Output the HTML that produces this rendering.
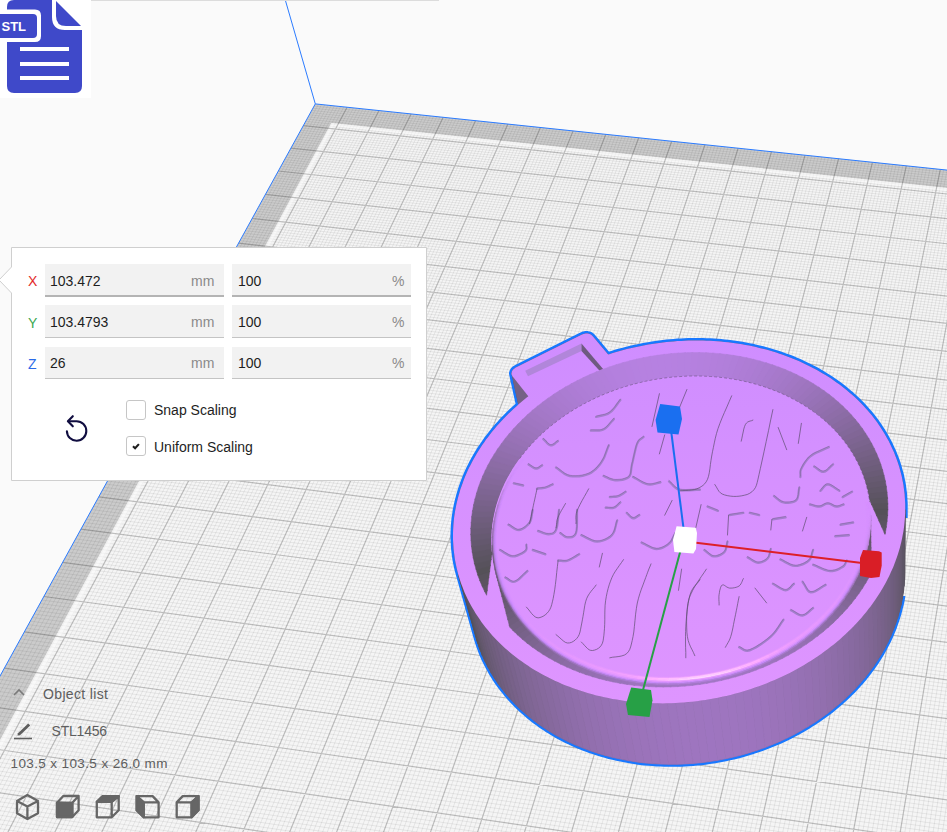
<!DOCTYPE html>
<html><head><meta charset="utf-8">
<style>
html,body{margin:0;padding:0;width:947px;height:832px;overflow:hidden;background:#fafafa;font-family:"Liberation Sans",sans-serif;}
#root{position:relative;width:947px;height:832px;overflow:hidden;}
.abs{position:absolute;}
.t{position:absolute;white-space:nowrap;line-height:1;}
.fld{position:absolute;background:#f2f2f2;border-bottom:1px solid #c4c4c4;box-sizing:border-box;}
.val{position:absolute;font-size:14px;color:#1e1e1e;white-space:nowrap;line-height:1;}
.unit{position:absolute;font-size:14px;color:#8a8a8a;white-space:nowrap;line-height:1;}
.cb{position:absolute;width:20px;height:20px;border:1px solid #c6c6c6;border-radius:3px;background:#fff;box-sizing:border-box;}
</style></head><body><div id="root">
<svg width="947" height="832" viewBox="0 0 947 832" style="position:absolute;left:0;top:0"><defs>
<linearGradient id="topg" gradientUnits="userSpaceOnUse" x1="0" x2="0" y1="335" y2="705"><stop offset="0.000" stop-color="#cf8dff"/><stop offset="0.200" stop-color="#d28fff"/><stop offset="0.400" stop-color="#d691ff"/><stop offset="0.600" stop-color="#d992ff"/><stop offset="0.800" stop-color="#dc94ff"/><stop offset="1.000" stop-color="#de95ff"/></linearGradient>
<linearGradient id="hl" gradientUnits="userSpaceOnUse" x1="495" x2="870" y1="0" y2="0"><stop offset="0" stop-color="#f0a0ff" stop-opacity="0"/><stop offset="0.15" stop-color="#f0a0ff" stop-opacity="0.7"/><stop offset="0.6" stop-color="#f0a4ff" stop-opacity="0.8"/><stop offset="0.9" stop-color="#f0a0ff" stop-opacity="0.4"/><stop offset="1" stop-color="#f0a0ff" stop-opacity="0"/></linearGradient><linearGradient id="hl2" gradientUnits="userSpaceOnUse" x1="495" x2="870" y1="0" y2="0"><stop offset="0" stop-color="#9a70e0" stop-opacity="0"/><stop offset="0.15" stop-color="#9a70e0" stop-opacity="0.7"/><stop offset="0.85" stop-color="#9a70e0" stop-opacity="0.7"/><stop offset="1" stop-color="#9a70e0" stop-opacity="0"/></linearGradient>
<linearGradient id="side" gradientUnits="userSpaceOnUse" x1="452" x2="906" y1="0" y2="0"><stop offset="0" stop-color="#5e5068"/><stop offset="0.12" stop-color="#74608a"/><stop offset="0.5" stop-color="#9a78be"/><stop offset="0.8" stop-color="#8e70b0"/><stop offset="0.93" stop-color="#7a6494"/><stop offset="1" stop-color="#5e5068"/></linearGradient>
<linearGradient id="wall" gradientUnits="userSpaceOnUse" x1="470" x2="888" y1="0" y2="0"><stop offset="0" stop-color="#62567a"/><stop offset="0.07" stop-color="#7a6494"/><stop offset="0.22" stop-color="#a07cca"/><stop offset="0.55" stop-color="#b48ae0"/><stop offset="0.83" stop-color="#9474b8"/><stop offset="0.95" stop-color="#705c88"/><stop offset="1" stop-color="#605470"/></linearGradient>
<linearGradient id="dband" gradientUnits="userSpaceOnUse" x1="490" x2="872" y1="0" y2="0"><stop offset="0" stop-color="#62567a"/><stop offset="0.5" stop-color="#a078c4"/><stop offset="1" stop-color="#62567a"/></linearGradient>
</defs><polygon points="315.3,103.9 1323.1,209.5 1322.8,1365.8 -236.1,1104.5" fill="#f5f5f5"/><polygon points="315.3,103.9 1323.1,209.5 1323.1,227.7 331.3,122.9 -198.9,1110.7 -236.1,1104.5" fill="#cbcbcb"/><path d="M318.5 104.2L-231.3 1105.3M314.1 106.1L1323.1 211.9M321.6 104.6L-226.6 1106.1M312.9 108.2L1323.1 214.3M324.8 104.9L-221.8 1106.9M311.7 110.4L1323.1 216.7M328.0 105.2L-217.0 1107.7M310.5 112.6L1323.1 219.2M331.2 105.6L-212.3 1108.5M309.3 114.8L1323.1 221.6M334.4 105.9L-207.5 1109.3M308.1 116.9L1323.1 224.1M337.6 106.2L-202.7 1110.1M306.9 119.1L1323.1 226.5M340.7 106.6L-197.9 1110.9M305.7 121.3L1323.1 229.0M343.9 106.9L-193.2 1111.7M304.5 123.5L1323.1 231.4M350.3 107.6L-183.6 1113.3M302.1 127.9L1323.1 236.4M353.5 107.9L-178.8 1114.1M300.8 130.2L1323.1 238.9M356.7 108.2L-174.0 1114.9M299.6 132.4L1323.1 241.4M359.9 108.6L-169.2 1115.7M298.4 134.6L1323.1 243.9M363.1 108.9L-164.4 1116.5M297.2 136.8L1323.1 246.4M366.2 109.2L-159.6 1117.3M295.9 139.1L1323.1 248.9M369.4 109.6L-154.8 1118.1M294.7 141.3L1323.1 251.4M372.6 109.9L-150.0 1118.9M293.4 143.6L1323.1 253.9M375.8 110.3L-145.2 1119.7M292.2 145.8L1323.1 256.4M382.2 110.9L-135.6 1121.3M289.7 150.3L1323.1 261.5M385.4 111.3L-130.8 1122.1M288.5 152.6L1323.1 264.1M388.6 111.6L-126.0 1122.9M287.2 154.9L1323.1 266.6M391.8 111.9L-121.2 1123.8M286.0 157.2L1323.1 269.2M395.0 112.3L-116.3 1124.6M284.7 159.5L1323.1 271.7M398.2 112.6L-111.5 1125.4M283.4 161.7L1323.1 274.3M401.5 112.9L-106.7 1126.2M282.2 164.0L1323.1 276.9M404.7 113.3L-101.8 1127.0M280.9 166.3L1323.1 279.5M407.9 113.6L-97.0 1127.8M279.6 168.7L1323.1 282.1M414.3 114.3L-87.3 1129.4M277.1 173.3L1323.1 287.3M417.5 114.6L-82.5 1130.2M275.8 175.6L1323.1 289.9M420.7 115.0L-77.7 1131.0M274.5 177.9L1323.1 292.5M423.9 115.3L-72.8 1131.9M273.2 180.3L1323.1 295.1M427.1 115.6L-68.0 1132.7M271.9 182.6L1323.1 297.8M430.4 116.0L-63.1 1133.5M270.6 185.0L1323.1 300.4M433.6 116.3L-58.2 1134.3M269.3 187.3L1323.1 303.1M436.8 116.6L-53.4 1135.1M268.0 189.7L1323.1 305.7M440.0 117.0L-48.5 1135.9M266.7 192.1L1323.1 308.4M446.5 117.7L-38.8 1137.6M264.1 196.8L1323.1 313.7M449.7 118.0L-33.9 1138.4M262.8 199.2L1323.1 316.4M452.9 118.3L-29.1 1139.2M261.5 201.6L1323.1 319.1M456.1 118.7L-24.2 1140.0M260.2 204.0L1323.1 321.8M459.4 119.0L-19.3 1140.8M258.8 206.4L1323.1 324.5M462.6 119.3L-14.4 1141.6M257.5 208.8L1323.1 327.2M465.8 119.7L-9.5 1142.5M256.2 211.2L1323.1 329.9M469.1 120.0L-4.7 1143.3M254.8 213.6L1323.0 332.7M472.3 120.4L0.2 1144.1M253.5 216.0L1323.0 335.4M478.8 121.0L10.0 1145.7M250.8 220.9L1323.0 340.9M482.0 121.4L14.9 1146.6M249.5 223.3L1323.0 343.6M485.2 121.7L19.8 1147.4M248.1 225.8L1323.0 346.4M488.5 122.1L24.7 1148.2M246.8 228.3L1323.0 349.2M491.7 122.4L29.6 1149.0M245.4 230.7L1323.0 351.9M494.9 122.7L34.5 1149.9M244.1 233.2L1323.0 354.7M498.2 123.1L39.4 1150.7M242.7 235.7L1323.0 357.5M501.4 123.4L44.4 1151.5M241.3 238.1L1323.0 360.3M504.7 123.7L49.3 1152.3M240.0 240.6L1323.0 363.1M511.2 124.4L59.1 1154.0M237.2 245.6L1323.0 368.8M514.4 124.8L64.0 1154.8M235.8 248.1L1323.0 371.6M517.7 125.1L69.0 1155.6M234.4 250.6L1323.0 374.4M520.9 125.4L73.9 1156.5M233.1 253.2L1323.0 377.3M524.2 125.8L78.8 1157.3M231.7 255.7L1323.0 380.1M527.4 126.1L83.8 1158.1M230.3 258.2L1323.0 383.0M530.7 126.5L88.7 1158.9M228.9 260.8L1323.0 385.9M533.9 126.8L93.7 1159.8M227.5 263.3L1323.0 388.7M537.2 127.2L98.6 1160.6M226.1 265.9L1323.0 391.6M543.7 127.8L108.5 1162.3M223.2 271.0L1323.0 397.4M547.0 128.2L113.5 1163.1M221.8 273.5L1323.0 400.3M550.2 128.5L118.4 1163.9M220.4 276.1L1323.0 403.2M553.5 128.9L123.4 1164.7M219.0 278.7L1323.0 406.2M556.7 129.2L128.3 1165.6M217.5 281.3L1323.0 409.1M560.0 129.5L133.3 1166.4M216.1 283.9L1323.0 412.0M563.3 129.9L138.3 1167.2M214.7 286.5L1323.0 415.0M566.5 130.2L143.2 1168.1M213.2 289.1L1323.0 417.9M569.8 130.6L148.2 1168.9M211.8 291.7L1323.0 420.9M576.3 131.3L158.2 1170.6M208.9 297.0L1323.0 426.9M579.6 131.6L163.2 1171.4M207.4 299.6L1323.0 429.8M582.9 131.9L168.1 1172.2M206.0 302.3L1323.0 432.8M586.2 132.3L173.1 1173.1M204.5 304.9L1323.0 435.9M589.4 132.6L178.1 1173.9M203.1 307.6L1323.0 438.9M592.7 133.0L183.1 1174.8M201.6 310.2L1323.0 441.9M596.0 133.3L188.1 1175.6M200.1 312.9L1323.0 444.9M599.3 133.7L193.1 1176.4M198.6 315.6L1323.0 448.0M602.6 134.0L198.1 1177.3M197.2 318.3L1323.0 451.0M609.1 134.7L208.1 1179.0M194.2 323.7L1323.0 457.1M612.4 135.0L213.1 1179.8M192.7 326.4L1323.0 460.2M615.7 135.4L218.2 1180.6M191.2 329.1L1323.0 463.3M619.0 135.7L223.2 1181.5M189.7 331.8L1323.0 466.4M622.3 136.1L228.2 1182.3M188.2 334.6L1323.0 469.5M625.6 136.4L233.2 1183.2M186.7 337.3L1323.0 472.6M628.8 136.8L238.2 1184.0M185.2 340.0L1323.0 475.7M632.1 137.1L243.3 1184.8M183.7 342.8L1323.0 478.8M635.4 137.4L248.3 1185.7M182.1 345.6L1323.0 482.0M642.0 138.1L258.4 1187.4M179.1 351.1L1323.0 488.3M645.3 138.5L263.4 1188.2M177.6 353.9L1323.0 491.4M648.6 138.8L268.5 1189.1M176.0 356.7L1323.0 494.6M651.9 139.2L273.5 1189.9M174.5 359.5L1323.0 497.8M655.2 139.5L278.6 1190.8M172.9 362.3L1323.0 501.0M658.5 139.9L283.6 1191.6M171.4 365.1L1323.0 504.2M661.8 140.2L288.7 1192.5M169.8 367.9L1323.0 507.4M665.1 140.6L293.7 1193.3M168.3 370.7L1323.0 510.6M668.4 140.9L298.8 1194.1M166.7 373.6L1323.0 513.8M675.0 141.6L308.9 1195.8M163.6 379.3L1323.0 520.3M678.3 141.9L314.0 1196.7M162.0 382.1L1323.0 523.6M681.7 142.3L319.1 1197.5M160.4 385.0L1323.0 526.8M685.0 142.6L324.1 1198.4M158.8 387.9L1323.0 530.1M688.3 143.0L329.2 1199.3M157.2 390.7L1323.0 533.4M691.6 143.3L334.3 1200.1M155.7 393.6L1323.0 536.7M694.9 143.7L339.4 1201.0M154.1 396.5L1323.0 540.0M698.2 144.0L344.5 1201.8M152.5 399.4L1323.0 543.3M701.5 144.4L349.6 1202.7M150.8 402.3L1323.0 546.6M708.2 145.1L359.8 1204.4M147.6 408.2L1323.0 553.3M711.5 145.4L364.9 1205.2M146.0 411.1L1323.0 556.6M714.8 145.8L370.0 1206.1M144.4 414.1L1323.0 560.0M718.1 146.1L375.1 1206.9M142.8 417.0L1323.0 563.4M721.5 146.5L380.2 1207.8M141.1 420.0L1323.0 566.7M724.8 146.8L385.3 1208.7M139.5 423.0L1323.0 570.1M728.1 147.2L390.4 1209.5M137.8 425.9L1323.0 573.5M731.4 147.5L395.5 1210.4M136.2 428.9L1323.0 577.0M734.8 147.9L400.6 1211.2M134.6 431.9L1323.0 580.4M741.4 148.5L410.9 1212.9M131.2 437.9L1323.0 587.2M744.8 148.9L416.0 1213.8M129.6 440.9L1323.0 590.7M748.1 149.2L421.1 1214.7M127.9 444.0L1323.0 594.2M751.4 149.6L426.3 1215.5M126.2 447.0L1323.0 597.6M754.8 149.9L431.4 1216.4M124.6 450.1L1323.0 601.1M758.1 150.3L436.6 1217.2M122.9 453.1L1323.0 604.6M761.5 150.6L441.7 1218.1M121.2 456.2L1323.0 608.1M764.8 151.0L446.9 1219.0M119.5 459.2L1323.0 611.6M768.1 151.3L452.0 1219.8M117.8 462.3L1323.0 615.2M774.8 152.0L462.3 1221.6M114.4 468.5L1323.0 622.2M778.2 152.4L467.5 1222.4M112.7 471.6L1323.0 625.8M781.5 152.7L472.6 1223.3M111.0 474.7L1323.0 629.4M784.9 153.1L477.8 1224.2M109.2 477.8L1323.0 632.9M788.2 153.4L483.0 1225.0M107.5 481.0L1323.0 636.5M791.6 153.8L488.2 1225.9M105.8 484.1L1323.0 640.1M794.9 154.2L493.3 1226.8M104.0 487.3L1323.0 643.7M798.3 154.5L498.5 1227.6M102.3 490.4L1323.0 647.4M801.6 154.9L503.7 1228.5M100.6 493.6L1323.0 651.0M808.3 155.6L514.1 1230.2M97.1 500.0L1323.0 658.3M811.7 155.9L519.3 1231.1M95.3 503.2L1323.0 662.0M815.1 156.3L524.4 1232.0M93.5 506.4L1323.0 665.6M818.4 156.6L529.6 1232.9M91.8 509.6L1323.0 669.3M821.8 157.0L534.8 1233.7M90.0 512.8L1323.0 673.0M825.1 157.3L540.0 1234.6M88.2 516.0L1323.0 676.7M828.5 157.7L545.3 1235.5M86.4 519.3L1323.0 680.5M831.9 158.0L550.5 1236.3M84.6 522.5L1323.0 684.2M835.2 158.4L555.7 1237.2M82.8 525.8L1323.0 688.0M842.0 159.1L566.1 1239.0M79.2 532.3L1323.0 695.5M845.4 159.4L571.3 1239.8M77.4 535.6L1323.0 699.3M848.7 159.8L576.6 1240.7M75.6 538.9L1323.0 703.1M852.1 160.1L581.8 1241.6M73.8 542.2L1323.0 706.9M855.5 160.5L587.0 1242.5M71.9 545.5L1323.0 710.7M858.9 160.8L592.2 1243.3M70.1 548.9L1323.0 714.5M862.2 161.2L597.5 1244.2M68.3 552.2L1323.0 718.4M865.6 161.6L602.7 1245.1M66.4 555.6L1323.0 722.2M869.0 161.9L608.0 1246.0M64.6 558.9L1323.0 726.1M875.8 162.6L618.5 1247.7M60.9 565.7L1323.0 733.9M879.1 163.0L623.7 1248.6M59.0 569.0L1323.0 737.8M882.5 163.3L629.0 1249.5M57.1 572.4L1323.0 741.7M885.9 163.7L634.2 1250.4M55.2 575.8L1323.0 745.6M889.3 164.0L639.5 1251.3M53.4 579.3L1323.0 749.5M892.7 164.4L644.8 1252.1M51.5 582.7L1323.0 753.5M896.1 164.7L650.0 1253.0M49.6 586.1L1323.0 757.5M899.5 165.1L655.3 1253.9M47.7 589.6L1323.0 761.4M902.9 165.5L660.6 1254.8M45.8 593.0L1323.0 765.4M909.7 166.2L671.1 1256.6M41.9 600.0L1323.0 773.5M913.0 166.5L676.4 1257.5M40.0 603.5L1323.0 777.5M916.4 166.9L681.7 1258.3M38.1 607.0L1323.0 781.5M919.8 167.2L687.0 1259.2M36.2 610.5L1323.0 785.6M923.2 167.6L692.3 1260.1M34.2 614.0L1323.0 789.7M926.6 167.9L697.6 1261.0M32.3 617.5L1323.0 793.7M930.1 168.3L702.9 1261.9M30.3 621.1L1323.0 797.8M933.5 168.7L708.2 1262.8M28.4 624.6L1323.0 801.9M936.9 169.0L713.5 1263.7M26.4 628.2L1322.9 806.1M943.7 169.7L724.1 1265.5M22.5 635.3L1322.9 814.4M947.1 170.1L729.4 1266.3M20.5 638.9L1322.9 818.5M950.5 170.4L734.7 1267.2M18.5 642.5L1322.9 822.7M953.9 170.8L740.1 1268.1M16.5 646.2L1322.9 826.9M957.3 171.2L745.4 1269.0M14.5 649.8L1322.9 831.1M960.7 171.5L750.7 1269.9M12.5 653.4L1322.9 835.3M964.2 171.9L756.1 1270.8M10.5 657.1L1322.9 839.5M967.6 172.2L761.4 1271.7M8.5 660.8L1322.9 843.8M971.0 172.6L766.7 1272.6M6.4 664.4L1322.9 848.1M977.8 173.3L777.4 1274.4M2.4 671.8L1322.9 856.6M981.3 173.7L782.8 1275.3M0.3 675.5L1322.9 860.9M984.7 174.0L788.1 1276.2M-1.7 679.2L1322.9 865.2M988.1 174.4L793.5 1277.1M-3.8 683.0L1322.9 869.6M991.5 174.7L798.8 1278.0M-5.9 686.7L1322.9 873.9M995.0 175.1L804.2 1278.9M-7.9 690.5L1322.9 878.3M998.4 175.5L809.5 1279.8M-10.0 694.2L1322.9 882.7M1001.8 175.8L814.9 1280.7M-12.1 698.0L1322.9 887.0M1005.2 176.2L820.3 1281.6M-14.2 701.8L1322.9 891.5M1012.1 176.9L831.0 1283.4M-18.4 709.4L1322.9 900.3M1015.5 177.3L836.4 1284.3M-20.5 713.2L1322.9 904.8M1019.0 177.6L841.8 1285.2M-22.6 717.1L1322.9 909.2M1022.4 178.0L847.2 1286.1M-24.7 720.9L1322.9 913.7M1025.9 178.3L852.6 1287.0M-26.8 724.8L1322.9 918.2M1029.3 178.7L858.0 1287.9M-29.0 728.7L1322.9 922.7M1032.7 179.1L863.4 1288.8M-31.1 732.5L1322.9 927.2M1036.2 179.4L868.8 1289.7M-33.3 736.4L1322.9 931.8M1039.6 179.8L874.2 1290.6M-35.4 740.4L1322.9 936.3M1046.5 180.5L885.0 1292.4M-39.7 748.2L1322.9 945.5M1050.0 180.9L890.4 1293.3M-41.9 752.2L1322.9 950.1M1053.4 181.2L895.8 1294.2M-44.1 756.1L1322.9 954.7M1056.9 181.6L901.2 1295.1M-46.3 760.1L1322.9 959.4M1060.3 182.0L906.6 1296.1M-48.5 764.1L1322.9 964.0M1063.8 182.3L912.1 1297.0M-50.7 768.1L1322.9 968.7M1067.2 182.7L917.5 1297.9M-52.9 772.1L1322.9 973.4M1070.7 183.0L922.9 1298.8M-55.1 776.1L1322.9 978.1M1074.2 183.4L928.4 1299.7M-57.3 780.2L1322.9 982.8M1081.1 184.1L939.2 1301.5M-61.8 788.3L1322.9 992.3M1084.5 184.5L944.7 1302.4M-64.1 792.3L1322.9 997.0M1088.0 184.8L950.1 1303.3M-66.3 796.4L1322.9 1001.8M1091.5 185.2L955.6 1304.3M-68.6 800.5L1322.9 1006.6M1094.9 185.6L961.0 1305.2M-70.9 804.7L1322.9 1011.4M1098.4 185.9L966.5 1306.1M-73.1 808.8L1322.9 1016.3M1101.9 186.3L972.0 1307.0M-75.4 812.9L1322.9 1021.1M1105.3 186.7L977.4 1307.9M-77.7 817.1L1322.9 1026.0M1108.8 187.0L982.9 1308.8M-80.0 821.3L1322.9 1030.9M1115.8 187.8L993.8 1310.7M-84.6 829.6L1322.9 1040.7M1119.2 188.1L999.3 1311.6M-86.9 833.9L1322.9 1045.7M1122.7 188.5L1004.8 1312.5M-89.3 838.1L1322.9 1050.6M1126.2 188.8L1010.3 1313.4M-91.6 842.3L1322.9 1055.6M1129.7 189.2L1015.8 1314.3M-94.0 846.6L1322.9 1060.6M1133.1 189.6L1021.3 1315.3M-96.3 850.9L1322.9 1065.6M1136.6 189.9L1026.8 1316.2M-98.7 855.1L1322.9 1070.6M1140.1 190.3L1032.3 1317.1M-101.0 859.4L1322.9 1075.7M1143.6 190.7L1037.8 1318.0M-103.4 863.7L1322.9 1080.7M1150.6 191.4L1048.8 1319.9M-108.2 872.4L1322.9 1090.9M1154.0 191.8L1054.3 1320.8M-110.6 876.8L1322.9 1096.0M1157.5 192.1L1059.8 1321.7M-113.0 881.1L1322.9 1101.2M1161.0 192.5L1065.3 1322.7M-115.4 885.5L1322.9 1106.3M1164.5 192.9L1070.8 1323.6M-117.8 889.9L1322.9 1111.5M1168.0 193.2L1076.4 1324.5M-120.3 894.3L1322.9 1116.7M1171.5 193.6L1081.9 1325.4M-122.7 898.8L1322.9 1121.9M1175.0 194.0L1087.4 1326.4M-125.2 903.2L1322.9 1127.2M1178.5 194.3L1093.0 1327.3M-127.6 907.7L1322.9 1132.4M1185.5 195.1L1104.0 1329.1M-132.6 916.6L1322.9 1143.0M1189.0 195.4L1109.6 1330.1M-135.0 921.1L1322.9 1148.3M1192.5 195.8L1115.1 1331.0M-137.5 925.7L1322.9 1153.6M1196.0 196.2L1120.7 1331.9M-140.0 930.2L1322.9 1159.0M1199.5 196.5L1126.2 1332.9M-142.5 934.7L1322.9 1164.3M1203.0 196.9L1131.8 1333.8M-145.0 939.3L1322.9 1169.7M1206.5 197.3L1137.4 1334.7M-147.6 943.9L1322.9 1175.2M1210.0 197.6L1142.9 1335.7M-150.1 948.5L1322.9 1180.6M1213.6 198.0L1148.5 1336.6M-152.6 953.1L1322.9 1186.0M1220.6 198.7L1159.6 1338.5M-157.8 962.4L1322.9 1197.0M1224.1 199.1L1165.2 1339.4M-160.3 967.0L1322.9 1202.5M1227.6 199.5L1170.8 1340.3M-162.9 971.7L1322.9 1208.0M1231.1 199.8L1176.4 1341.3M-165.5 976.4L1322.9 1213.6M1234.7 200.2L1182.0 1342.2M-168.1 981.1L1322.9 1219.2M1238.2 200.6L1187.6 1343.1M-170.7 985.9L1322.9 1224.8M1241.7 200.9L1193.2 1344.1M-173.3 990.6L1322.9 1230.4M1245.2 201.3L1198.8 1345.0M-175.9 995.4L1322.9 1236.0M1248.7 201.7L1204.4 1346.0M-178.6 1000.1L1322.9 1241.7M1255.8 202.4L1215.6 1347.8M-183.9 1009.7L1322.9 1253.1M1259.3 202.8L1221.2 1348.8M-186.5 1014.6L1322.9 1258.8M1262.9 203.2L1226.8 1349.7M-189.2 1019.4L1322.9 1264.6M1266.4 203.5L1232.4 1350.7M-191.9 1024.3L1322.9 1270.3M1269.9 203.9L1238.1 1351.6M-194.6 1029.2L1322.9 1276.1M1273.5 204.3L1243.7 1352.6M-197.3 1034.1L1322.8 1282.0M1277.0 204.6L1249.3 1353.5M-200.0 1039.0L1322.8 1287.8M1280.5 205.0L1254.9 1354.4M-202.7 1043.9L1322.8 1293.7M1284.1 205.4L1260.6 1355.4M-205.4 1048.8L1322.8 1299.5M1291.1 206.1L1271.9 1357.3M-210.9 1058.8L1322.8 1311.4M1294.7 206.5L1277.5 1358.2M-213.7 1063.8L1322.8 1317.3M1298.2 206.9L1283.2 1359.2M-216.4 1068.8L1322.8 1323.3M1301.8 207.2L1288.8 1360.1M-219.2 1073.9L1322.8 1329.3M1305.3 207.6L1294.5 1361.1M-222.0 1078.9L1322.8 1335.3M1308.9 208.0L1300.1 1362.0M-224.8 1084.0L1322.8 1341.4M1312.4 208.4L1305.8 1363.0M-227.6 1089.1L1322.8 1347.5M1316.0 208.7L1311.5 1363.9M-230.4 1094.2L1322.8 1353.6M1319.5 209.1L1317.2 1364.9M-233.2 1099.3L1322.8 1359.7" stroke="#000" stroke-opacity="0.065" stroke-width="1" fill="none"/><polygon points="1323.1,227.7 331.3,122.9 -198.9,1110.7 -192.2,1111.8 334.2,126.4 1323.1,231.2" fill="#fbfbfb" opacity="0.55"/><path d="M347.1 107.2L-188.4 1112.5M303.3 125.7L1323.1 233.9M379.0 110.6L-140.4 1120.5M291.0 148.1L1323.1 259.0M411.1 113.9L-92.2 1128.6M278.3 171.0L1323.1 284.7M443.2 117.3L-43.7 1136.7M265.4 194.4L1323.1 311.0M475.5 120.7L5.1 1144.9M252.2 218.5L1323.0 338.1M507.9 124.1L54.2 1153.1M238.6 243.1L1323.0 365.9M540.4 127.5L103.6 1161.4M224.7 268.4L1323.0 394.5M573.1 130.9L153.2 1169.7M210.4 294.4L1323.0 423.9M605.8 134.3L203.1 1178.1M195.7 321.0L1323.0 454.1M638.7 137.8L253.3 1186.5M180.6 348.3L1323.0 485.1M671.7 141.2L303.8 1195.0M165.1 376.4L1323.0 517.1M704.9 144.7L354.7 1203.5M149.2 405.3L1323.0 549.9M738.1 148.2L405.8 1212.1M132.9 434.9L1323.0 583.8M771.5 151.7L457.2 1220.7M116.1 465.4L1323.0 618.7M805.0 155.2L508.9 1229.4M98.8 496.8L1323.0 654.6M838.6 158.7L560.9 1238.1M81.0 529.1L1323.0 691.7M872.4 162.3L613.2 1246.9M62.7 562.3L1323.0 730.0M906.3 165.8L665.8 1255.7M43.9 596.5L1323.0 769.4M940.3 169.4L718.8 1264.6M24.4 631.8L1322.9 810.2M974.4 173.0L772.1 1273.5M4.4 668.1L1322.9 852.3M1008.7 176.5L825.7 1282.5M-16.3 705.6L1322.9 895.9M1043.1 180.1L879.6 1291.5M-37.6 744.3L1322.9 940.9M1077.6 183.8L933.8 1300.6M-59.6 784.2L1322.9 987.5M1112.3 187.4L988.4 1309.8M-82.3 825.5L1322.9 1035.8M1147.1 191.0L1043.3 1319.0M-105.8 868.1L1322.9 1085.8M1182.0 194.7L1098.5 1328.2M-130.1 912.1L1322.9 1137.7M1217.1 198.4L1154.1 1337.5M-155.2 957.7L1322.9 1191.5M1252.3 202.1L1210.0 1346.9M-181.2 1004.9L1322.9 1247.4M1287.6 205.8L1266.2 1356.3M-208.1 1053.8L1322.8 1305.4M1323.1 209.5L1322.8 1365.8M-236.1 1104.5L1322.8 1365.8" stroke="#000" stroke-opacity="0.23" stroke-width="1.2" fill="none"/><path d="M1323.1 209.5L315.3 103.9L-236.1 1104.5M315.3 103.9L285 -1" stroke="#2b7bff" stroke-width="1" fill="none"/><clipPath id="bluegap"><path d="M0 0H947V832H0Z M880 518 H947 V596 H880 Z" clip-rule="evenodd"/></clipPath><path d="M592.5 335.9 L591.2 334.8 L589.6 334.0 L587.6 333.6 L585.6 333.5 L583.5 333.9 L581.5 334.7 L515.8 367.6 L514.1 368.7 L512.7 370.0 L511.9 371.6 L511.5 373.2 L511.7 374.7 L518.3 404.7 L516.0 406.7 L513.4 409.0 L510.9 411.4 L508.4 413.8 L506.0 416.2 L503.5 418.7 L501.2 421.2 L498.9 423.8 L496.6 426.3 L494.4 428.9 L492.2 431.6 L490.1 434.2 L488.1 436.9 L486.0 439.6 L484.1 442.4 L482.2 445.1 L480.3 447.9 L478.5 450.7 L476.8 453.6 L475.1 456.4 L473.5 459.3 L471.9 462.2 L470.4 465.2 L468.9 468.1 L467.5 471.1 L466.2 474.1 L464.9 477.1 L463.7 480.1 L462.6 483.2 L461.5 486.2 L460.4 489.3 L459.5 492.4 L458.6 495.5 L457.8 498.6 L457.0 501.7 L456.3 504.8 L455.7 508.0 L455.1 511.1 L454.6 514.3 L454.1 517.5 L453.8 520.6 L453.5 523.8 L453.3 527.0 L453.1 530.2 L453.0 533.4 L453.0 536.5 L453.0 539.7 L453.2 542.9 L453.4 546.1 L453.6 549.3 L454.0 552.5 L454.4 555.6 L454.8 558.8 L455.4 562.0 L456.0 565.1 L456.7 568.2 L457.5 571.4 L458.3 574.5 L476.0 637.6 L476.9 640.6 L477.9 643.7 L478.9 646.7 L480.0 649.7 L481.2 652.7 L482.4 655.7 L483.7 658.7 L485.1 661.6 L486.6 664.5 L488.1 667.4 L489.7 670.3 L491.3 673.2 L493.0 676.0 L494.8 678.8 L496.6 681.5 L498.5 684.3 L500.5 687.0 L502.6 689.7 L504.7 692.3 L506.8 694.9 L509.1 697.5 L511.4 700.1 L513.7 702.6 L516.1 705.0 L518.6 707.5 L521.2 709.9 L523.8 712.2 L526.4 714.5 L529.1 716.8 L531.9 719.0 L534.7 721.2 L537.6 723.3 L540.5 725.4 L543.5 727.5 L546.6 729.5 L549.7 731.4 L552.8 733.3 L556.0 735.2 L559.2 737.0 L562.5 738.7 L565.9 740.4 L569.2 742.1 L572.7 743.7 L576.1 745.2 L579.6 746.7 L583.2 748.1 L586.8 749.5 L590.4 750.8 L594.0 752.0 L597.7 753.2 L601.5 754.4 L605.2 755.4 L609.0 756.5 L612.8 757.4 L616.7 758.3 L620.6 759.1 L624.5 759.9 L628.4 760.6 L632.3 761.3 L636.3 761.9 L640.3 762.4 L644.3 762.9 L648.3 763.3 L652.3 763.6 L656.4 763.9 L660.4 764.1 L664.5 764.2 L668.6 764.3 L672.6 764.3 L676.7 764.3 L680.8 764.2 L684.9 764.0 L689.0 763.7 L693.1 763.4 L697.2 763.1 L701.3 762.7 L705.4 762.2 L709.4 761.6 L713.5 761.0 L717.6 760.3 L721.6 759.6 L725.6 758.8 L729.6 757.9 L733.6 757.0 L737.6 756.0 L741.6 755.0 L745.5 753.9 L749.4 752.7 L753.3 751.5 L757.2 750.2 L761.1 748.9 L764.9 747.5 L768.7 746.0 L772.4 744.5 L776.1 743.0 L779.8 741.4 L783.5 739.7 L787.1 738.0 L790.7 736.2 L794.2 734.4 L797.7 732.5 L801.2 730.6 L804.6 728.6 L808.0 726.6 L811.3 724.5 L814.6 722.4 L817.9 720.2 L821.1 718.0 L824.2 715.8 L827.3 713.5 L830.4 711.2 L833.3 708.8 L836.3 706.4 L839.2 703.9 L842.0 701.5 L844.8 698.9 L847.5 696.4 L850.2 693.8 L852.8 691.2 L855.3 688.5 L857.8 685.8 L860.3 683.1 L862.6 680.3 L865.0 677.5 L867.2 674.7 L869.4 671.9 L871.5 669.0 L873.6 666.2 L875.6 663.3 L877.5 660.3 L879.4 657.4 L881.2 654.4 L882.9 651.4 L884.6 648.4 L886.2 645.4 L887.8 642.3 L889.3 639.3 L890.7 636.2 L892.0 633.1 L893.3 630.1 L894.5 627.0 L895.6 623.8 L896.7 620.7 L897.7 617.6 L898.7 614.5 L899.5 611.3 L900.3 608.2 L901.1 605.1 L901.8 601.9 L902.4 598.8 L902.9 595.6 L903.4 592.5 L903.8 589.3 L904.1 586.2 L904.4 583.1 L904.6 579.9 L904.7 576.8 L904.8 573.7 L905.2 509.7 L905.2 506.6 L905.2 503.4 L905.0 500.3 L904.8 497.2 L904.6 494.1 L904.2 491.0 L903.8 487.9 L903.4 484.8 L902.8 481.8 L902.2 478.8 L901.6 475.7 L900.8 472.7 L900.0 469.8 L899.2 466.8 L898.3 463.9 L897.3 460.9 L896.2 458.0 L895.1 455.2 L894.0 452.3 L892.7 449.5 L891.4 446.7 L890.1 443.9 L888.7 441.1 L887.2 438.4 L885.7 435.7 L884.1 433.0 L882.5 430.4 L880.8 427.8 L879.1 425.2 L877.3 422.6 L875.4 420.1 L873.5 417.6 L871.6 415.1 L869.6 412.7 L867.5 410.3 L865.4 407.9 L863.2 405.6 L861.0 403.3 L858.8 401.1 L856.5 398.8 L854.1 396.6 L851.8 394.5 L849.3 392.4 L846.8 390.3 L844.3 388.3 L841.8 386.3 L839.2 384.3 L836.5 382.4 L833.8 380.5 L831.1 378.6 L828.3 376.8 L825.5 375.1 L822.7 373.4 L819.8 371.7 L816.9 370.0 L814.0 368.4 L811.0 366.9 L808.0 365.4 L804.9 363.9 L801.9 362.5 L798.8 361.1 L795.6 359.7 L792.5 358.4 L789.3 357.2 L786.0 356.0 L782.8 354.8 L779.5 353.7 L776.2 352.6 L772.9 351.6 L769.6 350.6 L766.2 349.6 L762.8 348.7 L759.4 347.9 L756.0 347.1 L752.6 346.3 L749.1 345.6 L745.6 344.9 L742.1 344.3 L738.6 343.7 L735.1 343.2 L731.6 342.7 L728.0 342.3 L724.4 341.9 L720.9 341.6 L717.3 341.3 L713.7 341.0 L710.1 340.8 L706.5 340.7 L702.9 340.6 L699.2 340.5 L695.6 340.5 L692.0 340.5 L688.3 340.6 L684.7 340.7 L681.1 340.9 L677.4 341.1 L673.8 341.4 L670.1 341.7 L666.5 342.1 L662.9 342.5 L659.2 342.9 L655.6 343.4 L652.0 344.0 L648.4 344.6 L644.8 345.2 L641.2 345.9 L637.6 346.7 L634.0 347.4 L630.4 348.3 L626.8 349.1 L623.3 350.1 L619.8 351.0 L616.2 352.0 L612.7 353.1 L609.2 354.2 L608.2 354.5Z" fill="none" stroke="#1878ff" stroke-width="5" stroke-linejoin="round" clip-path="url(#bluegap)"/><path d="M592.5 335.9 L591.2 334.8 L589.6 334.0 L587.6 333.6 L585.6 333.5 L583.5 333.9 L581.5 334.7 L515.8 367.6 L514.1 368.7 L512.7 370.0 L511.9 371.6 L511.5 373.2 L511.7 374.7 L518.3 404.7 L516.0 406.7 L513.4 409.0 L510.9 411.4 L508.4 413.8 L506.0 416.2 L503.5 418.7 L501.2 421.2 L498.9 423.8 L496.6 426.3 L494.4 428.9 L492.2 431.6 L490.1 434.2 L488.1 436.9 L486.0 439.6 L484.1 442.4 L482.2 445.1 L480.3 447.9 L478.5 450.7 L476.8 453.6 L475.1 456.4 L473.5 459.3 L471.9 462.2 L470.4 465.2 L468.9 468.1 L467.5 471.1 L466.2 474.1 L464.9 477.1 L463.7 480.1 L462.6 483.2 L461.5 486.2 L460.4 489.3 L459.5 492.4 L458.6 495.5 L457.8 498.6 L457.0 501.7 L456.3 504.8 L455.7 508.0 L455.1 511.1 L454.6 514.3 L454.1 517.5 L453.8 520.6 L453.5 523.8 L453.3 527.0 L453.1 530.2 L453.0 533.4 L453.0 536.5 L453.0 539.7 L453.2 542.9 L453.4 546.1 L453.6 549.3 L454.0 552.5 L454.4 555.6 L454.8 558.8 L455.4 562.0 L456.0 565.1 L456.7 568.2 L457.5 571.4 L458.3 574.5 L476.0 637.6 L476.9 640.6 L477.9 643.7 L478.9 646.7 L480.0 649.7 L481.2 652.7 L482.4 655.7 L483.7 658.7 L485.1 661.6 L486.6 664.5 L488.1 667.4 L489.7 670.3 L491.3 673.2 L493.0 676.0 L494.8 678.8 L496.6 681.5 L498.5 684.3 L500.5 687.0 L502.6 689.7 L504.7 692.3 L506.8 694.9 L509.1 697.5 L511.4 700.1 L513.7 702.6 L516.1 705.0 L518.6 707.5 L521.2 709.9 L523.8 712.2 L526.4 714.5 L529.1 716.8 L531.9 719.0 L534.7 721.2 L537.6 723.3 L540.5 725.4 L543.5 727.5 L546.6 729.5 L549.7 731.4 L552.8 733.3 L556.0 735.2 L559.2 737.0 L562.5 738.7 L565.9 740.4 L569.2 742.1 L572.7 743.7 L576.1 745.2 L579.6 746.7 L583.2 748.1 L586.8 749.5 L590.4 750.8 L594.0 752.0 L597.7 753.2 L601.5 754.4 L605.2 755.4 L609.0 756.5 L612.8 757.4 L616.7 758.3 L620.6 759.1 L624.5 759.9 L628.4 760.6 L632.3 761.3 L636.3 761.9 L640.3 762.4 L644.3 762.9 L648.3 763.3 L652.3 763.6 L656.4 763.9 L660.4 764.1 L664.5 764.2 L668.6 764.3 L672.6 764.3 L676.7 764.3 L680.8 764.2 L684.9 764.0 L689.0 763.7 L693.1 763.4 L697.2 763.1 L701.3 762.7 L705.4 762.2 L709.4 761.6 L713.5 761.0 L717.6 760.3 L721.6 759.6 L725.6 758.8 L729.6 757.9 L733.6 757.0 L737.6 756.0 L741.6 755.0 L745.5 753.9 L749.4 752.7 L753.3 751.5 L757.2 750.2 L761.1 748.9 L764.9 747.5 L768.7 746.0 L772.4 744.5 L776.1 743.0 L779.8 741.4 L783.5 739.7 L787.1 738.0 L790.7 736.2 L794.2 734.4 L797.7 732.5 L801.2 730.6 L804.6 728.6 L808.0 726.6 L811.3 724.5 L814.6 722.4 L817.9 720.2 L821.1 718.0 L824.2 715.8 L827.3 713.5 L830.4 711.2 L833.3 708.8 L836.3 706.4 L839.2 703.9 L842.0 701.5 L844.8 698.9 L847.5 696.4 L850.2 693.8 L852.8 691.2 L855.3 688.5 L857.8 685.8 L860.3 683.1 L862.6 680.3 L865.0 677.5 L867.2 674.7 L869.4 671.9 L871.5 669.0 L873.6 666.2 L875.6 663.3 L877.5 660.3 L879.4 657.4 L881.2 654.4 L882.9 651.4 L884.6 648.4 L886.2 645.4 L887.8 642.3 L889.3 639.3 L890.7 636.2 L892.0 633.1 L893.3 630.1 L894.5 627.0 L895.6 623.8 L896.7 620.7 L897.7 617.6 L898.7 614.5 L899.5 611.3 L900.3 608.2 L901.1 605.1 L901.8 601.9 L902.4 598.8 L902.9 595.6 L903.4 592.5 L903.8 589.3 L904.1 586.2 L904.4 583.1 L904.6 579.9 L904.7 576.8 L904.8 573.7 L905.2 509.7 L905.2 506.6 L905.2 503.4 L905.0 500.3 L904.8 497.2 L904.6 494.1 L904.2 491.0 L903.8 487.9 L903.4 484.8 L902.8 481.8 L902.2 478.8 L901.6 475.7 L900.8 472.7 L900.0 469.8 L899.2 466.8 L898.3 463.9 L897.3 460.9 L896.2 458.0 L895.1 455.2 L894.0 452.3 L892.7 449.5 L891.4 446.7 L890.1 443.9 L888.7 441.1 L887.2 438.4 L885.7 435.7 L884.1 433.0 L882.5 430.4 L880.8 427.8 L879.1 425.2 L877.3 422.6 L875.4 420.1 L873.5 417.6 L871.6 415.1 L869.6 412.7 L867.5 410.3 L865.4 407.9 L863.2 405.6 L861.0 403.3 L858.8 401.1 L856.5 398.8 L854.1 396.6 L851.8 394.5 L849.3 392.4 L846.8 390.3 L844.3 388.3 L841.8 386.3 L839.2 384.3 L836.5 382.4 L833.8 380.5 L831.1 378.6 L828.3 376.8 L825.5 375.1 L822.7 373.4 L819.8 371.7 L816.9 370.0 L814.0 368.4 L811.0 366.9 L808.0 365.4 L804.9 363.9 L801.9 362.5 L798.8 361.1 L795.6 359.7 L792.5 358.4 L789.3 357.2 L786.0 356.0 L782.8 354.8 L779.5 353.7 L776.2 352.6 L772.9 351.6 L769.6 350.6 L766.2 349.6 L762.8 348.7 L759.4 347.9 L756.0 347.1 L752.6 346.3 L749.1 345.6 L745.6 344.9 L742.1 344.3 L738.6 343.7 L735.1 343.2 L731.6 342.7 L728.0 342.3 L724.4 341.9 L720.9 341.6 L717.3 341.3 L713.7 341.0 L710.1 340.8 L706.5 340.7 L702.9 340.6 L699.2 340.5 L695.6 340.5 L692.0 340.5 L688.3 340.6 L684.7 340.7 L681.1 340.9 L677.4 341.1 L673.8 341.4 L670.1 341.7 L666.5 342.1 L662.9 342.5 L659.2 342.9 L655.6 343.4 L652.0 344.0 L648.4 344.6 L644.8 345.2 L641.2 345.9 L637.6 346.7 L634.0 347.4 L630.4 348.3 L626.8 349.1 L623.3 350.1 L619.8 351.0 L616.2 352.0 L612.7 353.1 L609.2 354.2 L608.2 354.5Z" fill="#5a5460"/><path d="M902.7 535.1 L901.4 541.5 L901.1 605.1 L902.4 598.8Z" fill="#62576b" stroke="#62576b" stroke-width="0.7"/><path d="M901.4 541.5 L899.8 547.9 L899.5 611.3 L901.1 605.1Z" fill="#65596f" stroke="#65596f" stroke-width="0.7"/><path d="M899.8 547.9 L897.9 554.2 L897.7 617.6 L899.5 611.3Z" fill="#685a73" stroke="#685a73" stroke-width="0.7"/><path d="M897.9 554.2 L895.7 560.6 L895.6 623.8 L897.7 617.6Z" fill="#6b5c77" stroke="#6b5c77" stroke-width="0.7"/><path d="M895.7 560.6 L893.3 566.9 L893.3 630.1 L895.6 623.8Z" fill="#6e5d7b" stroke="#6e5d7b" stroke-width="0.7"/><path d="M893.3 566.9 L890.5 573.1 L890.7 636.2 L893.3 630.1Z" fill="#705e7f" stroke="#705e7f" stroke-width="0.7"/><path d="M890.5 573.1 L887.5 579.3 L887.8 642.3 L890.7 636.2Z" fill="#736083" stroke="#736083" stroke-width="0.7"/><path d="M887.5 579.3 L884.2 585.5 L884.6 648.4 L887.8 642.3Z" fill="#766186" stroke="#766186" stroke-width="0.7"/><path d="M884.2 585.5 L880.7 591.6 L881.2 654.4 L884.6 648.4Z" fill="#78628a" stroke="#78628a" stroke-width="0.7"/><path d="M880.7 591.6 L876.8 597.6 L877.5 660.3 L881.2 654.4Z" fill="#7b638d" stroke="#7b638d" stroke-width="0.7"/><path d="M876.8 597.6 L872.7 603.5 L873.6 666.2 L877.5 660.3Z" fill="#7d6591" stroke="#7d6591" stroke-width="0.7"/><path d="M872.7 603.5 L868.3 609.3 L869.4 671.9 L873.6 666.2Z" fill="#806694" stroke="#806694" stroke-width="0.7"/><path d="M868.3 609.3 L863.7 615.1 L865.0 677.5 L869.4 671.9Z" fill="#826798" stroke="#826798" stroke-width="0.7"/><path d="M863.7 615.1 L858.8 620.7 L860.3 683.1 L865.0 677.5Z" fill="#84689b" stroke="#84689b" stroke-width="0.7"/><path d="M858.8 620.7 L853.7 626.2 L855.3 688.5 L860.3 683.1Z" fill="#86699e" stroke="#86699e" stroke-width="0.7"/><path d="M853.7 626.2 L848.3 631.6 L850.2 693.8 L855.3 688.5Z" fill="#886aa1" stroke="#886aa1" stroke-width="0.7"/><path d="M848.3 631.6 L842.7 636.8 L844.8 698.9 L850.2 693.8Z" fill="#8a6ba4" stroke="#8a6ba4" stroke-width="0.7"/><path d="M842.7 636.8 L836.8 641.9 L839.2 703.9 L844.8 698.9Z" fill="#8c6ca6" stroke="#8c6ca6" stroke-width="0.7"/><path d="M836.8 641.9 L830.7 646.8 L833.3 708.8 L839.2 703.9Z" fill="#8e6da9" stroke="#8e6da9" stroke-width="0.7"/><path d="M830.7 646.8 L824.4 651.6 L827.3 713.5 L833.3 708.8Z" fill="#906eab" stroke="#906eab" stroke-width="0.7"/><path d="M824.4 651.6 L817.9 656.2 L821.1 718.0 L827.3 713.5Z" fill="#926fae" stroke="#926fae" stroke-width="0.7"/><path d="M817.9 656.2 L811.1 660.7 L814.6 722.4 L821.1 718.0Z" fill="#9370b0" stroke="#9370b0" stroke-width="0.7"/><path d="M811.1 660.7 L804.2 664.9 L808.0 726.6 L814.6 722.4Z" fill="#9570b2" stroke="#9570b2" stroke-width="0.7"/><path d="M804.2 664.9 L797.1 669.0 L801.2 730.6 L808.0 726.6Z" fill="#9671b4" stroke="#9671b4" stroke-width="0.7"/><path d="M797.1 669.0 L789.8 672.9 L794.2 734.4 L801.2 730.6Z" fill="#9772b6" stroke="#9772b6" stroke-width="0.7"/><path d="M789.8 672.9 L782.4 676.5 L787.1 738.0 L794.2 734.4Z" fill="#9972b8" stroke="#9972b8" stroke-width="0.7"/><path d="M782.4 676.5 L774.8 680.0 L779.8 741.4 L787.1 738.0Z" fill="#9a73b9" stroke="#9a73b9" stroke-width="0.7"/><path d="M774.8 680.0 L767.0 683.2 L772.4 744.5 L779.8 741.4Z" fill="#9b73ba" stroke="#9b73ba" stroke-width="0.7"/><path d="M767.0 683.2 L759.1 686.2 L764.9 747.5 L772.4 744.5Z" fill="#9c74bc" stroke="#9c74bc" stroke-width="0.7"/><path d="M759.1 686.2 L751.1 689.0 L757.2 750.2 L764.9 747.5Z" fill="#9c74bd" stroke="#9c74bd" stroke-width="0.7"/><path d="M751.1 689.0 L743.0 691.5 L749.4 752.7 L757.2 750.2Z" fill="#9d74be" stroke="#9d74be" stroke-width="0.7"/><path d="M743.0 691.5 L734.8 693.8 L741.6 755.0 L749.4 752.7Z" fill="#9d75be" stroke="#9d75be" stroke-width="0.7"/><path d="M734.8 693.8 L726.5 695.9 L733.6 757.0 L741.6 755.0Z" fill="#9e75bf" stroke="#9e75bf" stroke-width="0.7"/><path d="M726.5 695.9 L718.1 697.7 L725.6 758.8 L733.6 757.0Z" fill="#9e75bf" stroke="#9e75bf" stroke-width="0.7"/><path d="M718.1 697.7 L709.7 699.3 L717.6 760.3 L725.6 758.8Z" fill="#9e75bf" stroke="#9e75bf" stroke-width="0.7"/><path d="M709.7 699.3 L701.2 700.6 L709.4 761.6 L717.6 760.3Z" fill="#9e75c0" stroke="#9e75c0" stroke-width="0.7"/><path d="M701.2 700.6 L692.7 701.7 L701.3 762.7 L709.4 761.6Z" fill="#9e75bf" stroke="#9e75bf" stroke-width="0.7"/><path d="M692.7 701.7 L684.1 702.5 L693.1 763.4 L701.3 762.7Z" fill="#9e75bf" stroke="#9e75bf" stroke-width="0.7"/><path d="M684.1 702.5 L675.6 703.0 L684.9 764.0 L693.1 763.4Z" fill="#9e75bf" stroke="#9e75bf" stroke-width="0.7"/><path d="M675.6 703.0 L667.0 703.3 L676.7 764.3 L684.9 764.0Z" fill="#9d75be" stroke="#9d75be" stroke-width="0.7"/><path d="M667.0 703.3 L658.5 703.3 L668.6 764.3 L676.7 764.3Z" fill="#9d74bd" stroke="#9d74bd" stroke-width="0.7"/><path d="M658.5 703.3 L650.0 703.1 L660.4 764.1 L668.6 764.3Z" fill="#9c74bd" stroke="#9c74bd" stroke-width="0.7"/><path d="M650.0 703.1 L641.5 702.6 L652.3 763.6 L660.4 764.1Z" fill="#9b74bb" stroke="#9b74bb" stroke-width="0.7"/><path d="M641.5 702.6 L633.1 701.9 L644.3 762.9 L652.3 763.6Z" fill="#9b73ba" stroke="#9b73ba" stroke-width="0.7"/><path d="M633.1 701.9 L624.8 700.9 L636.3 761.9 L644.3 762.9Z" fill="#9a73b9" stroke="#9a73b9" stroke-width="0.7"/><path d="M624.8 700.9 L616.5 699.6 L628.4 760.6 L636.3 761.9Z" fill="#9972b7" stroke="#9972b7" stroke-width="0.7"/><path d="M616.5 699.6 L608.3 698.1 L620.6 759.1 L628.4 760.6Z" fill="#9772b6" stroke="#9772b6" stroke-width="0.7"/><path d="M608.3 698.1 L600.3 696.3 L612.8 757.4 L620.6 759.1Z" fill="#9671b4" stroke="#9671b4" stroke-width="0.7"/><path d="M600.3 696.3 L592.3 694.3 L605.2 755.4 L612.8 757.4Z" fill="#9570b2" stroke="#9570b2" stroke-width="0.7"/><path d="M592.3 694.3 L584.5 692.1 L597.7 753.2 L605.2 755.4Z" fill="#9370b0" stroke="#9370b0" stroke-width="0.7"/><path d="M584.5 692.1 L576.9 689.6 L590.4 750.8 L597.7 753.2Z" fill="#926fae" stroke="#926fae" stroke-width="0.7"/><path d="M576.9 689.6 L569.4 686.8 L583.2 748.1 L590.4 750.8Z" fill="#906eab" stroke="#906eab" stroke-width="0.7"/><path d="M569.4 686.8 L562.0 683.9 L576.1 745.2 L583.2 748.1Z" fill="#8e6da9" stroke="#8e6da9" stroke-width="0.7"/><path d="M562.0 683.9 L554.8 680.7 L569.2 742.1 L576.1 745.2Z" fill="#8c6ca6" stroke="#8c6ca6" stroke-width="0.7"/><path d="M554.8 680.7 L547.9 677.3 L562.5 738.7 L569.2 742.1Z" fill="#8a6ba3" stroke="#8a6ba3" stroke-width="0.7"/><path d="M547.9 677.3 L541.1 673.7 L556.0 735.2 L562.5 738.7Z" fill="#886aa0" stroke="#886aa0" stroke-width="0.7"/><path d="M541.1 673.7 L534.5 669.9 L549.7 731.4 L556.0 735.2Z" fill="#86699d" stroke="#86699d" stroke-width="0.7"/><path d="M534.5 669.9 L528.1 665.8 L543.5 727.5 L549.7 731.4Z" fill="#84689a" stroke="#84689a" stroke-width="0.7"/><path d="M528.1 665.8 L521.9 661.6 L537.6 723.3 L543.5 727.5Z" fill="#826797" stroke="#826797" stroke-width="0.7"/><path d="M521.9 661.6 L516.0 657.2 L531.9 719.0 L537.6 723.3Z" fill="#7f6694" stroke="#7f6694" stroke-width="0.7"/><path d="M516.0 657.2 L510.3 652.7 L526.4 714.5 L531.9 719.0Z" fill="#7d6591" stroke="#7d6591" stroke-width="0.7"/><path d="M510.3 652.7 L504.8 647.9 L521.2 709.9 L526.4 714.5Z" fill="#7a638d" stroke="#7a638d" stroke-width="0.7"/><path d="M504.8 647.9 L499.6 643.0 L516.1 705.0 L521.2 709.9Z" fill="#786289" stroke="#786289" stroke-width="0.7"/><path d="M499.6 643.0 L494.7 637.9 L511.4 700.1 L516.1 705.0Z" fill="#756186" stroke="#756186" stroke-width="0.7"/><path d="M494.7 637.9 L490.0 632.7 L506.8 694.9 L511.4 700.1Z" fill="#735f82" stroke="#735f82" stroke-width="0.7"/><path d="M490.0 632.7 L485.6 627.4 L502.6 689.7 L506.8 694.9Z" fill="#705e7e" stroke="#705e7e" stroke-width="0.7"/><path d="M485.6 627.4 L481.4 621.9 L498.5 684.3 L502.6 689.7Z" fill="#6d5d7a" stroke="#6d5d7a" stroke-width="0.7"/><path d="M481.4 621.9 L477.6 616.3 L494.8 678.8 L498.5 684.3Z" fill="#6a5b77" stroke="#6a5b77" stroke-width="0.7"/><path d="M477.6 616.3 L474.0 610.6 L491.3 673.2 L494.8 678.8Z" fill="#685a73" stroke="#685a73" stroke-width="0.7"/><path d="M474.0 610.6 L470.6 604.8 L488.1 667.4 L491.3 673.2Z" fill="#65596f" stroke="#65596f" stroke-width="0.7"/><path d="M470.6 604.8 L467.6 598.9 L485.1 661.6 L488.1 667.4Z" fill="#62576b" stroke="#62576b" stroke-width="0.7"/><path d="M467.6 598.9 L464.8 592.9 L482.4 655.7 L485.1 661.6Z" fill="#5f5667" stroke="#5f5667" stroke-width="0.7"/><path d="M464.8 592.9 L462.4 586.8 L480.0 649.7 L482.4 655.7Z" fill="#5c5462" stroke="#5c5462" stroke-width="0.7"/><path d="M462.4 586.8 L460.2 580.7 L477.9 643.7 L480.0 649.7Z" fill="#59535e" stroke="#59535e" stroke-width="0.7"/><path d="M460.2 580.7 L458.3 574.5 L476.0 637.6 L477.9 643.7Z" fill="#56515a" stroke="#56515a" stroke-width="0.7"/><path d="M905.2 509.7 L905.0 516.0 L904.6 579.9 L904.8 573.7Z" fill="#57515b" stroke="#57515b" stroke-width="0.7"/><path d="M905.0 516.0 L904.5 522.4 L904.1 586.2 L904.6 579.9Z" fill="#59535f" stroke="#59535f" stroke-width="0.7"/><path d="M904.5 522.4 L903.8 528.8 L903.4 592.5 L904.1 586.2Z" fill="#5c5463" stroke="#5c5463" stroke-width="0.7"/><path d="M903.8 528.8 L902.7 535.1 L902.4 598.8 L903.4 592.5Z" fill="#5f5667" stroke="#5f5667" stroke-width="0.7"/><path d="M634.2 438.7 L556.6 480.1 L526.7 441.4 L526.0 440.0 L511.7 374.7 L511.5 373.2 L511.9 371.6 L512.7 370.0 L514.1 368.7 L515.8 367.6 L581.5 334.7 L583.5 333.9 L585.6 333.5 L587.6 333.6 L589.6 334.0 L591.2 334.8 L592.5 335.9 L624.2 373.5Z" fill="#756185"/><path d="M543.3 415.2 L512.5 376.2 L511.7 374.7 L511.5 373.2 L511.9 371.6 L512.7 370.0 L514.1 368.7 L515.8 367.6 L581.5 334.7 L583.5 333.9 L585.6 333.5 L587.6 333.6 L589.6 334.0 L591.2 334.8 L592.5 335.9 L624.2 373.5Z" fill="url(#topg)"/><path d="M902.7 535.1 L902.1 538.3 L901.4 541.5 L900.6 544.7 L899.8 547.9 L898.9 551.1 L897.9 554.2 L896.8 557.4 L895.7 560.6 L894.5 563.7 L893.3 566.9 L891.9 570.0 L890.5 573.1 L889.1 576.2 L887.5 579.3 L885.9 582.4 L884.2 585.5 L882.5 588.5 L880.7 591.6 L878.8 594.6 L876.8 597.6 L874.8 600.5 L872.7 603.5 L870.6 606.4 L868.3 609.3 L866.1 612.2 L863.7 615.1 L861.3 617.9 L858.8 620.7 L856.3 623.5 L853.7 626.2 L851.0 628.9 L848.3 631.6 L845.5 634.2 L842.7 636.8 L839.8 639.4 L836.8 641.9 L833.8 644.4 L830.7 646.8 L827.6 649.3 L824.4 651.6 L821.2 654.0 L817.9 656.2 L814.5 658.5 L811.1 660.7 L807.7 662.8 L804.2 664.9 L800.7 667.0 L797.1 669.0 L793.5 671.0 L789.8 672.9 L786.1 674.7 L782.4 676.5 L778.6 678.3 L774.8 680.0 L770.9 681.6 L767.0 683.2 L763.1 684.7 L759.1 686.2 L755.1 687.6 L751.1 689.0 L747.1 690.3 L743.0 691.5 L738.9 692.7 L734.8 693.8 L730.6 694.9 L726.5 695.9 L722.3 696.8 L718.1 697.7 L713.9 698.5 L709.7 699.3 L705.4 700.0 L701.2 700.6 L696.9 701.2 L692.7 701.7 L688.4 702.1 L684.1 702.5 L679.8 702.8 L675.6 703.0 L671.3 703.2 L667.0 703.3 L662.7 703.4 L658.5 703.3 L654.2 703.3 L650.0 703.1 L645.7 702.9 L641.5 702.6 L637.3 702.3 L633.1 701.9 L628.9 701.4 L624.8 700.9 L620.6 700.3 L616.5 699.6 L612.4 698.9 L608.3 698.1 L604.3 697.2 L600.3 696.3 L596.3 695.4 L592.3 694.3 L588.4 693.2 L584.5 692.1 L580.7 690.8 L576.9 689.6 L573.1 688.2 L569.4 686.8 L565.7 685.4 L562.0 683.9 L558.4 682.3 L554.8 680.7 L551.3 679.0 L547.9 677.3 L544.4 675.5 L541.1 673.7 L537.7 671.8 L534.5 669.9 L531.2 667.9 L528.1 665.8 L525.0 663.8 L521.9 661.6 L518.9 659.5 L516.0 657.2 L513.1 655.0 L510.3 652.7 L507.5 650.3 L504.8 647.9 L502.2 645.5 L499.6 643.0 L497.1 640.5 L494.7 637.9 L492.3 635.4 L490.0 632.7 L487.8 630.1 L485.6 627.4 L483.5 624.7 L481.4 621.9 L479.5 619.1 L477.6 616.3 L475.7 613.5 L474.0 610.6 L472.3 607.7 L470.6 604.8 L469.1 601.9 L467.6 598.9 L466.2 595.9 L464.8 592.9 L463.6 589.9 L462.4 586.8 L461.2 583.8 L460.2 580.7 L459.2 577.6 L458.3 574.5 L457.5 571.4 L456.7 568.2 L456.0 565.1 L455.4 562.0 L454.8 558.8 L454.4 555.6 L454.0 552.5 L453.6 549.3 L453.4 546.1 L453.2 542.9 L453.0 539.7 L453.0 536.5 L453.0 533.4 L453.1 530.2 L453.3 527.0 L453.5 523.8 L453.8 520.6 L454.1 517.5 L454.6 514.3 L455.1 511.1 L455.7 508.0 L456.3 504.8 L457.0 501.7 L457.8 498.6 L458.6 495.5 L459.5 492.4 L460.4 489.3 L461.5 486.2 L462.6 483.2 L463.7 480.1 L464.9 477.1 L466.2 474.1 L467.5 471.1 L468.9 468.1 L470.4 465.2 L471.9 462.2 L473.5 459.3 L475.1 456.4 L476.8 453.6 L478.5 450.7 L480.3 447.9 L482.2 445.1 L484.1 442.4 L486.0 439.6 L488.1 436.9 L490.1 434.2 L492.2 431.6 L494.4 428.9 L496.6 426.3 L498.9 423.8 L501.2 421.2 L503.5 418.7 L506.0 416.2 L508.4 413.8 L510.9 411.4 L513.4 409.0 L516.0 406.7 L518.6 404.3 L521.3 402.1 L524.0 399.8 L526.7 397.6 L529.5 395.5 L532.4 393.3 L535.2 391.2 L538.1 389.2 L541.0 387.2 L544.0 385.2 L547.0 383.2 L550.0 381.3 L553.1 379.5 L556.2 377.6 L559.3 375.9 L562.5 374.1 L565.6 372.4 L568.9 370.8 L572.1 369.1 L575.4 367.6 L578.7 366.0 L582.0 364.5 L585.3 363.1 L588.7 361.7 L592.0 360.3 L595.4 359.0 L598.9 357.7 L602.3 356.5 L605.8 355.3 L609.2 354.2 L612.7 353.1 L616.2 352.0 L619.8 351.0 L623.3 350.1 L626.8 349.1 L630.4 348.3 L634.0 347.4 L637.6 346.7 L641.2 345.9 L644.8 345.2 L648.4 344.6 L652.0 344.0 L655.6 343.4 L659.2 342.9 L662.9 342.5 L666.5 342.1 L670.1 341.7 L673.8 341.4 L677.4 341.1 L681.1 340.9 L684.7 340.7 L688.3 340.6 L692.0 340.5 L695.6 340.5 L699.2 340.5 L702.9 340.6 L706.5 340.7 L710.1 340.8 L713.7 341.0 L717.3 341.3 L720.9 341.6 L724.4 341.9 L728.0 342.3 L731.6 342.7 L735.1 343.2 L738.6 343.7 L742.1 344.3 L745.6 344.9 L749.1 345.6 L752.6 346.3 L756.0 347.1 L759.4 347.9 L762.8 348.7 L766.2 349.6 L769.6 350.6 L772.9 351.6 L776.2 352.6 L779.5 353.7 L782.8 354.8 L786.0 356.0 L789.3 357.2 L792.5 358.4 L795.6 359.7 L798.8 361.1 L801.9 362.5 L804.9 363.9 L808.0 365.4 L811.0 366.9 L814.0 368.4 L816.9 370.0 L819.8 371.7 L822.7 373.4 L825.5 375.1 L828.3 376.8 L831.1 378.6 L833.8 380.5 L836.5 382.4 L839.2 384.3 L841.8 386.3 L844.3 388.3 L846.8 390.3 L849.3 392.4 L851.8 394.5 L854.1 396.6 L856.5 398.8 L858.8 401.1 L861.0 403.3 L863.2 405.6 L865.4 407.9 L867.5 410.3 L869.6 412.7 L871.6 415.1 L873.5 417.6 L875.4 420.1 L877.3 422.6 L879.1 425.2 L880.8 427.8 L882.5 430.4 L884.1 433.0 L885.7 435.7 L887.2 438.4 L888.7 441.1 L890.1 443.9 L891.4 446.7 L892.7 449.5 L894.0 452.3 L895.1 455.2 L896.2 458.0 L897.3 460.9 L898.3 463.9 L899.2 466.8 L900.0 469.8 L900.8 472.7 L901.6 475.7 L902.2 478.8 L902.8 481.8 L903.4 484.8 L903.8 487.9 L904.2 491.0 L904.6 494.1 L904.8 497.2 L905.0 500.3 L905.2 503.4 L905.2 506.6 L905.2 509.7 L905.2 512.9 L905.0 516.0 L904.8 519.2 L904.5 522.4 L904.2 525.6 L903.8 528.8 L903.3 531.9Z" fill="url(#topg)"/><polygon points="525.2,370.8 581.5,343.4 581.5,350.9 528,376.3" fill="#b186da"/><polygon points="581.5,343.4 603.5,369.4 603.5,375 581.5,350.9" fill="#6e5a80"/><path d="M885.3 533.0 L885.0 534.4 L884.7 535.9 L884.4 537.4 L884.1 538.8 L883.7 540.3 L883.3 541.8 L882.9 543.2 L882.5 544.7 L882.1 546.1 L881.7 547.6 L881.2 549.1 L880.8 550.5 L880.3 552.0 L879.8 553.4 L879.2 554.9 L878.7 556.3 L878.2 557.8 L877.6 559.2 L877.0 560.7 L876.4 562.1 L875.8 563.6 L875.2 565.0 L874.5 566.5 L873.9 567.9 L873.2 569.3 L872.5 570.7 L871.8 572.2 L871.0 573.6 L870.3 575.0 L869.5 576.4 L868.8 577.8 L868.0 579.2 L867.2 580.6 L866.3 582.0 L865.5 583.4 L864.6 584.8 L863.8 586.2 L862.9 587.6 L862.0 589.0 L861.1 590.3 L860.2 591.7 L859.2 593.1 L858.2 594.4 L857.3 595.8 L856.3 597.1 L855.3 598.4 L854.2 599.8 L853.2 601.1 L852.2 602.4 L851.1 603.7 L850.0 605.1 L848.9 606.4 L847.8 607.7 L846.7 608.9 L845.5 610.2 L844.4 611.5 L843.2 612.8 L842.0 614.0 L840.8 615.3 L839.6 616.5 L838.4 617.8 L837.2 619.0 L835.9 620.2 L834.7 621.5 L833.4 622.7 L832.1 623.9 L830.8 625.1 L829.5 626.3 L828.1 627.4 L826.8 628.6 L825.4 629.8 L824.0 630.9 L822.7 632.1 L821.3 633.2 L819.8 634.3 L818.4 635.4 L817.0 636.5 L815.5 637.6 L814.1 638.7 L812.6 639.8 L811.1 640.9 L809.6 641.9 L808.1 643.0 L806.6 644.0 L805.1 645.1 L803.5 646.1 L802.0 647.1 L800.4 648.1 L798.8 649.1 L797.2 650.0 L795.6 651.0 L794.0 652.0 L792.4 652.9 L790.8 653.8 L789.1 654.8 L787.5 655.7 L785.8 656.6 L784.2 657.5 L782.5 658.3 L780.8 659.2 L779.1 660.0 L777.4 660.9 L775.7 661.7 L773.9 662.5 L772.2 663.3 L770.5 664.1 L768.7 664.9 L767.0 665.7 L765.2 666.4 L763.4 667.2 L761.6 667.9 L759.8 668.6 L758.0 669.3 L756.2 670.0 L754.4 670.7 L752.6 671.4 L750.8 672.0 L748.9 672.7 L747.1 673.3 L745.3 673.9 L743.4 674.5 L741.5 675.1 L739.7 675.7 L737.8 676.2 L735.9 676.8 L734.0 677.3 L732.2 677.8 L730.3 678.3 L728.4 678.8 L726.5 679.3 L724.6 679.7 L722.7 680.2 L720.7 680.6 L718.8 681.1 L716.9 681.5 L715.0 681.9 L713.0 682.2 L711.1 682.6 L709.2 682.9 L707.2 683.3 L705.3 683.6 L703.3 683.9 L701.4 684.2 L699.5 684.5 L697.5 684.7 L695.6 685.0 L693.6 685.2 L691.6 685.4 L689.7 685.7 L687.7 685.8 L685.8 686.0 L683.8 686.2 L681.8 686.3 L679.9 686.5 L677.9 686.6 L676.0 686.7 L674.0 686.8 L672.0 686.8 L670.1 686.9 L668.1 686.9 L666.2 687.0 L664.2 687.0 L662.3 687.0 L660.3 687.0 L658.4 686.9 L656.4 686.9 L654.5 686.8 L652.5 686.8 L650.6 686.7 L648.6 686.6 L646.7 686.4 L644.8 686.3 L642.8 686.2 L640.9 686.0 L639.0 685.8 L637.0 685.6 L635.1 685.4 L633.2 685.2 L631.3 685.0 L629.4 684.7 L627.5 684.4 L625.6 684.2 L623.7 683.9 L621.8 683.6 L620.0 683.2 L618.1 682.9 L616.2 682.6 L614.4 682.2 L612.5 681.8 L610.6 681.4 L608.8 681.0 L607.0 680.6 L605.1 680.1 L603.3 679.7 L601.5 679.2 L599.7 678.7 L597.9 678.3 L596.1 677.7 L594.3 677.2 L592.5 676.7 L590.7 676.1 L589.0 675.6 L587.2 675.0 L585.5 674.4 L583.7 673.8 L582.0 673.2 L580.3 672.6 L578.6 671.9 L576.9 671.3 L575.2 670.6 L573.5 669.9 L571.8 669.2 L570.2 668.5 L568.5 667.8 L566.9 667.1 L565.2 666.3 L563.6 665.6 L562.0 664.8 L560.4 664.0 L558.8 663.2 L557.2 662.4 L555.7 661.6 L554.1 660.8 L552.6 659.9 L551.0 659.1 L549.5 658.2 L548.0 657.3 L546.5 656.5 L545.0 655.6 L543.5 654.6 L542.1 653.7 L540.6 652.8 L539.2 651.8 L537.8 650.9 L536.4 649.9 L535.0 648.9 L533.6 648.0 L532.2 647.0 L530.8 646.0 L529.5 644.9 L528.2 643.9 L526.8 642.9 L525.5 641.8 L524.2 640.8 L523.0 639.7 L521.7 638.6 L520.4 637.5 L519.2 636.4 L518.0 635.3 L516.8 634.2 L515.6 633.1 L514.4 631.9 L513.2 630.8 L512.1 629.6 L511.0 628.5 L509.8 627.3 L508.7 626.1 L507.6 624.9 L506.6 623.7 L505.5 622.5 L504.4 621.3 L503.4 620.1 L502.4 618.9 L501.4 617.6 L500.4 616.4 L499.4 615.2 L498.5 613.9 L497.5 612.6 L496.6 611.4 L495.7 610.1 L494.8 608.8 L493.9 607.5 L493.1 606.2 L492.2 604.9 L491.4 603.6 L490.6 602.3 L489.8 601.0 L489.0 599.6 L488.3 598.3 L487.5 597.0 L486.8 595.6 L486.1 594.3 L485.4 592.9 L484.7 591.5 L484.0 590.2 L483.4 588.8 L482.7 587.4 L482.1 586.0 L481.5 584.7 L480.9 583.3 L480.3 581.9 L479.8 580.5 L479.3 579.1 L478.7 577.7 L478.2 576.3 L477.7 574.8 L477.3 573.4 L476.8 572.0 L476.4 570.6 L476.0 569.2 L475.6 567.7 L475.2 566.3 L474.8 564.9 L474.4 563.4 L474.1 562.0 L473.8 560.5 L473.5 559.1 L473.2 557.6 L472.9 556.2 L472.7 554.7 L472.4 553.3 L472.2 551.8 L472.0 550.4 L471.8 548.9 L471.6 547.4 L471.5 546.0 L471.3 544.5 L471.2 543.1 L471.1 541.6 L471.0 540.1 L470.9 538.7 L470.9 537.2 L470.8 535.7 L470.8 534.3 L470.8 532.8 L470.8 531.3 L470.8 529.9 L470.8 528.4 L470.9 526.9 L471.0 525.5 L471.1 524.0 L471.2 522.5 L471.3 521.1 L471.4 519.6 L471.6 518.1 L471.7 516.7 L471.9 515.2 L472.1 513.8 L472.3 512.3 L472.5 510.8 L472.8 509.4 L473.0 507.9 L473.3 506.5 L473.6 505.0 L473.9 503.6 L474.2 502.1 L474.6 500.7 L474.9 499.3 L475.3 497.8 L475.7 496.4 L476.1 494.9 L476.5 493.5 L476.9 492.1 L477.3 490.7 L477.8 489.2 L478.3 487.8 L478.7 486.4 L479.2 485.0 L479.8 483.6 L480.3 482.2 L480.8 480.8 L481.4 479.4 L482.0 478.0 L482.5 476.6 L483.1 475.2 L483.8 473.8 L484.4 472.5 L485.0 471.1 L485.7 469.7 L486.3 468.4 L487.0 467.0 L487.7 465.7 L488.4 464.3 L489.2 463.0 L489.9 461.6 L490.6 460.3 L491.4 459.0 L492.2 457.6 L493.0 456.3 L493.8 455.0 L494.6 453.7 L495.4 452.4 L496.3 451.1 L497.1 449.8 L498.0 448.5 L498.9 447.2 L499.8 446.0 L500.7 444.7 L501.6 443.4 L502.5 442.2 L503.4 440.9 L504.4 439.7 L505.4 438.5 L506.3 437.2 L507.3 436.0 L508.3 434.8 L509.3 433.6 L510.4 432.4 L511.4 431.2 L512.4 430.0 L513.5 428.8 L514.6 427.6 L515.6 426.5 L516.7 425.3 L517.8 424.2 L518.9 423.0 L520.1 421.9 L521.2 420.7 L522.3 419.6 L523.5 418.5 L524.6 417.4 L525.8 416.3 L527.0 415.2 L528.2 414.1 L529.4 413.0 L530.6 412.0 L531.8 410.9 L533.1 409.8 L534.3 408.8 L535.6 407.8 L536.8 406.7 L538.1 405.7 L539.4 404.7 L540.7 403.7 L542.0 402.7 L543.3 401.7 L544.6 400.7 L545.9 399.8 L547.2 398.8 L548.6 397.9 L549.9 396.9 L551.3 396.0 L552.6 395.1 L554.0 394.1 L555.4 393.2 L556.8 392.3 L558.2 391.4 L559.6 390.6 L561.0 389.7 L562.4 388.8 L563.8 388.0 L565.3 387.1 L566.7 386.3 L568.2 385.5 L569.6 384.7 L571.1 383.8 L572.6 383.1 L574.0 382.3 L575.5 381.5 L577.0 380.7 L578.5 380.0 L580.0 379.2 L581.5 378.5 L583.0 377.7 L584.5 377.0 L586.1 376.3 L587.6 375.6 L589.1 374.9 L590.7 374.2 L592.2 373.6 L593.8 372.9 L595.3 372.3 L596.9 371.6 L598.5 371.0 L600.0 370.4 L601.6 369.8 L603.2 369.2 L604.8 368.6 L606.4 368.0 L608.0 367.4 L609.6 366.9 L611.2 366.3 L612.8 365.8 L614.4 365.3 L616.0 364.7 L617.6 364.2 L619.3 363.7 L620.9 363.3 L622.5 362.8 L624.2 362.3 L625.8 361.9 L627.4 361.4 L629.1 361.0 L630.7 360.6 L632.4 360.1 L634.0 359.7 L635.7 359.4 L637.3 359.0 L639.0 358.6 L640.7 358.2 L642.3 357.9 L644.0 357.6 L645.7 357.2 L647.3 356.9 L649.0 356.6 L650.7 356.3 L652.4 356.0 L654.0 355.8 L655.7 355.5 L657.4 355.3 L659.1 355.0 L660.8 354.8 L662.5 354.6 L664.1 354.4 L665.8 354.2 L667.5 354.0 L669.2 353.8 L670.9 353.6 L672.6 353.5 L674.3 353.3 L676.0 353.2 L677.6 353.1 L679.3 353.0 L681.0 352.9 L682.7 352.8 L684.4 352.7 L686.1 352.7 L687.8 352.6 L689.5 352.6 L691.2 352.5 L692.8 352.5 L694.5 352.5 L696.2 352.5 L697.9 352.5 L699.6 352.5 L701.3 352.6 L702.9 352.6 L704.6 352.7 L706.3 352.7 L708.0 352.8 L709.6 352.9 L711.3 353.0 L713.0 353.1 L714.6 353.2 L716.3 353.4 L718.0 353.5 L719.6 353.7 L721.3 353.8 L722.9 354.0 L724.6 354.2 L726.2 354.4 L727.9 354.6 L729.5 354.8 L731.2 355.0 L732.8 355.3 L734.4 355.5 L736.1 355.8 L737.7 356.1 L739.3 356.3 L740.9 356.6 L742.5 356.9 L744.2 357.3 L745.8 357.6 L747.4 357.9 L749.0 358.3 L750.6 358.6 L752.1 359.0 L753.7 359.4 L755.3 359.8 L756.9 360.2 L758.5 360.6 L760.0 361.0 L761.6 361.5 L763.1 361.9 L764.7 362.4 L766.2 362.8 L767.8 363.3 L769.3 363.8 L770.8 364.3 L772.4 364.8 L773.9 365.3 L775.4 365.8 L776.9 366.4 L778.4 366.9 L779.9 367.5 L781.4 368.1 L782.9 368.6 L784.3 369.2 L785.8 369.8 L787.3 370.4 L788.7 371.1 L790.2 371.7 L791.6 372.3 L793.0 373.0 L794.5 373.6 L795.9 374.3 L797.3 375.0 L798.7 375.7 L800.1 376.4 L801.5 377.1 L802.9 377.8 L804.2 378.5 L805.6 379.3 L807.0 380.0 L808.3 380.8 L809.7 381.6 L811.0 382.3 L812.3 383.1 L813.6 383.9 L814.9 384.7 L816.2 385.6 L817.5 386.4 L818.8 387.2 L820.1 388.1 L821.3 388.9 L822.6 389.8 L823.8 390.6 L825.1 391.5 L826.3 392.4 L827.5 393.3 L828.7 394.2 L829.9 395.1 L831.1 396.1 L832.3 397.0 L833.5 398.0 L834.6 398.9 L835.8 399.9 L836.9 400.8 L838.0 401.8 L839.1 402.8 L840.2 403.8 L841.3 404.8 L842.4 405.8 L843.5 406.8 L844.6 407.9 L845.6 408.9 L846.7 410.0 L847.7 411.0 L848.7 412.1 L849.7 413.1 L850.7 414.2 L851.7 415.3 L852.7 416.4 L853.6 417.5 L854.6 418.6 L855.5 419.7 L856.4 420.8 L857.4 422.0 L858.3 423.1 L859.2 424.3 L860.0 425.4 L860.9 426.6 L861.8 427.8 L862.6 428.9 L863.4 430.1 L864.2 431.3 L865.0 432.5 L865.8 433.7 L866.6 434.9 L867.4 436.1 L868.1 437.4 L868.9 438.6 L869.6 439.8 L870.3 441.1 L871.0 442.3 L871.7 443.6 L872.4 444.8 L873.0 446.1 L873.7 447.4 L874.3 448.7 L874.9 449.9 L875.5 451.2 L876.1 452.5 L876.7 453.8 L877.3 455.1 L877.8 456.5 L878.4 457.8 L878.9 459.1 L879.4 460.4 L879.9 461.8 L880.4 463.1 L880.8 464.4 L881.3 465.8 L881.7 467.1 L882.1 468.5 L882.6 469.9 L882.9 471.2 L883.3 472.6 L883.7 474.0 L884.0 475.4 L884.4 476.8 L884.7 478.1 L885.0 479.5 L885.3 480.9 L885.6 482.3 L885.8 483.7 L886.1 485.2 L886.3 486.6 L886.5 488.0 L886.7 489.4 L886.9 490.8 L887.0 492.2 L887.2 493.7 L887.3 495.1 L887.5 496.5 L887.6 498.0 L887.6 499.4 L887.7 500.8 L887.8 502.3 L887.8 503.7 L887.8 505.2 L887.9 506.6 L887.9 508.1 L887.8 509.5 L887.8 511.0 L887.7 512.5 L887.7 513.9 L887.6 515.4 L887.5 516.8 L887.4 518.3 L887.2 519.8 L887.1 521.2 L886.9 522.7 L886.8 524.1 L886.6 525.6 L886.3 527.1 L886.1 528.5 L885.9 530.0 L885.6 531.5Z" fill="url(#topg)"/><path d="M484.4 591.0 L484.7 591.5 L485.4 592.9 L486.1 594.3 L486.6 595.3 L487.3 589.8Z" fill="#615669" stroke="#615669" stroke-width="0.5"/><path d="M481.9 585.5 L482.1 586.0 L482.7 587.4 L483.4 588.8 L484.0 590.2 L484.7 591.5 L484.9 591.9 L487.2 591.0 L488.1 583.3Z" fill="#5e5564" stroke="#5e5564" stroke-width="0.5"/><path d="M479.6 580.0 L479.8 580.5 L480.3 581.9 L480.9 583.3 L481.5 584.7 L482.1 586.0 L482.3 586.5 L488.0 584.4 L488.9 576.9Z" fill="#5b5360" stroke="#5b5360" stroke-width="0.5"/><path d="M477.6 574.4 L477.7 574.8 L478.2 576.3 L478.7 577.7 L479.3 579.1 L479.8 580.5 L480.0 581.0 L488.8 578.0 L489.7 570.8Z" fill="#58525c" stroke="#58525c" stroke-width="0.5"/><path d="M475.8 568.8 L476.0 569.2 L476.4 570.6 L476.8 572.0 L477.3 573.4 L477.7 574.8 L477.9 575.4 L489.6 571.8 L490.5 564.8Z" fill="#555158" stroke="#555158" stroke-width="0.5"/><path d="M474.4 563.1 L474.4 563.4 L474.8 564.9 L475.2 566.3 L475.6 567.7 L476.0 569.2 L476.1 569.7 L490.3 565.8 L491.2 559.0Z" fill="#58525d" stroke="#58525d" stroke-width="0.5"/><path d="M473.1 557.3 L473.2 557.6 L473.5 559.1 L473.8 560.5 L474.1 562.0 L474.4 563.4 L474.6 564.0 L491.1 560.0 L491.7 555.0 L492.2 554.9 L492.1 553.8 L492.1 553.3Z" fill="#5b5461" stroke="#5b5461" stroke-width="0.5"/><path d="M472.1 551.5 L472.2 551.8 L472.4 553.3 L472.7 554.7 L472.9 556.2 L473.2 557.6 L473.3 558.3 L492.2 554.2 L492.1 553.8 L492.0 552.4 L491.8 551.1 L491.7 549.8 L491.6 548.4 L491.6 547.9Z" fill="#5e5565" stroke="#5e5565" stroke-width="0.5"/><path d="M471.4 545.7 L471.5 546.0 L471.6 547.4 L471.8 548.9 L472.0 550.4 L472.2 551.8 L472.3 552.5 L491.7 548.8 L491.6 548.4 L491.6 547.1 L491.5 545.7 L491.4 544.4 L491.4 543.1 L491.4 542.6Z" fill="#615769" stroke="#615769" stroke-width="0.5"/><path d="M471.0 539.8 L471.0 540.1 L471.1 541.6 L471.2 543.1 L471.3 544.5 L471.5 546.0 L471.5 546.7 L491.4 543.5 L491.4 543.1 L491.4 541.7 L491.4 540.4 L491.4 539.0 L491.4 537.7 L491.4 537.2Z" fill="#64586e" stroke="#64586e" stroke-width="0.5"/><path d="M470.8 533.9 L470.8 534.3 L470.8 535.7 L470.9 537.2 L470.9 538.7 L471.0 540.1 L471.0 540.8 L491.4 538.1 L491.4 537.7 L491.4 536.4 L491.5 535.0 L491.6 533.7 L491.6 532.4 L491.7 531.9Z" fill="#675a72" stroke="#675a72" stroke-width="0.5"/><path d="M470.9 528.0 L470.8 528.4 L470.8 529.9 L470.8 531.3 L470.8 532.8 L470.8 534.3 L470.8 534.9 L491.6 532.8 L491.6 532.4 L491.7 531.0 L491.8 529.7 L492.0 528.3 L492.1 527.0 L492.2 526.5Z" fill="#6a5b76" stroke="#6a5b76" stroke-width="0.5"/><path d="M471.2 522.1 L471.2 522.5 L471.1 524.0 L471.0 525.5 L470.9 526.9 L470.8 528.4 L470.8 529.0 L492.1 527.4 L492.1 527.0 L492.3 525.7 L492.4 524.3 L492.6 523.0 L492.8 521.7 L492.9 521.2Z" fill="#6d5d7a" stroke="#6d5d7a" stroke-width="0.5"/><path d="M471.8 516.3 L471.7 516.7 L471.6 518.1 L471.4 519.6 L471.3 521.1 L471.2 522.5 L471.1 523.2 L492.7 522.1 L492.8 521.7 L493.0 520.3 L493.2 519.0 L493.5 517.7 L493.7 516.4 L493.8 515.9Z" fill="#705e7e" stroke="#705e7e" stroke-width="0.5"/><path d="M472.6 510.4 L472.5 510.8 L472.3 512.3 L472.1 513.8 L471.9 515.2 L471.7 516.7 L471.7 517.3 L493.6 516.8 L493.7 516.4 L494.0 515.0 L494.3 513.7 L494.6 512.4 L494.9 511.1 L495.0 510.7Z" fill="#736083" stroke="#736083" stroke-width="0.5"/><path d="M473.7 504.5 L473.6 505.0 L473.3 506.5 L473.0 507.9 L472.8 509.4 L472.5 510.8 L472.4 511.4 L494.7 511.6 L494.9 511.1 L495.2 509.8 L495.5 508.5 L495.9 507.1 L496.2 505.8 L496.3 505.5Z" fill="#766187" stroke="#766187" stroke-width="0.5"/><path d="M475.0 498.7 L474.9 499.3 L474.6 500.7 L474.2 502.1 L473.9 503.6 L473.6 505.0 L473.5 505.5 L496.1 506.4 L496.2 505.8 L496.6 504.5 L497.0 503.2 L497.4 501.9 L497.8 500.6 L497.9 500.3Z" fill="#79628b" stroke="#79628b" stroke-width="0.5"/><path d="M476.6 492.9 L476.5 493.5 L476.1 494.9 L475.7 496.4 L475.3 497.8 L474.9 499.3 L474.8 499.7 L497.6 501.2 L497.8 500.6 L498.3 499.3 L498.7 498.0 L499.2 496.7 L499.6 495.5 L499.7 495.2Z" fill="#7c648f" stroke="#7c648f" stroke-width="0.5"/><path d="M478.5 487.2 L478.3 487.8 L477.8 489.2 L477.3 490.7 L476.9 492.1 L476.5 493.5 L476.3 493.9 L499.4 496.1 L499.6 495.5 L500.1 494.2 L500.6 492.9 L501.1 491.6 L501.6 490.3 L501.7 490.2Z" fill="#7e6593" stroke="#7e6593" stroke-width="0.5"/><path d="M480.6 481.5 L480.3 482.2 L479.8 483.6 L479.2 485.0 L478.7 486.4 L478.3 487.8 L478.1 488.2 L501.4 491.0 L501.6 490.3 L502.2 489.1 L502.7 487.8 L503.3 486.6 L503.8 485.3 L503.9 485.2Z" fill="#816796" stroke="#816796" stroke-width="0.5"/><path d="M482.9 475.8 L482.5 476.6 L482.0 478.0 L481.4 479.4 L480.8 480.8 L480.3 482.2 L480.2 482.5 L503.5 486.0 L503.8 485.3 L504.4 484.0 L505.0 482.8 L505.6 481.5 L506.3 480.3 L506.3 480.2Z" fill="#84689a" stroke="#84689a" stroke-width="0.5"/><path d="M485.4 470.2 L485.0 471.1 L484.4 472.5 L483.8 473.8 L483.1 475.2 L482.5 476.6 L482.5 476.8 L505.9 481.1 L506.3 480.3 L506.9 479.1 L507.6 477.8 L508.2 476.6 L508.9 475.4Z" fill="#86699e" stroke="#86699e" stroke-width="0.5"/><path d="M488.2 464.7 L487.7 465.7 L487.0 467.0 L486.3 468.4 L485.7 469.7 L485.0 471.1 L485.0 471.2 L508.4 476.2 L508.9 475.4 L509.6 474.2 L510.3 472.9 L511.0 471.7 L511.7 470.6Z" fill="#896ba2" stroke="#896ba2" stroke-width="0.5"/><path d="M491.2 459.3 L490.6 460.3 L489.9 461.6 L489.2 463.0 L488.4 464.3 L487.7 465.7 L487.7 465.7 L511.2 471.4 L511.7 470.5 L512.4 469.3 L513.2 468.1 L513.9 466.9 L514.6 465.9Z" fill="#8c6ca5" stroke="#8c6ca5" stroke-width="0.5"/><path d="M494.5 453.9 L493.8 455.0 L493.0 456.3 L492.2 457.6 L491.4 459.0 L490.7 460.2 L514.1 466.7 L514.7 465.8 L515.5 464.6 L516.3 463.4 L517.1 462.2 L517.7 461.3Z" fill="#8e6da9" stroke="#8e6da9" stroke-width="0.5"/><path d="M497.9 448.6 L497.1 449.8 L496.3 451.1 L495.4 452.4 L494.6 453.7 L493.9 454.8 L517.2 462.1 L517.9 461.1 L518.7 459.9 L519.6 458.7 L520.4 457.6 L521.0 456.8Z" fill="#916eac" stroke="#916eac" stroke-width="0.5"/><path d="M501.6 443.5 L500.7 444.7 L499.8 446.0 L498.9 447.2 L498.0 448.5 L497.3 449.5 L520.4 457.6 L521.3 456.5 L522.1 455.3 L523.0 454.2 L523.9 453.1 L524.5 452.4Z" fill="#9370b0" stroke="#9370b0" stroke-width="0.5"/><path d="M505.4 438.4 L505.4 438.5 L504.4 439.7 L503.4 440.9 L502.5 442.2 L501.6 443.4 L500.9 444.3 L523.9 453.1 L523.9 453.1 L524.8 451.9 L525.7 450.8 L526.7 449.7 L527.6 448.6 L528.1 448.0Z" fill="#9571b3" stroke="#9571b3" stroke-width="0.5"/><path d="M509.5 433.4 L509.3 433.6 L508.3 434.8 L507.3 436.0 L506.3 437.2 L505.4 438.5 L504.7 439.2 L527.5 448.8 L527.6 448.6 L528.5 447.5 L529.5 446.4 L530.5 445.4 L531.4 444.3 L531.9 443.8Z" fill="#9872b6" stroke="#9872b6" stroke-width="0.5"/><path d="M513.8 428.5 L513.5 428.8 L512.4 430.0 L511.4 431.2 L510.4 432.4 L509.3 433.6 L508.8 434.2 L531.2 444.5 L531.4 444.3 L532.4 443.2 L533.4 442.2 L534.4 441.1 L535.4 440.1 L535.8 439.7Z" fill="#9a73b9" stroke="#9a73b9" stroke-width="0.5"/><path d="M518.2 423.8 L517.8 424.2 L516.7 425.3 L515.6 426.5 L514.6 427.6 L513.5 428.8 L513.0 429.3 L535.1 440.4 L535.4 440.1 L536.5 439.0 L537.5 438.0 L538.6 437.0 L539.6 435.9 L539.9 435.7Z" fill="#9c74bc" stroke="#9c74bc" stroke-width="0.5"/><path d="M522.8 419.1 L522.3 419.6 L521.2 420.7 L520.1 421.9 L518.9 423.0 L517.8 424.2 L517.4 424.6 L539.2 436.3 L539.6 435.9 L540.7 434.9 L541.7 433.9 L542.8 432.9 L543.9 431.9 L544.1 431.7Z" fill="#9e75bf" stroke="#9e75bf" stroke-width="0.5"/><path d="M527.7 414.6 L527.0 415.2 L525.8 416.3 L524.6 417.4 L523.5 418.5 L522.3 419.6 L522.0 419.9 L543.4 432.4 L543.9 431.9 L545.0 430.9 L546.1 430.0 L547.3 429.0 L548.4 428.0 L548.5 427.9Z" fill="#a076c2" stroke="#a076c2" stroke-width="0.5"/><path d="M532.6 410.2 L531.8 410.9 L530.6 412.0 L529.4 413.0 L528.2 414.1 L527.0 415.2 L526.8 415.4 L547.7 428.6 L548.4 428.0 L549.5 427.1 L550.7 426.1 L551.8 425.2 L552.9 424.3Z" fill="#a277c4" stroke="#a277c4" stroke-width="0.5"/><path d="M537.8 406.0 L536.8 406.7 L535.6 407.8 L534.3 408.8 L533.1 409.8 L531.8 410.9 L531.8 411.0 L552.2 424.9 L553.0 424.2 L554.2 423.3 L555.3 422.4 L556.5 421.5 L557.6 420.7Z" fill="#a478c7" stroke="#a478c7" stroke-width="0.5"/><path d="M543.1 401.8 L542.0 402.7 L540.7 403.7 L539.4 404.7 L538.1 405.7 L536.9 406.7 L556.8 421.3 L557.7 420.6 L558.9 419.7 L560.1 418.8 L561.3 417.9 L562.3 417.3Z" fill="#a579c9" stroke="#a579c9" stroke-width="0.5"/><path d="M548.6 397.9 L547.2 398.8 L545.9 399.8 L544.6 400.7 L543.3 401.7 L542.2 402.5 L561.5 417.9 L562.6 417.1 L563.8 416.2 L565.1 415.3 L566.3 414.5 L567.1 414.0Z" fill="#a779cc" stroke="#a779cc" stroke-width="0.5"/><path d="M554.2 394.0 L554.0 394.1 L552.6 395.1 L551.3 396.0 L549.9 396.9 L548.6 397.9 L547.6 398.5 L566.3 414.5 L566.3 414.5 L567.6 413.7 L568.8 412.8 L570.1 412.0 L571.4 411.2 L572.0 410.8Z" fill="#a97ace" stroke="#a97ace" stroke-width="0.5"/><path d="M559.9 390.3 L559.6 390.6 L558.2 391.4 L556.8 392.3 L555.4 393.2 L554.0 394.1 L553.2 394.7 L571.2 411.3 L571.4 411.2 L572.7 410.4 L574.0 409.6 L575.3 408.8 L576.6 408.0 L577.1 407.7Z" fill="#aa7bd0" stroke="#aa7bd0" stroke-width="0.5"/><path d="M565.8 386.8 L565.3 387.1 L563.8 388.0 L562.4 388.8 L561.0 389.7 L559.6 390.6 L558.9 391.0 L576.2 408.2 L576.6 408.0 L577.9 407.3 L579.2 406.5 L580.5 405.7 L581.9 405.0 L582.2 404.8Z" fill="#ab7cd2" stroke="#ab7cd2" stroke-width="0.5"/><path d="M571.8 383.5 L571.1 383.8 L569.6 384.7 L568.2 385.5 L566.7 386.3 L565.3 387.1 L564.8 387.4 L581.3 405.3 L581.9 405.0 L583.2 404.3 L584.5 403.5 L585.9 402.8 L587.2 402.1 L587.5 402.0Z" fill="#ad7cd4" stroke="#ad7cd4" stroke-width="0.5"/><path d="M577.9 380.2 L577.0 380.7 L575.5 381.5 L574.0 382.3 L572.6 383.1 L571.1 383.8 L570.8 384.0 L586.6 402.5 L587.2 402.1 L588.6 401.4 L590.0 400.7 L591.4 400.0 L592.7 399.4 L592.8 399.3Z" fill="#ae7dd6" stroke="#ae7dd6" stroke-width="0.5"/><path d="M584.2 377.2 L583.0 377.7 L581.5 378.5 L580.0 379.2 L578.5 380.0 L577.0 380.7 L576.9 380.8 L591.9 399.8 L592.7 399.4 L594.1 398.7 L595.5 398.0 L596.9 397.4 L598.2 396.8Z" fill="#af7ed7" stroke="#af7ed7" stroke-width="0.5"/><path d="M590.5 374.3 L589.1 374.9 L587.6 375.6 L586.1 376.3 L584.5 377.0 L583.1 377.7 L597.2 397.2 L598.3 396.8 L599.7 396.1 L601.1 395.5 L602.6 394.9 L603.6 394.4Z" fill="#b07ed9" stroke="#b07ed9" stroke-width="0.5"/><path d="M596.9 371.6 L596.9 371.6 L595.3 372.3 L593.8 372.9 L592.2 373.6 L590.7 374.2 L589.4 374.8 L602.7 394.8 L604.0 394.3 L605.4 393.7 L606.8 393.1 L608.3 392.6 L609.2 392.2Z" fill="#b17fda" stroke="#b17fda" stroke-width="0.5"/><path d="M603.4 369.1 L603.2 369.2 L601.6 369.8 L600.0 370.4 L598.5 371.0 L596.9 371.6 L595.8 372.1 L608.2 392.6 L608.3 392.6 L609.7 392.0 L611.2 391.4 L612.6 390.9 L614.1 390.4 L614.8 390.1Z" fill="#b27fdb" stroke="#b27fdb" stroke-width="0.5"/><path d="M610.0 366.7 L609.6 366.9 L608.0 367.4 L606.4 368.0 L604.8 368.6 L603.2 369.2 L602.3 369.5 L613.8 390.4 L614.1 390.4 L615.5 389.8 L617.0 389.3 L618.5 388.8 L619.9 388.3 L620.5 388.1Z" fill="#b37fdd" stroke="#b37fdd" stroke-width="0.5"/><path d="M616.7 364.5 L616.0 364.7 L614.4 365.3 L612.8 365.8 L611.2 366.3 L609.6 366.9 L608.9 367.1 L619.5 388.5 L619.9 388.3 L621.4 387.8 L622.9 387.3 L624.4 386.9 L625.8 386.4 L626.2 386.3Z" fill="#b480de" stroke="#b480de" stroke-width="0.5"/><path d="M623.5 362.5 L622.5 362.8 L620.9 363.3 L619.3 363.7 L617.6 364.2 L616.0 364.7 L615.6 364.9 L625.2 386.6 L625.8 386.4 L627.3 386.0 L628.8 385.5 L630.3 385.1 L631.8 384.7 L632.0 384.6Z" fill="#b480de" stroke="#b480de" stroke-width="0.5"/><path d="M630.3 360.7 L629.1 361.0 L627.4 361.4 L625.8 361.9 L624.2 362.3 L622.5 362.8 L622.3 362.8 L631.0 384.9 L631.8 384.7 L633.3 384.3 L634.8 383.9 L636.3 383.5 L637.8 383.1Z" fill="#b580df" stroke="#b580df" stroke-width="0.5"/><path d="M637.1 359.0 L635.7 359.4 L634.0 359.7 L632.4 360.1 L630.7 360.6 L629.1 361.0 L636.8 383.4 L637.8 383.1 L639.3 382.7 L640.9 382.4 L642.4 382.0 L643.6 381.7Z" fill="#b581e0" stroke="#b581e0" stroke-width="0.5"/><path d="M644.0 357.6 L644.0 357.6 L642.3 357.9 L640.7 358.2 L639.0 358.6 L637.3 359.0 L635.9 359.3 L642.6 382.0 L643.9 381.7 L645.4 381.3 L646.9 381.0 L648.5 380.7 L649.5 380.5Z" fill="#b681e0" stroke="#b681e0" stroke-width="0.5"/><path d="M650.9 356.3 L650.7 356.3 L649.0 356.6 L647.3 356.9 L645.7 357.2 L644.0 357.6 L642.8 357.8 L648.5 380.7 L650.0 380.4 L651.5 380.1 L653.1 379.8 L654.6 379.6 L655.4 379.4Z" fill="#b681e0" stroke="#b681e0" stroke-width="0.5"/><path d="M657.9 355.2 L657.4 355.3 L655.7 355.5 L654.0 355.8 L652.4 356.0 L650.7 356.3 L649.7 356.5 L654.4 379.6 L654.6 379.6 L656.1 379.3 L657.7 379.0 L659.2 378.8 L660.7 378.6 L661.3 378.5Z" fill="#b681e1" stroke="#b681e1" stroke-width="0.5"/><path d="M664.9 354.3 L664.1 354.4 L662.5 354.6 L660.8 354.8 L659.1 355.0 L657.4 355.3 L656.7 355.4 L660.3 378.6 L660.7 378.6 L662.3 378.3 L663.8 378.1 L665.4 377.9 L666.9 377.7 L667.3 377.7Z" fill="#b681e1" stroke="#b681e1" stroke-width="0.5"/><path d="M671.9 353.5 L670.9 353.6 L669.2 353.8 L667.5 354.0 L665.8 354.2 L664.1 354.4 L663.7 354.4 L666.3 377.8 L666.9 377.7 L668.4 377.6 L670.0 377.4 L671.5 377.2 L673.1 377.1 L673.3 377.1Z" fill="#b681e1" stroke="#b681e1" stroke-width="0.5"/><path d="M678.9 353.0 L677.6 353.1 L676.0 353.2 L674.3 353.3 L672.6 353.5 L670.9 353.6 L670.7 353.7 L672.2 377.2 L673.1 377.1 L674.6 376.9 L676.2 376.8 L677.7 376.7 L679.2 376.6Z" fill="#b681e0" stroke="#b681e0" stroke-width="0.5"/><path d="M685.9 352.7 L684.4 352.7 L682.7 352.8 L681.0 352.9 L679.3 353.0 L677.7 353.1 L678.2 376.6 L679.3 376.6 L680.8 376.5 L682.4 376.4 L683.9 376.3 L685.2 376.2Z" fill="#b581e0" stroke="#b581e0" stroke-width="0.5"/><path d="M692.9 352.5 L692.8 352.5 L691.2 352.5 L689.5 352.6 L687.8 352.6 L686.1 352.7 L684.7 352.7 L684.2 376.3 L685.5 376.2 L687.0 376.2 L688.5 376.1 L690.1 376.1 L691.2 376.0Z" fill="#b581e0" stroke="#b581e0" stroke-width="0.5"/><path d="M699.8 352.5 L699.6 352.5 L697.9 352.5 L696.2 352.5 L694.5 352.5 L692.8 352.5 L691.7 352.5 L690.1 376.1 L691.6 376.0 L693.2 376.0 L694.7 376.0 L696.3 376.0 L697.1 376.0Z" fill="#b580df" stroke="#b580df" stroke-width="0.5"/><path d="M706.8 352.8 L706.3 352.7 L704.6 352.7 L702.9 352.6 L701.3 352.6 L699.6 352.5 L698.6 352.5 L696.1 376.0 L696.3 376.0 L697.8 376.0 L699.3 376.0 L700.9 376.1 L702.4 376.1 L703.1 376.1Z" fill="#b480de" stroke="#b480de" stroke-width="0.5"/><path d="M713.7 353.2 L713.0 353.1 L711.3 353.0 L709.6 352.9 L708.0 352.8 L706.3 352.7 L705.6 352.7 L702.0 376.1 L702.4 376.1 L703.9 376.2 L705.5 376.2 L707.0 376.3 L708.5 376.4 L709.0 376.4Z" fill="#b480dd" stroke="#b480dd" stroke-width="0.5"/><path d="M720.6 353.7 L719.6 353.7 L718.0 353.5 L716.3 353.4 L714.6 353.2 L713.0 353.1 L712.5 353.1 L708.0 376.4 L708.5 376.4 L710.1 376.5 L711.6 376.6 L713.1 376.7 L714.7 376.8 L714.9 376.8Z" fill="#b37fdc" stroke="#b37fdc" stroke-width="0.5"/><path d="M727.4 354.5 L726.2 354.4 L724.6 354.2 L722.9 354.0 L721.3 353.8 L719.6 353.7 L719.4 353.6 L713.9 376.7 L714.7 376.8 L716.2 376.9 L717.7 377.1 L719.2 377.2 L720.7 377.4 L720.7 377.4Z" fill="#b27fdb" stroke="#b27fdb" stroke-width="0.5"/><path d="M734.2 355.5 L732.8 355.3 L731.2 355.0 L729.5 354.8 L727.9 354.6 L726.2 354.4 L726.2 354.4 L719.7 377.3 L720.7 377.4 L722.2 377.6 L723.7 377.8 L725.2 377.9 L726.6 378.1Z" fill="#b17fda" stroke="#b17fda" stroke-width="0.5"/><path d="M740.9 356.6 L739.3 356.3 L737.7 356.1 L736.1 355.8 L734.4 355.5 L733.0 355.3 L725.6 378.0 L726.8 378.2 L728.3 378.4 L729.8 378.6 L731.2 378.8 L732.4 379.0Z" fill="#b07ed9" stroke="#b07ed9" stroke-width="0.5"/><path d="M747.5 358.0 L747.4 357.9 L745.8 357.6 L744.2 357.3 L742.5 356.9 L740.9 356.6 L739.7 356.4 L731.4 378.8 L732.7 379.1 L734.2 379.3 L735.7 379.6 L737.2 379.9 L738.1 380.0Z" fill="#af7dd7" stroke="#af7dd7" stroke-width="0.5"/><path d="M754.1 359.5 L753.7 359.4 L752.1 359.0 L750.6 358.6 L749.0 358.3 L747.4 357.9 L746.4 357.7 L737.1 379.8 L737.2 379.9 L738.7 380.1 L740.1 380.4 L741.6 380.7 L743.1 381.0 L743.8 381.2Z" fill="#ae7dd5" stroke="#ae7dd5" stroke-width="0.5"/><path d="M760.6 361.2 L760.0 361.0 L758.5 360.6 L756.9 360.2 L755.3 359.8 L753.7 359.4 L753.0 359.2 L742.8 381.0 L743.1 381.0 L744.5 381.4 L746.0 381.7 L747.5 382.0 L748.9 382.4 L749.4 382.5Z" fill="#ad7cd4" stroke="#ad7cd4" stroke-width="0.5"/><path d="M767.0 363.1 L766.2 362.8 L764.7 362.4 L763.1 361.9 L761.6 361.5 L760.0 361.0 L759.5 360.9 L748.5 382.3 L748.9 382.4 L750.4 382.8 L751.8 383.1 L753.2 383.5 L754.7 383.9 L755.0 384.0Z" fill="#ab7cd2" stroke="#ab7cd2" stroke-width="0.5"/><path d="M773.3 365.1 L772.4 364.8 L770.8 364.3 L769.3 363.8 L767.8 363.3 L766.2 362.8 L765.9 362.7 L754.1 383.7 L754.7 383.9 L756.1 384.3 L757.5 384.7 L758.9 385.1 L760.3 385.6 L760.5 385.6Z" fill="#aa7bd0" stroke="#aa7bd0" stroke-width="0.5"/><path d="M779.5 367.3 L778.4 366.9 L776.9 366.4 L775.4 365.8 L773.9 365.3 L772.4 364.8 L772.2 364.7 L759.6 385.3 L760.3 385.6 L761.8 386.0 L763.2 386.5 L764.6 386.9 L765.9 387.4 L766.0 387.4Z" fill="#a87ace" stroke="#a87ace" stroke-width="0.5"/><path d="M785.6 369.7 L784.3 369.2 L782.9 368.6 L781.4 368.1 L779.9 367.5 L778.4 366.9 L765.0 387.1 L765.9 387.4 L767.3 387.9 L768.7 388.4 L770.1 388.9 L771.3 389.3Z" fill="#a779cb" stroke="#a779cb" stroke-width="0.5"/><path d="M791.5 372.3 L790.2 371.7 L788.7 371.1 L787.3 370.4 L785.8 369.8 L784.5 369.3 L770.4 389.0 L771.5 389.4 L772.8 389.9 L774.2 390.4 L775.5 390.9 L776.6 391.4Z" fill="#a579c9" stroke="#a579c9" stroke-width="0.5"/><path d="M797.4 375.0 L797.3 375.0 L795.9 374.3 L794.5 373.6 L793.0 373.0 L791.6 372.3 L790.5 371.8 L775.7 391.0 L776.9 391.5 L778.2 392.0 L779.6 392.6 L780.9 393.2 L781.8 393.6Z" fill="#a378c7" stroke="#a378c7" stroke-width="0.5"/><path d="M803.1 377.9 L802.9 377.8 L801.5 377.1 L800.1 376.4 L798.7 375.7 L797.3 375.0 L796.4 374.6 L780.9 393.2 L782.2 393.8 L783.5 394.4 L784.8 395.0 L786.1 395.6 L786.9 395.9Z" fill="#a277c4" stroke="#a277c4" stroke-width="0.5"/><path d="M808.7 381.0 L808.3 380.8 L807.0 380.0 L805.6 379.3 L804.2 378.5 L802.9 377.8 L802.1 377.4 L786.0 395.5 L786.1 395.6 L787.4 396.2 L788.7 396.8 L790.0 397.5 L791.3 398.1 L791.9 398.4Z" fill="#a076c1" stroke="#a076c1" stroke-width="0.5"/><path d="M814.1 384.2 L813.6 383.9 L812.3 383.1 L811.0 382.3 L809.7 381.6 L808.3 380.8 L807.7 380.5 L791.0 398.0 L791.3 398.1 L792.5 398.8 L793.8 399.4 L795.1 400.1 L796.3 400.8 L796.8 401.1Z" fill="#9e75bf" stroke="#9e75bf" stroke-width="0.5"/><path d="M819.4 387.6 L818.8 387.2 L817.5 386.4 L816.2 385.6 L814.9 384.7 L813.6 383.9 L813.2 383.7 L795.9 400.6 L796.3 400.8 L797.5 401.5 L798.8 402.2 L800.0 402.9 L801.2 403.6 L801.6 403.8Z" fill="#9c74bc" stroke="#9c74bc" stroke-width="0.5"/><path d="M824.5 391.1 L823.8 390.6 L822.6 389.8 L821.3 388.9 L820.1 388.1 L818.8 387.2 L818.5 387.0 L800.7 403.3 L801.2 403.6 L802.4 404.3 L803.6 405.1 L804.8 405.8 L806.0 406.6 L806.2 406.7Z" fill="#9973b9" stroke="#9973b9" stroke-width="0.5"/><path d="M829.5 394.8 L828.7 394.2 L827.5 393.3 L826.3 392.4 L825.1 391.5 L823.8 390.6 L823.7 390.5 L805.4 406.2 L806.0 406.6 L807.2 407.3 L808.3 408.1 L809.5 408.9 L810.6 409.7 L810.8 409.8Z" fill="#9772b6" stroke="#9772b6" stroke-width="0.5"/><path d="M834.3 398.6 L833.5 398.0 L832.3 397.0 L831.1 396.1 L829.9 395.1 L828.7 394.2 L828.7 394.2 L810.0 409.2 L810.6 409.7 L811.8 410.5 L812.9 411.3 L814.0 412.1 L815.2 412.9 L815.2 412.9Z" fill="#9571b2" stroke="#9571b2" stroke-width="0.5"/><path d="M838.9 402.6 L838.0 401.8 L836.9 400.8 L835.8 399.9 L834.6 398.9 L833.5 398.0 L814.4 412.4 L815.2 412.9 L816.3 413.7 L817.4 414.6 L818.5 415.4 L819.5 416.2Z" fill="#936faf" stroke="#936faf" stroke-width="0.5"/><path d="M843.4 406.7 L842.4 405.8 L841.3 404.8 L840.2 403.8 L839.1 402.8 L838.1 401.9 L818.8 415.7 L819.5 416.3 L820.6 417.1 L821.7 418.0 L822.7 418.9 L823.6 419.7Z" fill="#906eac" stroke="#906eac" stroke-width="0.5"/><path d="M847.6 411.0 L846.7 410.0 L845.6 408.9 L844.6 407.9 L843.5 406.8 L842.6 406.0 L822.9 419.1 L823.8 419.8 L824.8 420.7 L825.8 421.6 L826.8 422.5 L827.7 423.2Z" fill="#8e6da8" stroke="#8e6da8" stroke-width="0.5"/><path d="M851.7 415.3 L851.7 415.3 L850.7 414.2 L849.7 413.1 L848.7 412.1 L847.7 411.0 L846.9 410.2 L827.0 422.6 L827.8 423.4 L828.8 424.3 L829.8 425.3 L830.8 426.2 L831.5 426.9Z" fill="#8b6ca5" stroke="#8b6ca5" stroke-width="0.5"/><path d="M855.6 419.8 L855.5 419.7 L854.6 418.6 L853.6 417.5 L852.7 416.4 L851.7 415.3 L851.0 414.6 L830.9 426.3 L831.8 427.2 L832.7 428.1 L833.7 429.1 L834.6 430.1 L835.2 430.7Z" fill="#896aa1" stroke="#896aa1" stroke-width="0.5"/><path d="M859.3 424.4 L859.2 424.3 L858.3 423.1 L857.4 422.0 L856.4 420.8 L855.5 419.7 L854.9 419.0 L834.6 430.1 L835.5 431.0 L836.4 432.0 L837.3 433.0 L838.2 434.0 L838.8 434.6Z" fill="#86699e" stroke="#86699e" stroke-width="0.5"/><path d="M862.8 429.2 L862.6 428.9 L861.8 427.8 L860.9 426.6 L860.0 425.4 L859.2 424.3 L858.7 423.6 L838.2 434.0 L838.2 434.0 L839.1 435.0 L840.0 436.0 L840.9 437.1 L841.7 438.1 L842.2 438.7Z" fill="#83689a" stroke="#83689a" stroke-width="0.5"/><path d="M866.0 434.0 L865.8 433.7 L865.0 432.5 L864.2 431.3 L863.4 430.1 L862.6 428.9 L862.2 428.3 L841.6 438.0 L841.7 438.1 L842.5 439.1 L843.4 440.2 L844.2 441.2 L845.0 442.3 L845.4 442.8Z" fill="#816696" stroke="#816696" stroke-width="0.5"/><path d="M869.1 438.9 L868.9 438.6 L868.1 437.4 L867.4 436.1 L866.6 434.9 L865.8 433.7 L865.5 433.2 L844.9 442.1 L845.0 442.3 L845.8 443.3 L846.6 444.4 L847.4 445.5 L848.1 446.6 L848.5 447.1Z" fill="#7e6592" stroke="#7e6592" stroke-width="0.5"/><path d="M871.9 444.0 L871.7 443.6 L871.0 442.3 L870.3 441.1 L869.6 439.8 L868.9 438.6 L868.6 438.1 L848.0 446.3 L848.1 446.6 L848.9 447.6 L849.6 448.7 L850.3 449.8 L851.0 451.0 L851.4 451.4Z" fill="#7b648e" stroke="#7b648e" stroke-width="0.5"/><path d="M874.5 449.1 L874.3 448.7 L873.7 447.4 L873.0 446.1 L872.4 444.8 L871.7 443.6 L871.4 443.1 L850.9 450.7 L851.0 451.0 L851.7 452.1 L852.4 453.2 L853.1 454.3 L853.8 455.4 L854.1 455.9Z" fill="#78628a" stroke="#78628a" stroke-width="0.5"/><path d="M876.9 454.3 L876.7 453.8 L876.1 452.5 L875.5 451.2 L874.9 449.9 L874.3 448.7 L874.1 448.2 L853.6 455.1 L853.8 455.4 L854.4 456.6 L855.1 457.7 L855.7 458.9 L856.3 460.0 L856.6 460.5Z" fill="#766186" stroke="#766186" stroke-width="0.5"/><path d="M879.1 459.6 L878.9 459.1 L878.4 457.8 L877.8 456.5 L877.3 455.1 L876.7 453.8 L876.5 453.4 L856.1 459.7 L856.3 460.0 L856.9 461.2 L857.5 462.3 L858.1 463.5 L858.7 464.7 L858.9 465.1Z" fill="#735f82" stroke="#735f82" stroke-width="0.5"/><path d="M881.0 465.0 L880.8 464.4 L880.4 463.1 L879.9 461.8 L879.4 460.4 L878.9 459.1 L878.7 458.7 L858.5 464.3 L858.7 464.7 L859.2 465.9 L859.8 467.1 L860.3 468.3 L860.8 469.4 L861.0 469.9Z" fill="#705e7e" stroke="#705e7e" stroke-width="0.5"/><path d="M882.7 470.5 L882.6 469.9 L882.1 468.5 L881.7 467.1 L881.3 465.8 L880.8 464.4 L880.7 464.1 L860.7 469.0 L860.8 469.4 L861.3 470.7 L861.8 471.9 L862.3 473.1 L862.8 474.3 L862.9 474.7Z" fill="#6d5d7a" stroke="#6d5d7a" stroke-width="0.5"/><path d="M884.2 476.0 L884.0 475.4 L883.7 474.0 L883.3 472.6 L882.9 471.2 L882.6 469.9 L882.5 469.5 L862.6 473.8 L862.8 474.3 L863.2 475.5 L863.7 476.7 L864.1 478.0 L864.5 479.2 L864.6 479.6Z" fill="#6a5b76" stroke="#6a5b76" stroke-width="0.5"/><path d="M885.4 481.6 L885.3 480.9 L885.0 479.5 L884.7 478.1 L884.4 476.8 L884.0 475.4 L884.0 475.1 L864.4 478.7 L864.5 479.2 L864.9 480.4 L865.3 481.7 L865.7 482.9 L866.0 484.2 L866.2 484.6Z" fill="#675a71" stroke="#675a71" stroke-width="0.5"/><path d="M886.4 487.2 L886.3 486.6 L886.1 485.2 L885.8 483.7 L885.6 482.3 L885.3 480.9 L885.2 480.6 L865.9 483.7 L866.0 484.2 L866.4 485.4 L866.7 486.7 L867.0 487.9 L867.4 489.2 L867.4 489.6Z" fill="#64586d" stroke="#64586d" stroke-width="0.5"/><path d="M887.1 492.9 L887.0 492.2 L886.9 490.8 L886.7 489.4 L886.5 488.0 L886.3 486.6 L886.2 486.2 L867.2 488.7 L867.4 489.2 L867.7 490.5 L867.9 491.8 L868.2 493.0 L868.5 494.3 L868.5 494.7Z" fill="#615769" stroke="#615769" stroke-width="0.5"/><path d="M887.6 498.6 L887.6 498.0 L887.5 496.5 L887.3 495.1 L887.2 493.7 L887.0 492.2 L887.0 491.9 L868.4 493.8 L868.5 494.3 L868.7 495.6 L868.9 496.9 L869.1 498.2 L869.3 499.5 L869.3 499.6 L869.4 499.6 L869.5 499.9Z" fill="#5e5565" stroke="#5e5565" stroke-width="0.5"/><path d="M887.8 504.4 L887.8 503.7 L887.8 502.3 L887.7 500.8 L887.6 499.4 L887.6 498.0 L887.5 497.6 L869.3 499.0 L869.3 499.5 L869.3 499.6 L869.4 499.6 L871.8 505.0Z" fill="#5b5460" stroke="#5b5460" stroke-width="0.5"/><path d="M887.8 510.1 L887.8 509.5 L887.9 508.1 L887.9 506.6 L887.8 505.2 L887.8 503.7 L887.8 503.4 L871.4 504.1 L874.2 510.3Z" fill="#58525c" stroke="#58525c" stroke-width="0.5"/><path d="M887.6 515.9 L887.6 515.4 L887.7 513.9 L887.7 512.5 L887.8 511.0 L887.8 509.5 L887.8 509.1 L873.8 509.4 L876.7 515.8Z" fill="#555158" stroke="#555158" stroke-width="0.5"/><path d="M887.0 521.7 L887.1 521.2 L887.2 519.8 L887.4 518.3 L887.5 516.8 L887.6 515.4 L887.6 514.9 L876.2 514.8 L879.2 521.4Z" fill="#58525c" stroke="#58525c" stroke-width="0.5"/><path d="M886.3 527.5 L886.3 527.1 L886.6 525.6 L886.8 524.1 L886.9 522.7 L887.1 521.2 L887.1 520.7 L878.7 520.4 L881.8 527.2Z" fill="#5b5461" stroke="#5b5461" stroke-width="0.5"/><path d="M885.3 533.4 L885.3 533.0 L885.6 531.5 L885.9 530.0 L886.1 528.5 L886.3 527.1 L886.4 526.5 L881.3 526.2 L884.5 533.3Z" fill="#5e5565" stroke="#5e5565" stroke-width="0.5"/><path d="M884.0 532.2 L885.0 534.5 L885.0 534.4 L885.3 533.0 L885.4 532.4Z" fill="#615769" stroke="#615769" stroke-width="0.5"/><path d="M871.1 548.4 L871.0 541.8 L868.2 541.4 L868.1 541.9 L867.9 543.2 L867.6 544.5 L867.3 545.9 L867.0 547.2 L866.8 547.7Z" fill="#65596f" stroke="#65596f" stroke-width="0.5"/><path d="M871.2 554.1 L871.1 547.4 L867.1 546.8 L867.0 547.2 L866.6 548.6 L866.3 549.9 L865.9 551.2 L865.5 552.6 L865.4 553.0Z" fill="#685a73" stroke="#685a73" stroke-width="0.5"/><path d="M871.3 560.0 L871.2 553.1 L865.7 552.1 L865.5 552.6 L865.1 553.9 L864.7 555.2 L864.3 556.6 L863.9 557.9 L863.7 558.4Z" fill="#6b5c77" stroke="#6b5c77" stroke-width="0.5"/><path d="M871.3 566.1 L871.2 559.0 L864.0 557.4 L863.9 557.9 L863.4 559.2 L862.9 560.5 L862.5 561.9 L862.0 563.2 L861.8 563.7Z" fill="#6e5d7b" stroke="#6e5d7b" stroke-width="0.5"/><path d="M871.4 572.3 L871.3 565.0 L862.1 562.7 L862.0 563.2 L861.5 564.5 L860.9 565.8 L860.4 567.2 L859.8 568.5 L859.6 568.9Z" fill="#705e7f" stroke="#705e7f" stroke-width="0.5"/><path d="M868.8 577.8 L869.5 576.4 L870.3 575.0 L871.0 573.6 L871.4 572.8 L871.4 571.2 L860.0 568.0 L859.8 568.5 L859.3 569.8 L858.7 571.1 L858.1 572.4 L857.5 573.7 L857.3 574.1Z" fill="#736083" stroke="#736083" stroke-width="0.5"/><path d="M865.6 583.2 L866.3 582.0 L867.2 580.6 L868.0 579.2 L868.8 577.8 L869.3 576.9 L857.7 573.3 L857.5 573.7 L856.9 575.0 L856.2 576.3 L855.6 577.6 L854.9 578.9 L854.7 579.3Z" fill="#766187" stroke="#766187" stroke-width="0.5"/><path d="M862.3 588.5 L862.9 587.6 L863.8 586.2 L864.6 584.8 L865.5 583.4 L866.2 582.3 L855.1 578.4 L854.9 578.9 L854.2 580.2 L853.5 581.5 L852.8 582.7 L852.1 584.0 L851.8 584.5Z" fill="#78628a" stroke="#78628a" stroke-width="0.5"/><path d="M858.7 593.8 L859.2 593.1 L860.2 591.7 L861.1 590.3 L862.0 589.0 L862.9 587.6 L852.3 583.6 L852.1 584.0 L851.3 585.3 L850.6 586.6 L849.8 587.8 L849.0 589.1 L848.8 589.5Z" fill="#7b648e" stroke="#7b648e" stroke-width="0.5"/><path d="M854.9 598.9 L855.3 598.4 L856.3 597.1 L857.3 595.8 L858.2 594.4 L859.2 593.1 L859.3 592.9 L849.3 588.7 L849.0 589.1 L848.2 590.4 L847.4 591.6 L846.6 592.9 L845.8 594.1 L845.5 594.5Z" fill="#7e6592" stroke="#7e6592" stroke-width="0.5"/><path d="M850.9 604.0 L851.1 603.7 L852.2 602.4 L853.2 601.1 L854.2 599.8 L855.3 598.4 L855.6 598.0 L846.0 593.7 L845.8 594.1 L844.9 595.3 L844.0 596.6 L843.2 597.8 L842.3 599.0 L842.0 599.5Z" fill="#806695" stroke="#806695" stroke-width="0.5"/><path d="M846.7 608.9 L847.8 607.7 L848.9 606.4 L850.0 605.1 L851.1 603.7 L851.6 603.1 L842.6 598.6 L842.3 599.0 L841.4 600.3 L840.4 601.5 L839.5 602.7 L838.6 603.9 L838.2 604.3Z" fill="#836798" stroke="#836798" stroke-width="0.5"/><path d="M842.3 613.8 L843.2 612.8 L844.4 611.5 L845.5 610.2 L846.7 608.9 L847.4 608.1 L838.9 603.5 L838.6 603.9 L837.6 605.1 L836.6 606.3 L835.6 607.5 L834.6 608.7 L834.3 609.1Z" fill="#85699c" stroke="#85699c" stroke-width="0.5"/><path d="M837.6 618.5 L838.4 617.8 L839.6 616.5 L840.8 615.3 L842.0 614.0 L843.0 613.0 L835.0 608.2 L834.6 608.7 L833.6 609.8 L832.6 611.0 L831.6 612.2 L830.5 613.3 L830.1 613.7Z" fill="#876a9f" stroke="#876a9f" stroke-width="0.5"/><path d="M832.8 623.2 L833.4 622.7 L834.7 621.5 L835.9 620.2 L837.2 619.0 L838.4 617.8 L838.5 617.7 L830.9 612.9 L830.5 613.3 L829.4 614.5 L828.4 615.6 L827.3 616.8 L826.2 617.9 L825.8 618.3Z" fill="#896ba2" stroke="#896ba2" stroke-width="0.5"/><path d="M827.8 627.7 L828.1 627.4 L829.5 626.3 L830.8 625.1 L832.1 623.9 L833.4 622.7 L833.7 622.4 L826.6 617.5 L826.2 617.9 L825.1 619.0 L823.9 620.1 L822.8 621.2 L821.6 622.3 L821.2 622.7Z" fill="#8b6ca5" stroke="#8b6ca5" stroke-width="0.5"/><path d="M822.7 632.0 L824.0 630.9 L825.4 629.8 L826.8 628.6 L828.1 627.4 L828.7 626.9 L822.0 622.0 L821.6 622.3 L820.5 623.4 L819.3 624.5 L818.1 625.6 L816.9 626.7 L816.5 627.1Z" fill="#8e6da8" stroke="#8e6da8" stroke-width="0.5"/><path d="M817.3 636.3 L818.4 635.4 L819.8 634.3 L821.3 633.2 L822.7 632.1 L823.6 631.3 L817.3 626.3 L816.9 626.7 L815.7 627.8 L814.5 628.8 L813.2 629.9 L812.0 630.9 L811.5 631.3Z" fill="#8f6eab" stroke="#8f6eab" stroke-width="0.5"/><path d="M811.8 640.4 L812.6 639.8 L814.1 638.7 L815.5 637.6 L817.0 636.5 L818.3 635.6 L812.4 630.5 L812.0 630.9 L810.7 631.9 L809.5 633.0 L808.2 634.0 L806.9 635.0 L806.4 635.3Z" fill="#916fad" stroke="#916fad" stroke-width="0.5"/><path d="M806.1 644.3 L806.6 644.0 L808.1 643.0 L809.6 641.9 L811.1 640.9 L812.6 639.8 L812.8 639.7 L807.3 634.6 L806.9 635.0 L805.6 636.0 L804.3 637.0 L802.9 638.0 L801.6 638.9 L801.1 639.3Z" fill="#9370b0" stroke="#9370b0" stroke-width="0.5"/><path d="M800.3 648.1 L800.4 648.1 L802.0 647.1 L803.5 646.1 L805.1 645.1 L806.6 644.0 L807.1 643.7 L802.1 638.6 L801.6 638.9 L800.2 639.9 L798.9 640.9 L797.5 641.8 L796.1 642.8 L795.7 643.1Z" fill="#9570b2" stroke="#9570b2" stroke-width="0.5"/><path d="M794.3 651.8 L795.6 651.0 L797.2 650.0 L798.8 649.1 L800.4 648.1 L801.3 647.5 L796.6 642.4 L796.1 642.8 L794.7 643.7 L793.3 644.6 L791.9 645.5 L790.5 646.4 L790.0 646.7Z" fill="#9671b4" stroke="#9671b4" stroke-width="0.5"/><path d="M788.2 655.3 L789.1 654.8 L790.8 653.8 L792.4 652.9 L794.0 652.0 L795.3 651.2 L791.0 646.1 L790.5 646.4 L789.1 647.3 L787.6 648.2 L786.2 649.1 L784.7 649.9 L784.2 650.2Z" fill="#9872b6" stroke="#9872b6" stroke-width="0.5"/><path d="M781.9 658.6 L782.5 658.3 L784.2 657.5 L785.8 656.6 L787.5 655.7 L789.1 654.8 L789.2 654.7 L785.2 649.6 L784.7 649.9 L783.3 650.8 L781.8 651.6 L780.3 652.5 L778.8 653.3 L778.3 653.6Z" fill="#9973b8" stroke="#9973b8" stroke-width="0.5"/><path d="M775.5 661.8 L775.7 661.7 L777.4 660.9 L779.1 660.0 L780.8 659.2 L782.5 658.3 L783.0 658.1 L779.3 653.0 L778.8 653.3 L777.3 654.1 L775.8 654.9 L774.3 655.7 L772.7 656.5 L772.2 656.7Z" fill="#9b73ba" stroke="#9b73ba" stroke-width="0.5"/><path d="M769.0 664.8 L770.5 664.1 L772.2 663.3 L773.9 662.5 L775.7 661.7 L776.6 661.3 L773.3 656.2 L772.7 656.5 L771.2 657.2 L769.7 658.0 L768.1 658.7 L766.5 659.5 L766.0 659.7Z" fill="#9c74bc" stroke="#9c74bc" stroke-width="0.5"/><path d="M762.4 667.6 L763.4 667.2 L765.2 666.4 L767.0 665.7 L768.7 664.9 L770.1 664.3 L767.1 659.2 L766.5 659.5 L765.0 660.2 L763.4 660.9 L761.8 661.6 L760.2 662.3 L759.7 662.6Z" fill="#9d74bd" stroke="#9d74bd" stroke-width="0.5"/><path d="M755.7 670.2 L756.2 670.0 L758.0 669.3 L759.8 668.6 L761.6 667.9 L763.4 667.2 L763.5 667.1 L760.8 662.1 L760.2 662.3 L758.6 663.0 L757.0 663.7 L755.4 664.3 L753.8 665.0 L753.2 665.2Z" fill="#9e75bf" stroke="#9e75bf" stroke-width="0.5"/><path d="M748.8 672.7 L748.9 672.7 L750.8 672.0 L752.6 671.4 L754.4 670.7 L756.2 670.0 L756.8 669.8 L754.3 664.8 L753.8 665.0 L752.2 665.6 L750.5 666.2 L748.9 666.9 L747.2 667.5 L746.7 667.7Z" fill="#9f75c0" stroke="#9f75c0" stroke-width="0.5"/><path d="M741.9 675.0 L743.4 674.5 L745.3 673.9 L747.1 673.3 L748.9 672.7 L750.0 672.3 L747.8 667.2 L747.2 667.5 L745.6 668.0 L743.9 668.6 L742.3 669.2 L740.6 669.7 L740.0 669.9Z" fill="#9f76c1" stroke="#9f76c1" stroke-width="0.5"/><path d="M735.0 677.0 L735.9 676.8 L737.8 676.2 L739.7 675.7 L741.5 675.1 L743.1 674.6 L741.2 669.5 L740.6 669.7 L738.9 670.3 L737.2 670.8 L735.5 671.3 L733.9 671.8 L733.3 672.0Z" fill="#a076c2" stroke="#a076c2" stroke-width="0.5"/><path d="M727.9 678.9 L728.4 678.8 L730.3 678.3 L732.2 677.8 L734.0 677.3 L735.9 676.8 L736.2 676.7 L734.4 671.7 L733.9 671.8 L732.2 672.3 L730.5 672.8 L728.7 673.3 L727.0 673.7 L726.4 673.9Z" fill="#a076c3" stroke="#a076c3" stroke-width="0.5"/><path d="M720.8 680.6 L722.7 680.2 L724.6 679.7 L726.5 679.3 L728.4 678.8 L729.1 678.6 L727.6 673.6 L727.0 673.7 L725.3 674.2 L723.6 674.6 L721.9 675.0 L720.2 675.4 L719.6 675.6Z" fill="#a176c3" stroke="#a176c3" stroke-width="0.5"/><path d="M713.6 682.1 L715.0 681.9 L716.9 681.5 L718.8 681.1 L720.7 680.6 L722.0 680.3 L720.7 675.3 L720.2 675.4 L718.4 675.8 L716.7 676.2 L715.0 676.6 L713.2 676.9 L712.6 677.0Z" fill="#a177c4" stroke="#a177c4" stroke-width="0.5"/><path d="M706.4 683.4 L707.2 683.3 L709.2 682.9 L711.1 682.6 L713.0 682.2 L714.8 681.9 L713.8 676.8 L713.2 676.9 L711.5 677.3 L709.7 677.6 L708.0 677.9 L706.2 678.2 L705.6 678.3Z" fill="#a177c4" stroke="#a177c4" stroke-width="0.5"/><path d="M699.1 684.5 L699.5 684.5 L701.4 684.2 L703.3 683.9 L705.3 683.6 L707.2 683.3 L707.6 683.2 L706.8 678.1 L706.2 678.2 L704.5 678.5 L702.7 678.8 L701.0 679.0 L699.2 679.3 L698.6 679.4Z" fill="#a177c4" stroke="#a177c4" stroke-width="0.5"/><path d="M691.8 685.4 L693.6 685.2 L695.6 685.0 L697.5 684.7 L699.5 684.5 L700.4 684.3 L699.8 679.2 L699.2 679.3 L697.4 679.5 L695.7 679.7 L693.9 680.0 L692.1 680.2 L691.5 680.2Z" fill="#a177c4" stroke="#a177c4" stroke-width="0.5"/><path d="M684.5 686.1 L685.8 686.0 L687.7 685.8 L689.7 685.7 L691.6 685.4 L693.1 685.3 L692.7 680.1 L692.1 680.2 L690.4 680.3 L688.6 680.5 L686.8 680.7 L685.1 680.8 L684.5 680.9Z" fill="#a177c4" stroke="#a177c4" stroke-width="0.5"/><path d="M677.2 686.6 L677.9 686.6 L679.9 686.5 L681.8 686.3 L683.8 686.2 L685.8 686.0 L685.8 686.0 L685.7 680.8 L685.1 680.8 L683.3 681.0 L681.5 681.1 L679.8 681.2 L678.0 681.3 L677.4 681.3Z" fill="#a176c3" stroke="#a176c3" stroke-width="0.5"/><path d="M669.9 686.9 L670.1 686.9 L672.0 686.8 L674.0 686.8 L676.0 686.7 L677.9 686.6 L678.5 686.5 L678.6 681.2 L678.0 681.3 L676.2 681.3 L674.4 681.4 L672.7 681.5 L670.9 681.5 L670.3 681.5Z" fill="#a076c3" stroke="#a076c3" stroke-width="0.5"/><path d="M662.6 687.0 L664.2 687.0 L666.2 687.0 L668.1 686.9 L670.1 686.9 L671.2 686.9 L671.5 681.5 L670.9 681.5 L669.1 681.5 L667.4 681.5 L665.6 681.5 L663.8 681.5 L663.2 681.5Z" fill="#a076c2" stroke="#a076c2" stroke-width="0.5"/><path d="M655.3 686.9 L656.4 686.9 L658.4 686.9 L660.3 687.0 L662.3 687.0 L663.9 687.0 L664.4 681.5 L663.8 681.5 L662.1 681.5 L660.3 681.5 L658.6 681.4 L656.8 681.3 L656.2 681.3Z" fill="#9f76c1" stroke="#9f76c1" stroke-width="0.5"/><path d="M648.1 686.5 L648.6 686.6 L650.6 686.7 L652.5 686.8 L654.5 686.8 L656.4 686.9 L656.6 686.9 L657.4 681.4 L656.8 681.3 L655.0 681.3 L653.3 681.2 L651.5 681.1 L649.8 680.9 L649.2 680.9Z" fill="#9f75c0" stroke="#9f75c0" stroke-width="0.5"/><path d="M640.8 686.0 L640.9 686.0 L642.8 686.2 L644.8 686.3 L646.7 686.4 L648.6 686.6 L649.3 686.6 L650.4 681.0 L649.8 680.9 L648.0 680.8 L646.3 680.7 L644.6 680.5 L642.8 680.3 L642.2 680.3Z" fill="#9e75bf" stroke="#9e75bf" stroke-width="0.5"/><path d="M633.6 685.3 L635.1 685.4 L637.0 685.6 L639.0 685.8 L640.9 686.0 L642.1 686.1 L643.4 680.4 L642.8 680.3 L641.1 680.1 L639.4 679.9 L637.6 679.7 L635.9 679.5 L635.3 679.4Z" fill="#9d74bd" stroke="#9d74bd" stroke-width="0.5"/><path d="M626.5 684.3 L627.5 684.4 L629.4 684.7 L631.3 685.0 L633.2 685.2 L634.9 685.4 L636.5 679.6 L635.9 679.5 L634.2 679.3 L632.5 679.0 L630.8 678.7 L629.1 678.5 L628.5 678.4Z" fill="#9c74bc" stroke="#9c74bc" stroke-width="0.5"/><path d="M619.4 683.2 L620.0 683.2 L621.8 683.6 L623.7 683.9 L625.6 684.2 L627.5 684.4 L627.7 684.5 L629.7 678.6 L629.1 678.5 L627.4 678.2 L625.7 677.9 L624.0 677.5 L622.3 677.2 L621.7 677.1Z" fill="#9a73ba" stroke="#9a73ba" stroke-width="0.5"/><path d="M612.4 681.8 L612.5 681.8 L614.4 682.2 L616.2 682.6 L618.1 682.9 L620.0 683.2 L620.7 683.4 L622.9 677.3 L622.3 677.2 L620.6 676.9 L619.0 676.5 L617.3 676.2 L615.6 675.8 L615.1 675.6Z" fill="#9973b8" stroke="#9973b8" stroke-width="0.5"/><path d="M605.5 680.2 L607.0 680.6 L608.8 681.0 L610.6 681.4 L612.5 681.8 L613.6 682.0 L616.2 675.9 L615.6 675.8 L614.0 675.4 L612.3 675.0 L610.7 674.6 L609.1 674.1 L608.5 674.0Z" fill="#9872b6" stroke="#9872b6" stroke-width="0.5"/><path d="M598.7 678.5 L599.7 678.7 L601.5 679.2 L603.3 679.7 L605.1 680.1 L606.7 680.5 L609.6 674.3 L609.1 674.1 L607.4 673.7 L605.8 673.2 L604.2 672.7 L602.6 672.3 L602.0 672.1Z" fill="#9671b4" stroke="#9671b4" stroke-width="0.5"/><path d="M592.0 676.5 L592.5 676.7 L594.3 677.2 L596.1 677.7 L597.9 678.3 L599.7 678.7 L599.9 678.8 L603.1 672.4 L602.6 672.3 L601.0 671.8 L599.4 671.3 L597.8 670.7 L596.2 670.2 L595.7 670.0Z" fill="#9570b2" stroke="#9570b2" stroke-width="0.5"/><path d="M585.3 674.4 L585.5 674.4 L587.2 675.0 L589.0 675.6 L590.7 676.1 L592.5 676.7 L593.1 676.9 L596.7 670.4 L596.2 670.2 L594.6 669.7 L593.1 669.1 L591.5 668.6 L590.0 668.0 L589.4 667.8Z" fill="#936fb0" stroke="#936fb0" stroke-width="0.5"/><path d="M578.8 672.0 L580.3 672.6 L582.0 673.2 L583.7 673.8 L585.5 674.4 L586.5 674.8 L590.5 668.2 L590.0 668.0 L588.4 667.4 L586.9 666.8 L585.4 666.2 L583.9 665.5 L583.3 665.3Z" fill="#916fad" stroke="#916fad" stroke-width="0.5"/><path d="M572.4 669.5 L573.5 669.9 L575.2 670.6 L576.9 671.3 L578.6 671.9 L579.9 672.4 L584.4 665.8 L583.9 665.5 L582.3 664.9 L580.8 664.3 L579.4 663.6 L577.9 662.9 L577.4 662.7Z" fill="#8f6eaa" stroke="#8f6eaa" stroke-width="0.5"/><path d="M566.2 666.8 L566.9 667.1 L568.5 667.8 L570.2 668.5 L571.8 669.2 L573.5 669.9 L573.5 669.9 L578.4 663.2 L577.9 662.9 L576.4 662.2 L574.9 661.5 L573.5 660.8 L572.1 660.1 L571.6 659.9Z" fill="#8d6da8" stroke="#8d6da8" stroke-width="0.5"/><path d="M560.1 663.9 L560.4 664.0 L562.0 664.8 L563.6 665.6 L565.2 666.3 L566.9 667.1 L567.2 667.3 L572.6 660.4 L572.1 660.1 L570.6 659.4 L569.2 658.7 L567.8 657.9 L566.4 657.1 L565.9 656.9Z" fill="#8b6ca5" stroke="#8b6ca5" stroke-width="0.5"/><path d="M554.1 660.8 L554.1 660.8 L555.7 661.6 L557.2 662.4 L558.8 663.2 L560.4 664.0 L561.1 664.4 L566.9 657.4 L566.4 657.1 L565.0 656.4 L563.6 655.6 L562.2 654.8 L560.9 654.0 L560.4 653.7Z" fill="#896ba2" stroke="#896ba2" stroke-width="0.5"/><path d="M548.3 657.5 L549.5 658.2 L551.0 659.1 L552.6 659.9 L554.1 660.8 L555.1 661.3 L561.4 654.3 L560.9 654.0 L559.5 653.2 L558.2 652.4 L556.9 651.5 L555.6 650.7 L555.1 650.4Z" fill="#876a9f" stroke="#876a9f" stroke-width="0.5"/><path d="M542.6 654.1 L543.5 654.6 L545.0 655.6 L546.5 656.5 L548.0 657.3 L549.3 658.1 L556.0 651.0 L555.6 650.7 L554.2 649.8 L553.0 649.0 L551.7 648.1 L550.4 647.2 L550.0 646.9Z" fill="#85689b" stroke="#85689b" stroke-width="0.5"/><path d="M537.1 650.5 L537.8 650.9 L539.2 651.8 L540.6 652.8 L542.1 653.7 L543.5 654.6 L543.6 654.7 L550.8 647.5 L550.4 647.2 L549.1 646.3 L547.9 645.4 L546.7 644.5 L545.4 643.6 L545.0 643.3Z" fill="#826798" stroke="#826798" stroke-width="0.5"/><path d="M531.8 646.7 L532.2 647.0 L533.6 648.0 L535.0 648.9 L536.4 649.9 L537.8 650.9 L538.1 651.1 L545.9 643.9 L545.4 643.6 L544.2 642.7 L543.0 641.7 L541.8 640.8 L540.7 639.8 L540.3 639.5Z" fill="#806695" stroke="#806695" stroke-width="0.5"/><path d="M526.7 642.7 L526.8 642.9 L528.2 643.9 L529.5 644.9 L530.8 646.0 L532.2 647.0 L532.7 647.3 L541.1 640.1 L540.7 639.8 L539.5 638.8 L538.3 637.9 L537.2 636.9 L536.1 635.9 L535.7 635.5Z" fill="#7d6591" stroke="#7d6591" stroke-width="0.5"/><path d="M521.8 638.7 L523.0 639.7 L524.2 640.8 L525.5 641.8 L526.8 642.9 L527.6 643.4 L536.5 636.2 L536.1 635.9 L535.0 634.9 L533.9 633.9 L532.8 632.8 L531.7 631.8 L531.3 631.5Z" fill="#7b648e" stroke="#7b648e" stroke-width="0.5"/><path d="M517.0 634.4 L518.0 635.3 L519.2 636.4 L520.4 637.5 L521.7 638.6 L522.6 639.4 L532.1 632.2 L531.7 631.8 L530.6 630.8 L529.6 629.7 L528.5 628.7 L527.5 627.6 L527.2 627.3Z" fill="#78628a" stroke="#78628a" stroke-width="0.5"/><path d="M512.5 630.0 L513.2 630.8 L514.4 631.9 L515.6 633.1 L516.8 634.2 L517.8 635.1 L527.9 628.0 L527.5 627.6 L526.5 626.6 L525.5 625.5 L524.5 624.4 L523.6 623.3 L523.2 622.9Z" fill="#766186" stroke="#766186" stroke-width="0.5"/><path d="M509.1 624.9 L509.7 627.2 L509.8 627.3 L511.0 628.5 L512.1 629.6 L513.2 630.8 L523.9 623.7 L523.6 623.3 L522.6 622.2 L521.7 621.1 L520.7 620.0 L519.8 618.9 L519.5 618.5Z" fill="#736082" stroke="#736082" stroke-width="0.5"/><path d="M507.6 618.8 L509.4 626.0 L520.1 619.3 L519.8 618.9 L518.9 617.8 L518.0 616.6 L517.2 615.5 L516.3 614.3 L516.0 613.9Z" fill="#705e7e" stroke="#705e7e" stroke-width="0.5"/><path d="M506.0 612.9 L507.8 619.8 L516.6 614.7 L516.3 614.3 L515.4 613.2 L514.6 612.0 L513.8 610.9 L513.0 609.7 L512.7 609.3Z" fill="#6d5d7b" stroke="#6d5d7b" stroke-width="0.5"/><path d="M504.6 607.1 L506.3 613.9 L513.3 610.1 L513.0 609.7 L512.2 608.5 L511.4 607.3 L510.7 606.1 L509.9 605.0 L509.7 604.5Z" fill="#6a5b77" stroke="#6a5b77" stroke-width="0.5"/><path d="M503.1 601.4 L504.8 608.1 L510.2 605.4 L509.9 605.0 L509.2 603.8 L508.5 602.5 L507.8 601.3 L507.1 600.1 L506.8 599.7Z" fill="#685a73" stroke="#685a73" stroke-width="0.5"/><path d="M501.7 595.9 L503.4 602.4 L507.3 600.5 L507.1 600.1 L506.4 598.9 L505.7 597.7 L505.1 596.4 L504.5 595.2 L504.3 594.8Z" fill="#65586e" stroke="#65586e" stroke-width="0.5"/><path d="M500.3 590.4 L501.9 596.8 L504.7 595.6 L504.5 595.2 L503.9 594.0 L503.3 592.7 L502.7 591.5 L502.1 590.2 L501.9 589.8Z" fill="#62576a" stroke="#62576a" stroke-width="0.5"/><path d="M498.9 585.0 L500.5 591.4 L502.3 590.6 L502.1 590.2 L501.5 589.0 L501.0 587.7 L500.5 586.4 L500.0 585.2 L499.8 584.7Z" fill="#5f5666" stroke="#5f5666" stroke-width="0.5"/><path d="M497.5 579.7 L499.1 586.0 L500.1 585.6 L500.0 585.2 L499.5 583.9 L499.0 582.6 L498.5 581.3 L498.0 580.0 L497.9 579.6Z" fill="#5c5462" stroke="#5c5462" stroke-width="0.5"/><path d="M496.2 574.4 L497.8 580.6 L498.2 580.5 L498.0 580.0 L497.6 578.7 L497.2 577.4 L496.8 576.2 L496.4 574.9 L496.3 574.4Z" fill="#59535e" stroke="#59535e" stroke-width="0.5"/><path d="M496.5 575.3 L496.4 574.9 L496.0 573.6 L495.6 572.2 L495.3 570.9 L496.4 575.3Z" fill="#56515a" stroke="#56515a" stroke-width="0.5"/><path d="M870.7 520.9 L870.6 515.2 L870.6 516.5 L870.6 517.8 L870.6 519.2 L870.6 520.5 L870.6 520.9Z" fill="#56515a" stroke="#56515a" stroke-width="0.5"/><path d="M870.8 526.3 L870.7 520.0 L870.6 520.0 L870.6 520.5 L870.5 521.8 L870.5 523.2 L870.4 524.5 L870.3 525.8 L870.3 526.3Z" fill="#59535e" stroke="#59535e" stroke-width="0.5"/><path d="M870.8 531.7 L870.8 525.4 L870.3 525.4 L870.3 525.8 L870.2 527.2 L870.1 528.5 L870.0 529.8 L869.8 531.2 L869.8 531.6Z" fill="#5c5462" stroke="#5c5462" stroke-width="0.5"/><path d="M870.9 537.2 L870.8 530.8 L869.9 530.7 L869.8 531.2 L869.7 532.5 L869.5 533.8 L869.3 535.2 L869.1 536.5 L869.0 537.0Z" fill="#5f5667" stroke="#5f5667" stroke-width="0.5"/><path d="M871.0 542.7 L870.9 536.2 L869.2 536.1 L869.1 536.5 L868.9 537.9 L868.7 539.2 L868.4 540.5 L868.1 541.9 L868.0 542.3Z" fill="#62576b" stroke="#62576b" stroke-width="0.5"/><path d="M868.1 541.9 L867.9 543.2 L867.6 544.5 L867.3 545.9 L867.0 547.2 L866.6 548.6 L866.3 549.9 L865.9 551.2 L865.5 552.6 L865.1 553.9 L864.7 555.2 L864.3 556.6 L863.9 557.9 L863.4 559.2 L862.9 560.5 L862.5 561.9 L862.0 563.2 L861.5 564.5 L860.9 565.8 L860.4 567.2 L859.8 568.5 L859.3 569.8 L858.7 571.1 L858.1 572.4 L857.5 573.7 L856.9 575.0 L856.2 576.3 L855.6 577.6 L854.9 578.9 L854.2 580.2 L853.5 581.5 L852.8 582.7 L852.1 584.0 L851.3 585.3 L850.6 586.6 L849.8 587.8 L849.0 589.1 L848.2 590.4 L847.4 591.6 L846.6 592.9 L845.8 594.1 L844.9 595.3 L844.0 596.6 L843.2 597.8 L842.3 599.0 L841.4 600.3 L840.4 601.5 L839.5 602.7 L838.6 603.9 L837.6 605.1 L836.6 606.3 L835.6 607.5 L834.6 608.7 L833.6 609.8 L832.6 611.0 L831.6 612.2 L830.5 613.3 L829.4 614.5 L828.4 615.6 L827.3 616.8 L826.2 617.9 L825.1 619.0 L823.9 620.1 L822.8 621.2 L821.6 622.3 L820.5 623.4 L819.3 624.5 L818.1 625.6 L816.9 626.7 L815.7 627.8 L814.5 628.8 L813.2 629.9 L812.0 630.9 L810.7 631.9 L809.5 633.0 L808.2 634.0 L806.9 635.0 L805.6 636.0 L804.3 637.0 L802.9 638.0 L801.6 638.9 L800.2 639.9 L798.9 640.9 L797.5 641.8 L796.1 642.8 L794.7 643.7 L793.3 644.6 L791.9 645.5 L790.5 646.4 L789.1 647.3 L787.6 648.2 L786.2 649.1 L784.7 649.9 L783.3 650.8 L781.8 651.6 L780.3 652.5 L778.8 653.3 L777.3 654.1 L775.8 654.9 L774.3 655.7 L772.7 656.5 L771.2 657.2 L769.7 658.0 L768.1 658.7 L766.5 659.5 L765.0 660.2 L763.4 660.9 L761.8 661.6 L760.2 662.3 L758.6 663.0 L757.0 663.7 L755.4 664.3 L753.8 665.0 L752.2 665.6 L750.5 666.2 L748.9 666.9 L747.2 667.5 L745.6 668.0 L743.9 668.6 L742.3 669.2 L740.6 669.7 L738.9 670.3 L737.2 670.8 L735.5 671.3 L733.9 671.8 L732.2 672.3 L730.5 672.8 L728.7 673.3 L727.0 673.7 L725.3 674.2 L723.6 674.6 L721.9 675.0 L720.2 675.4 L718.4 675.8 L716.7 676.2 L715.0 676.6 L713.2 676.9 L711.5 677.3 L709.7 677.6 L708.0 677.9 L706.2 678.2 L704.5 678.5 L702.7 678.8 L701.0 679.0 L699.2 679.3 L697.4 679.5 L695.7 679.7 L693.9 680.0 L692.1 680.2 L690.4 680.3 L688.6 680.5 L686.8 680.7 L685.1 680.8 L683.3 681.0 L681.5 681.1 L679.8 681.2 L678.0 681.3 L676.2 681.3 L674.4 681.4 L672.7 681.5 L670.9 681.5 L669.1 681.5 L667.4 681.5 L665.6 681.5 L663.8 681.5 L662.1 681.5 L660.3 681.5 L658.6 681.4 L656.8 681.3 L655.0 681.3 L653.3 681.2 L651.5 681.1 L649.8 680.9 L648.0 680.8 L646.3 680.7 L644.6 680.5 L642.8 680.3 L641.1 680.1 L639.4 679.9 L637.6 679.7 L635.9 679.5 L634.2 679.3 L632.5 679.0 L630.8 678.7 L629.1 678.5 L627.4 678.2 L625.7 677.9 L624.0 677.5 L622.3 677.2 L620.6 676.9 L619.0 676.5 L617.3 676.2 L615.6 675.8 L614.0 675.4 L612.3 675.0 L610.7 674.6 L609.1 674.1 L607.4 673.7 L605.8 673.2 L604.2 672.7 L602.6 672.3 L601.0 671.8 L599.4 671.3 L597.8 670.7 L596.2 670.2 L594.6 669.7 L593.1 669.1 L591.5 668.6 L590.0 668.0 L588.4 667.4 L586.9 666.8 L585.4 666.2 L583.9 665.5 L582.3 664.9 L580.8 664.3 L579.4 663.6 L577.9 662.9 L576.4 662.2 L574.9 661.5 L573.5 660.8 L572.1 660.1 L570.6 659.4 L569.2 658.7 L567.8 657.9 L566.4 657.1 L565.0 656.4 L563.6 655.6 L562.2 654.8 L560.9 654.0 L559.5 653.2 L558.2 652.4 L556.9 651.5 L555.6 650.7 L554.2 649.8 L553.0 649.0 L551.7 648.1 L550.4 647.2 L549.1 646.3 L547.9 645.4 L546.7 644.5 L545.4 643.6 L544.2 642.7 L543.0 641.7 L541.8 640.8 L540.7 639.8 L539.5 638.8 L538.3 637.9 L537.2 636.9 L536.1 635.9 L535.0 634.9 L533.9 633.9 L532.8 632.8 L531.7 631.8 L530.6 630.8 L529.6 629.7 L528.5 628.7 L527.5 627.6 L526.5 626.6 L525.5 625.5 L524.5 624.4 L523.6 623.3 L522.6 622.2 L521.7 621.1 L520.7 620.0 L519.8 618.9 L518.9 617.8 L518.0 616.6 L517.2 615.5 L516.3 614.3 L515.4 613.2 L514.6 612.0 L513.8 610.9 L513.0 609.7 L512.2 608.5 L511.4 607.3 L510.7 606.1 L509.9 605.0 L509.2 603.8 L508.5 602.5 L507.8 601.3 L507.1 600.1 L506.4 598.9 L505.7 597.7 L505.1 596.4 L504.5 595.2 L503.9 594.0 L503.3 592.7 L502.7 591.5 L502.1 590.2 L501.5 589.0 L501.0 587.7 L500.5 586.4 L500.0 585.2 L499.5 583.9 L499.0 582.6 L498.5 581.3 L498.0 580.0 L497.6 578.7 L497.2 577.4 L496.8 576.2 L496.4 574.9 L496.0 573.6 L495.6 572.2 L495.3 570.9 L495.0 569.6 L494.6 568.3 L494.3 567.0 L494.0 565.7 L493.8 564.4 L493.5 563.0 L493.3 561.7 L493.0 560.4 L492.8 559.1 L492.6 557.7 L492.4 556.4 L492.3 555.1 L492.1 553.8 L492.0 552.4 L491.8 551.1 L491.7 549.8 L491.6 548.4 L491.6 547.1 L491.5 545.7 L491.4 544.4 L491.4 543.1 L491.4 541.7 L491.4 540.4 L491.4 539.0 L491.4 537.7 L491.4 536.4 L491.5 535.0 L491.6 533.7 L491.6 532.4 L491.7 531.0 L491.8 529.7 L492.0 528.3 L492.1 527.0 L492.3 525.7 L492.4 524.3 L492.6 523.0 L492.8 521.7 L493.0 520.3 L493.2 519.0 L493.5 517.7 L493.7 516.4 L494.0 515.0 L494.3 513.7 L494.6 512.4 L494.9 511.1 L495.2 509.8 L495.5 508.5 L495.9 507.1 L496.2 505.8 L496.6 504.5 L497.0 503.2 L497.4 501.9 L497.8 500.6 L498.3 499.3 L498.7 498.0 L499.2 496.7 L499.6 495.5 L500.1 494.2 L500.6 492.9 L501.1 491.6 L501.6 490.3 L502.2 489.1 L502.7 487.8 L503.3 486.6 L503.8 485.3 L504.4 484.0 L505.0 482.8 L505.6 481.5 L506.3 480.3 L506.9 479.1 L507.6 477.8 L508.2 476.6 L508.9 475.4 L509.6 474.2 L510.3 472.9 L511.0 471.7 L511.7 470.5 L512.4 469.3 L513.2 468.1 L513.9 466.9 L514.7 465.8 L515.5 464.6 L516.3 463.4 L517.1 462.2 L517.9 461.1 L518.7 459.9 L519.6 458.7 L520.4 457.6 L521.3 456.5 L522.1 455.3 L523.0 454.2 L523.9 453.1 L524.8 451.9 L525.7 450.8 L526.7 449.7 L527.6 448.6 L528.5 447.5 L529.5 446.4 L530.5 445.4 L531.4 444.3 L532.4 443.2 L533.4 442.2 L534.4 441.1 L535.4 440.1 L536.5 439.0 L537.5 438.0 L538.6 437.0 L539.6 435.9 L540.7 434.9 L541.7 433.9 L542.8 432.9 L543.9 431.9 L545.0 430.9 L546.1 430.0 L547.3 429.0 L548.4 428.0 L549.5 427.1 L550.7 426.1 L551.8 425.2 L553.0 424.2 L554.2 423.3 L555.3 422.4 L556.5 421.5 L557.7 420.6 L558.9 419.7 L560.1 418.8 L561.3 417.9 L562.6 417.1 L563.8 416.2 L565.1 415.3 L566.3 414.5 L567.6 413.7 L568.8 412.8 L570.1 412.0 L571.4 411.2 L572.7 410.4 L574.0 409.6 L575.3 408.8 L576.6 408.0 L577.9 407.3 L579.2 406.5 L580.5 405.7 L581.9 405.0 L583.2 404.3 L584.5 403.5 L585.9 402.8 L587.2 402.1 L588.6 401.4 L590.0 400.7 L591.4 400.0 L592.7 399.4 L594.1 398.7 L595.5 398.0 L596.9 397.4 L598.3 396.8 L599.7 396.1 L601.1 395.5 L602.6 394.9 L604.0 394.3 L605.4 393.7 L606.8 393.1 L608.3 392.6 L609.7 392.0 L611.2 391.4 L612.6 390.9 L614.1 390.4 L615.5 389.8 L617.0 389.3 L618.5 388.8 L619.9 388.3 L621.4 387.8 L622.9 387.3 L624.4 386.9 L625.8 386.4 L627.3 386.0 L628.8 385.5 L630.3 385.1 L631.8 384.7 L633.3 384.3 L634.8 383.9 L636.3 383.5 L637.8 383.1 L639.3 382.7 L640.9 382.4 L642.4 382.0 L643.9 381.7 L645.4 381.3 L646.9 381.0 L648.5 380.7 L650.0 380.4 L651.5 380.1 L653.1 379.8 L654.6 379.6 L656.1 379.3 L657.7 379.0 L659.2 378.8 L660.7 378.6 L662.3 378.3 L663.8 378.1 L665.4 377.9 L666.9 377.7 L668.4 377.6 L670.0 377.4 L671.5 377.2 L673.1 377.1 L674.6 376.9 L676.2 376.8 L677.7 376.7 L679.3 376.6 L680.8 376.5 L682.4 376.4 L683.9 376.3 L685.5 376.2 L687.0 376.2 L688.5 376.1 L690.1 376.1 L691.6 376.0 L693.2 376.0 L694.7 376.0 L696.3 376.0 L697.8 376.0 L699.3 376.0 L700.9 376.1 L702.4 376.1 L703.9 376.2 L705.5 376.2 L707.0 376.3 L708.5 376.4 L710.1 376.5 L711.6 376.6 L713.1 376.7 L714.7 376.8 L716.2 376.9 L717.7 377.1 L719.2 377.2 L720.7 377.4 L722.2 377.6 L723.7 377.8 L725.2 377.9 L726.8 378.2 L728.3 378.4 L729.8 378.6 L731.2 378.8 L732.7 379.1 L734.2 379.3 L735.7 379.6 L737.2 379.9 L738.7 380.1 L740.1 380.4 L741.6 380.7 L743.1 381.0 L744.5 381.4 L746.0 381.7 L747.5 382.0 L748.9 382.4 L750.4 382.8 L751.8 383.1 L753.2 383.5 L754.7 383.9 L756.1 384.3 L757.5 384.7 L758.9 385.1 L760.3 385.6 L761.8 386.0 L763.2 386.5 L764.6 386.9 L765.9 387.4 L767.3 387.9 L768.7 388.4 L770.1 388.9 L771.5 389.4 L772.8 389.9 L774.2 390.4 L775.5 390.9 L776.9 391.5 L778.2 392.0 L779.6 392.6 L780.9 393.2 L782.2 393.8 L783.5 394.4 L784.8 395.0 L786.1 395.6 L787.4 396.2 L788.7 396.8 L790.0 397.5 L791.3 398.1 L792.5 398.8 L793.8 399.4 L795.1 400.1 L796.3 400.8 L797.5 401.5 L798.8 402.2 L800.0 402.9 L801.2 403.6 L802.4 404.3 L803.6 405.1 L804.8 405.8 L806.0 406.6 L807.2 407.3 L808.3 408.1 L809.5 408.9 L810.6 409.7 L811.8 410.5 L812.9 411.3 L814.0 412.1 L815.2 412.9 L816.3 413.7 L817.4 414.6 L818.5 415.4 L819.5 416.3 L820.6 417.1 L821.7 418.0 L822.7 418.9 L823.8 419.8 L824.8 420.7 L825.8 421.6 L826.8 422.5 L827.8 423.4 L828.8 424.3 L829.8 425.3 L830.8 426.2 L831.8 427.2 L832.7 428.1 L833.7 429.1 L834.6 430.1 L835.5 431.0 L836.4 432.0 L837.3 433.0 L838.2 434.0 L839.1 435.0 L840.0 436.0 L840.9 437.1 L841.7 438.1 L842.5 439.1 L843.4 440.2 L844.2 441.2 L845.0 442.3 L845.8 443.3 L846.6 444.4 L847.4 445.5 L848.1 446.6 L848.9 447.6 L849.6 448.7 L850.3 449.8 L851.0 451.0 L851.7 452.1 L852.4 453.2 L853.1 454.3 L853.8 455.4 L854.4 456.6 L855.1 457.7 L855.7 458.9 L856.3 460.0 L856.9 461.2 L857.5 462.3 L858.1 463.5 L858.7 464.7 L859.2 465.9 L859.8 467.1 L860.3 468.3 L860.8 469.4 L861.3 470.7 L861.8 471.9 L862.3 473.1 L862.8 474.3 L863.2 475.5 L863.7 476.7 L864.1 478.0 L864.5 479.2 L864.9 480.4 L865.3 481.7 L865.7 482.9 L866.0 484.2 L866.4 485.4 L866.7 486.7 L867.0 487.9 L867.4 489.2 L867.7 490.5 L867.9 491.8 L868.2 493.0 L868.5 494.3 L868.7 495.6 L868.9 496.9 L869.1 498.2 L869.3 499.5 L869.5 500.8 L869.7 502.1 L869.8 503.4 L870.0 504.7 L870.1 506.0 L870.2 507.3 L870.3 508.6 L870.4 509.9 L870.5 511.2 L870.5 512.5 L870.6 513.9 L870.6 515.2 L870.6 516.5 L870.6 517.8 L870.6 519.2 L870.6 520.5 L870.5 521.8 L870.5 523.2 L870.4 524.5 L870.3 525.8 L870.2 527.2 L870.1 528.5 L870.0 529.8 L869.8 531.2 L869.7 532.5 L869.5 533.8 L869.3 535.2 L869.1 536.5 L868.9 537.9 L868.7 539.2 L868.4 540.5Z" fill="url(#topg)"/><path d="M863.1 540.8 L861.0 549.5 L862.4 549.8 L864.4 541.0Z" fill="#d992ff" stroke="#d992ff" stroke-width="0.4"/><path d="M864.4 541.0 L862.4 549.8 L863.6 550.3 L865.7 541.5Z" fill="#d892ff" stroke="#d892ff" stroke-width="0.4"/><path d="M865.7 541.5 L863.6 550.3 L864.7 551.0 L866.7 542.1Z" fill="#d490fe" stroke="#d490fe" stroke-width="0.4"/><path d="M866.7 542.1 L864.7 551.0 L865.5 551.8 L867.6 542.9Z" fill="#cd8cf4" stroke="#cd8cf4" stroke-width="0.4"/><path d="M867.6 542.9 L865.5 551.8 L866.0 552.6 L868.1 543.7Z" fill="#c588e8" stroke="#c588e8" stroke-width="0.4"/><path d="M868.1 543.7 L866.0 552.6 L866.2 553.5 L868.3 544.5Z" fill="#bb83da" stroke="#bb83da" stroke-width="0.4"/><path d="M861.3 548.6 L858.6 557.2 L860.0 557.6 L862.6 548.9Z" fill="#da93ff" stroke="#da93ff" stroke-width="0.4"/><path d="M862.6 548.9 L860.0 557.6 L861.2 558.2 L863.8 549.4Z" fill="#d892ff" stroke="#d892ff" stroke-width="0.4"/><path d="M863.8 549.4 L861.2 558.2 L862.2 558.9 L864.9 550.1Z" fill="#d390ff" stroke="#d390ff" stroke-width="0.4"/><path d="M864.9 550.1 L862.2 558.9 L863.1 559.8 L865.7 550.9Z" fill="#cb8bf3" stroke="#cb8bf3" stroke-width="0.4"/><path d="M865.7 550.9 L863.1 559.8 L863.6 560.6 L866.3 551.7Z" fill="#c086e3" stroke="#c086e3" stroke-width="0.4"/><path d="M866.3 551.7 L863.6 560.6 L863.8 561.4 L866.4 552.5Z" fill="#b37fd1" stroke="#b37fd1" stroke-width="0.4"/><path d="M858.9 556.3 L855.7 564.9 L857.0 565.4 L860.3 556.7Z" fill="#db93ff" stroke="#db93ff" stroke-width="0.4"/><path d="M860.3 556.7 L857.0 565.4 L858.3 566.0 L861.5 557.3Z" fill="#d992ff" stroke="#d992ff" stroke-width="0.4"/><path d="M861.5 557.3 L858.3 566.0 L859.3 566.8 L862.5 558.0Z" fill="#d390ff" stroke="#d390ff" stroke-width="0.4"/><path d="M862.5 558.0 L859.3 566.8 L860.1 567.7 L863.4 558.8Z" fill="#c98bf2" stroke="#c98bf2" stroke-width="0.4"/><path d="M863.4 558.8 L860.1 567.7 L860.6 568.5 L863.9 559.7Z" fill="#bc84df" stroke="#bc84df" stroke-width="0.4"/><path d="M863.9 559.7 L860.6 568.5 L860.8 569.4 L864.1 560.5Z" fill="#ab7cc8" stroke="#ab7cc8" stroke-width="0.4"/><path d="M856.1 564.1 L852.3 572.6 L853.6 573.1 L857.4 564.5Z" fill="#db94ff" stroke="#db94ff" stroke-width="0.4"/><path d="M857.4 564.5 L853.6 573.1 L854.8 573.8 L858.6 565.1Z" fill="#db93ff" stroke="#db93ff" stroke-width="0.4"/><path d="M858.6 565.1 L854.8 573.8 L855.8 574.6 L859.7 565.9Z" fill="#d490ff" stroke="#d490ff" stroke-width="0.4"/><path d="M859.7 565.9 L855.8 574.6 L856.6 575.5 L860.5 566.8Z" fill="#c88af3" stroke="#c88af3" stroke-width="0.4"/><path d="M860.5 566.8 L856.6 575.5 L857.2 576.4 L861.0 567.6Z" fill="#b882dc" stroke="#b882dc" stroke-width="0.4"/><path d="M861.0 567.6 L857.2 576.4 L857.3 577.2 L861.2 568.5Z" fill="#a578c1" stroke="#a578c1" stroke-width="0.4"/><path d="M852.8 571.7 L848.4 580.1 L849.7 580.7 L854.0 572.2Z" fill="#dc94ff" stroke="#dc94ff" stroke-width="0.4"/><path d="M854.0 572.2 L849.7 580.7 L850.9 581.4 L855.2 572.9Z" fill="#dc94ff" stroke="#dc94ff" stroke-width="0.4"/><path d="M855.2 572.9 L850.9 581.4 L851.9 582.3 L856.3 573.7Z" fill="#d590ff" stroke="#d590ff" stroke-width="0.4"/><path d="M856.3 573.7 L851.9 582.3 L852.7 583.2 L857.1 574.6Z" fill="#c88af4" stroke="#c88af4" stroke-width="0.4"/><path d="M857.1 574.6 L852.7 583.2 L853.2 584.1 L857.6 575.5Z" fill="#b681db" stroke="#b681db" stroke-width="0.4"/><path d="M857.6 575.5 L853.2 584.1 L853.3 585.0 L857.8 576.3Z" fill="#9f76bb" stroke="#9f76bb" stroke-width="0.4"/><path d="M848.9 579.3 L844.0 587.5 L845.3 588.1 L850.2 579.8Z" fill="#dd95ff" stroke="#dd95ff" stroke-width="0.4"/><path d="M850.2 579.8 L845.3 588.1 L846.4 588.9 L851.3 580.5Z" fill="#de95ff" stroke="#de95ff" stroke-width="0.4"/><path d="M851.3 580.5 L846.4 588.9 L847.4 589.8 L852.4 581.4Z" fill="#d791ff" stroke="#d791ff" stroke-width="0.4"/><path d="M852.4 581.4 L847.4 589.8 L848.2 590.8 L853.1 582.3Z" fill="#c98af7" stroke="#c98af7" stroke-width="0.4"/><path d="M853.1 582.3 L848.2 590.8 L848.7 591.7 L853.6 583.2Z" fill="#b480da" stroke="#b480da" stroke-width="0.4"/><path d="M853.6 583.2 L848.7 591.7 L848.8 592.6 L853.8 584.1Z" fill="#9b74b7" stroke="#9b74b7" stroke-width="0.4"/><path d="M844.6 586.7 L839.2 594.8 L840.3 595.5 L845.8 587.3Z" fill="#de95ff" stroke="#de95ff" stroke-width="0.4"/><path d="M845.8 587.3 L840.3 595.5 L841.5 596.3 L846.9 588.1Z" fill="#e096ff" stroke="#e096ff" stroke-width="0.4"/><path d="M846.9 588.1 L841.5 596.3 L842.4 597.2 L847.9 589.0Z" fill="#d992ff" stroke="#d992ff" stroke-width="0.4"/><path d="M847.9 589.0 L842.4 597.2 L843.2 598.2 L848.7 589.9Z" fill="#ca8bfa" stroke="#ca8bfa" stroke-width="0.4"/><path d="M848.7 589.9 L843.2 598.2 L843.7 599.2 L849.2 590.9Z" fill="#b480db" stroke="#b480db" stroke-width="0.4"/><path d="M849.2 590.9 L843.7 599.2 L843.8 600.1 L849.4 591.7Z" fill="#9972b5" stroke="#9972b5" stroke-width="0.4"/><path d="M839.7 594.0 L833.8 601.9 L834.9 602.6 L840.9 594.6Z" fill="#df95ff" stroke="#df95ff" stroke-width="0.4"/><path d="M840.9 594.6 L834.9 602.6 L836.0 603.5 L842.0 595.5Z" fill="#e297ff" stroke="#e297ff" stroke-width="0.4"/><path d="M842.0 595.5 L836.0 603.5 L837.0 604.5 L843.0 596.4Z" fill="#db93ff" stroke="#db93ff" stroke-width="0.4"/><path d="M843.0 596.4 L837.0 604.5 L837.7 605.5 L843.8 597.4Z" fill="#cc8cfe" stroke="#cc8cfe" stroke-width="0.4"/><path d="M843.8 597.4 L837.7 605.5 L838.2 606.5 L844.3 598.4Z" fill="#b580dd" stroke="#b580dd" stroke-width="0.4"/><path d="M844.3 598.4 L838.2 606.5 L838.3 607.4 L844.4 599.2Z" fill="#9872b5" stroke="#9872b5" stroke-width="0.4"/><path d="M834.4 601.1 L828.0 608.7 L829.1 609.5 L835.6 601.8Z" fill="#e096ff" stroke="#e096ff" stroke-width="0.4"/><path d="M835.6 601.8 L829.1 609.5 L830.1 610.5 L836.7 602.7Z" fill="#e498ff" stroke="#e498ff" stroke-width="0.4"/><path d="M836.7 602.7 L830.1 610.5 L831.0 611.5 L837.6 603.7Z" fill="#dd94ff" stroke="#dd94ff" stroke-width="0.4"/><path d="M837.6 603.7 L831.0 611.5 L831.7 612.6 L838.3 604.7Z" fill="#ce8dff" stroke="#ce8dff" stroke-width="0.4"/><path d="M838.3 604.7 L831.7 612.6 L832.2 613.6 L838.8 605.7Z" fill="#b681e1" stroke="#b681e1" stroke-width="0.4"/><path d="M838.8 605.7 L832.2 613.6 L832.4 614.5 L839.0 606.5Z" fill="#9872b6" stroke="#9872b6" stroke-width="0.4"/><path d="M828.6 608.0 L821.7 615.4 L822.7 616.3 L829.8 608.8Z" fill="#e196ff" stroke="#e196ff" stroke-width="0.4"/><path d="M829.8 608.8 L822.7 616.3 L823.7 617.3 L830.8 609.7Z" fill="#e598ff" stroke="#e598ff" stroke-width="0.4"/><path d="M830.8 609.7 L823.7 617.3 L824.6 618.3 L831.7 610.7Z" fill="#df96ff" stroke="#df96ff" stroke-width="0.4"/><path d="M831.7 610.7 L824.6 618.3 L825.3 619.4 L832.4 611.8Z" fill="#d08eff" stroke="#d08eff" stroke-width="0.4"/><path d="M832.4 611.8 L825.3 619.4 L825.8 620.4 L832.9 612.8Z" fill="#b982e4" stroke="#b982e4" stroke-width="0.4"/><path d="M832.9 612.8 L825.8 620.4 L825.9 621.3 L833.1 613.7Z" fill="#9a73ba" stroke="#9a73ba" stroke-width="0.4"/><path d="M822.4 614.7 L815.0 621.8 L816.0 622.7 L823.5 615.5Z" fill="#e297ff" stroke="#e297ff" stroke-width="0.4"/><path d="M823.5 615.5 L816.0 622.7 L816.9 623.8 L824.5 616.5Z" fill="#e799ff" stroke="#e799ff" stroke-width="0.4"/><path d="M824.5 616.5 L816.9 623.8 L817.8 624.9 L825.4 617.6Z" fill="#e297ff" stroke="#e297ff" stroke-width="0.4"/><path d="M825.4 617.6 L817.8 624.9 L818.4 626.0 L826.1 618.6Z" fill="#d38fff" stroke="#d38fff" stroke-width="0.4"/><path d="M826.1 618.6 L818.4 626.0 L818.9 627.1 L826.5 619.7Z" fill="#bc84e9" stroke="#bc84e9" stroke-width="0.4"/><path d="M826.5 619.7 L818.9 627.1 L819.0 628.0 L826.7 620.6Z" fill="#9d75be" stroke="#9d75be" stroke-width="0.4"/><path d="M815.7 621.1 L807.8 628.0 L808.8 629.0 L816.8 622.0Z" fill="#e297ff" stroke="#e297ff" stroke-width="0.4"/><path d="M816.8 622.0 L808.8 629.0 L809.7 630.0 L817.7 623.0Z" fill="#e89aff" stroke="#e89aff" stroke-width="0.4"/><path d="M817.7 623.0 L809.7 630.0 L810.5 631.2 L818.6 624.2Z" fill="#e498ff" stroke="#e498ff" stroke-width="0.4"/><path d="M818.6 624.2 L810.5 631.2 L811.1 632.4 L819.2 625.3Z" fill="#d591ff" stroke="#d591ff" stroke-width="0.4"/><path d="M819.2 625.3 L811.1 632.4 L811.5 633.4 L819.7 626.3Z" fill="#be85ed" stroke="#be85ed" stroke-width="0.4"/><path d="M819.7 626.3 L811.5 633.4 L811.7 634.3 L819.8 627.2Z" fill="#a076c2" stroke="#a076c2" stroke-width="0.4"/><path d="M808.7 627.3 L800.3 633.9 L801.2 634.9 L809.6 628.3Z" fill="#e397ff" stroke="#e397ff" stroke-width="0.4"/><path d="M809.6 628.3 L801.2 634.9 L802.1 636.0 L810.6 629.3Z" fill="#ea9bff" stroke="#ea9bff" stroke-width="0.4"/><path d="M810.6 629.3 L802.1 636.0 L802.8 637.2 L811.4 630.5Z" fill="#e699ff" stroke="#e699ff" stroke-width="0.4"/><path d="M811.4 630.5 L802.8 637.2 L803.4 638.4 L812.0 631.6Z" fill="#d892ff" stroke="#d892ff" stroke-width="0.4"/><path d="M812.0 631.6 L803.4 638.4 L803.8 639.5 L812.4 632.7Z" fill="#c186f0" stroke="#c186f0" stroke-width="0.4"/><path d="M812.4 632.7 L803.8 639.5 L804.0 640.4 L812.6 633.6Z" fill="#a377c6" stroke="#a377c6" stroke-width="0.4"/><path d="M801.2 633.2 L792.4 639.5 L793.2 640.5 L802.1 634.2Z" fill="#e398ff" stroke="#e398ff" stroke-width="0.4"/><path d="M802.1 634.2 L793.2 640.5 L794.0 641.7 L803.0 635.4Z" fill="#ec9cff" stroke="#ec9cff" stroke-width="0.4"/><path d="M803.0 635.4 L794.0 641.7 L794.8 642.9 L803.7 636.5Z" fill="#e89aff" stroke="#e89aff" stroke-width="0.4"/><path d="M803.7 636.5 L794.8 642.9 L795.3 644.1 L804.3 637.7Z" fill="#da93ff" stroke="#da93ff" stroke-width="0.4"/><path d="M804.3 637.7 L795.3 644.1 L795.7 645.2 L804.7 638.8Z" fill="#c488f4" stroke="#c488f4" stroke-width="0.4"/><path d="M804.7 638.8 L795.7 645.2 L795.9 646.1 L804.9 639.7Z" fill="#a679ca" stroke="#a679ca" stroke-width="0.4"/><path d="M793.3 638.9 L784.1 644.7 L784.9 645.8 L794.2 639.9Z" fill="#e498ff" stroke="#e498ff" stroke-width="0.4"/><path d="M794.2 639.9 L784.9 645.8 L785.7 647.0 L795.0 641.1Z" fill="#ee9eff" stroke="#ee9eff" stroke-width="0.4"/><path d="M795.0 641.1 L785.7 647.0 L786.3 648.3 L795.7 642.3Z" fill="#ea9bff" stroke="#ea9bff" stroke-width="0.4"/><path d="M795.7 642.3 L786.3 648.3 L786.9 649.5 L796.3 643.5Z" fill="#dc94ff" stroke="#dc94ff" stroke-width="0.4"/><path d="M796.3 643.5 L786.9 649.5 L787.2 650.6 L796.6 644.6Z" fill="#c689f7" stroke="#c689f7" stroke-width="0.4"/><path d="M796.6 644.6 L787.2 650.6 L787.4 651.5 L796.8 645.5Z" fill="#a87acd" stroke="#a87acd" stroke-width="0.4"/><path d="M785.1 644.1 L775.5 649.6 L776.2 650.8 L785.9 645.2Z" fill="#e498ff" stroke="#e498ff" stroke-width="0.4"/><path d="M785.9 645.2 L776.2 650.8 L776.9 652.0 L786.6 646.4Z" fill="#f1a0ff" stroke="#f1a0ff" stroke-width="0.4"/><path d="M786.6 646.4 L776.9 652.0 L777.6 653.3 L787.3 647.7Z" fill="#ec9dff" stroke="#ec9dff" stroke-width="0.4"/><path d="M787.3 647.7 L777.6 653.3 L778.0 654.6 L787.8 648.9Z" fill="#de95ff" stroke="#de95ff" stroke-width="0.4"/><path d="M787.8 648.9 L778.0 654.6 L778.4 655.7 L788.2 650.0Z" fill="#c88afa" stroke="#c88afa" stroke-width="0.4"/><path d="M788.2 650.0 L778.4 655.7 L778.5 656.6 L788.4 650.9Z" fill="#aa7bd0" stroke="#aa7bd0" stroke-width="0.4"/><path d="M776.5 649.1 L766.6 654.2 L767.3 655.3 L777.2 650.2Z" fill="#e598ff" stroke="#e598ff" stroke-width="0.4"/><path d="M777.2 650.2 L767.3 655.3 L767.9 656.6 L777.9 651.5Z" fill="#f5a4ff" stroke="#f5a4ff" stroke-width="0.4"/><path d="M777.9 651.5 L767.9 656.6 L768.5 658.0 L778.6 652.7Z" fill="#f0a0ff" stroke="#f0a0ff" stroke-width="0.4"/><path d="M778.6 652.7 L768.5 658.0 L768.9 659.2 L779.1 654.0Z" fill="#df95ff" stroke="#df95ff" stroke-width="0.4"/><path d="M779.1 654.0 L768.9 659.2 L769.2 660.4 L779.4 655.1Z" fill="#ca8bfd" stroke="#ca8bfd" stroke-width="0.4"/><path d="M779.4 655.1 L769.2 660.4 L769.4 661.3 L779.6 656.0Z" fill="#ac7cd3" stroke="#ac7cd3" stroke-width="0.4"/><path d="M767.6 653.7 L757.4 658.4 L758.0 659.5 L768.3 654.8Z" fill="#e598ff" stroke="#e598ff" stroke-width="0.4"/><path d="M768.3 654.8 L758.0 659.5 L758.6 660.9 L768.9 656.1Z" fill="#faa9ff" stroke="#faa9ff" stroke-width="0.4"/><path d="M768.9 656.1 L758.6 660.9 L759.1 662.2 L769.5 657.4Z" fill="#f6a6ff" stroke="#f6a6ff" stroke-width="0.4"/><path d="M769.5 657.4 L759.1 662.2 L759.5 663.5 L770.0 658.7Z" fill="#e196ff" stroke="#e196ff" stroke-width="0.4"/><path d="M770.0 658.7 L759.5 663.5 L759.8 664.7 L770.3 659.8Z" fill="#cb8cff" stroke="#cb8cff" stroke-width="0.4"/><path d="M770.3 659.8 L759.8 664.7 L760.0 665.6 L770.5 660.8Z" fill="#ae7dd5" stroke="#ae7dd5" stroke-width="0.4"/><path d="M758.5 657.9 L748.0 662.1 L748.5 663.4 L759.1 659.1Z" fill="#e599ff" stroke="#e599ff" stroke-width="0.4"/><path d="M759.1 659.1 L748.5 663.4 L749.0 664.7 L759.7 660.4Z" fill="#ffaeff" stroke="#ffaeff" stroke-width="0.4"/><path d="M759.7 660.4 L749.0 664.7 L749.5 666.1 L760.2 661.7Z" fill="#feadff" stroke="#feadff" stroke-width="0.4"/><path d="M760.2 661.7 L749.5 666.1 L749.8 667.4 L760.6 663.0Z" fill="#e297ff" stroke="#e297ff" stroke-width="0.4"/><path d="M760.6 663.0 L749.8 667.4 L750.1 668.5 L760.9 664.2Z" fill="#cd8cff" stroke="#cd8cff" stroke-width="0.4"/><path d="M760.9 664.2 L750.1 668.5 L750.3 669.5 L761.0 665.1Z" fill="#af7ed7" stroke="#af7ed7" stroke-width="0.4"/><path d="M749.1 661.7 L738.3 665.5 L738.8 666.7 L749.6 662.9Z" fill="#e699ff" stroke="#e699ff" stroke-width="0.4"/><path d="M749.6 662.9 L738.8 666.7 L739.2 668.1 L750.1 664.3Z" fill="#ffb5ff" stroke="#ffb5ff" stroke-width="0.4"/><path d="M750.1 664.3 L739.2 668.1 L739.6 669.5 L750.6 665.6Z" fill="#ffb7ff" stroke="#ffb7ff" stroke-width="0.4"/><path d="M750.6 665.6 L739.6 669.5 L739.9 670.8 L751.0 667.0Z" fill="#e397ff" stroke="#e397ff" stroke-width="0.4"/><path d="M751.0 667.0 L739.9 670.8 L740.2 672.0 L751.2 668.1Z" fill="#ce8dff" stroke="#ce8dff" stroke-width="0.4"/><path d="M751.2 668.1 L740.2 672.0 L740.3 672.9 L751.4 669.0Z" fill="#b07ed9" stroke="#b07ed9" stroke-width="0.4"/><path d="M739.4 665.1 L728.5 668.4 L728.8 669.7 L739.9 666.4Z" fill="#e699ff" stroke="#e699ff" stroke-width="0.4"/><path d="M739.9 666.4 L728.8 669.7 L729.2 671.1 L740.3 667.7Z" fill="#ffbcff" stroke="#ffbcff" stroke-width="0.4"/><path d="M740.3 667.7 L729.2 671.1 L729.6 672.5 L740.7 669.1Z" fill="#ffc3ff" stroke="#ffc3ff" stroke-width="0.4"/><path d="M740.7 669.1 L729.6 672.5 L729.9 673.9 L741.1 670.5Z" fill="#e498ff" stroke="#e498ff" stroke-width="0.4"/><path d="M741.1 670.5 L729.9 673.9 L730.1 675.0 L741.3 671.6Z" fill="#cf8dff" stroke="#cf8dff" stroke-width="0.4"/><path d="M741.3 671.6 L730.1 675.0 L730.2 676.0 L741.5 672.6Z" fill="#b17fda" stroke="#b17fda" stroke-width="0.4"/><path d="M729.6 668.1 L718.5 671.0 L718.8 672.3 L730.0 669.4Z" fill="#e699ff" stroke="#e699ff" stroke-width="0.4"/><path d="M730.0 669.4 L718.8 672.3 L719.1 673.7 L730.4 670.8Z" fill="#ffc1ff" stroke="#ffc1ff" stroke-width="0.4"/><path d="M730.4 670.8 L719.1 673.7 L719.3 675.1 L730.7 672.2Z" fill="#ffceff" stroke="#ffceff" stroke-width="0.4"/><path d="M730.7 672.2 L719.3 675.1 L719.6 676.4 L731.0 673.5Z" fill="#e498ff" stroke="#e498ff" stroke-width="0.4"/><path d="M731.0 673.5 L719.6 676.4 L719.8 677.6 L731.2 674.7Z" fill="#cf8eff" stroke="#cf8eff" stroke-width="0.4"/><path d="M731.2 674.7 L719.8 677.6 L719.9 678.6 L731.4 675.7Z" fill="#b27fdb" stroke="#b27fdb" stroke-width="0.4"/><path d="M719.6 670.7 L708.3 673.0 L708.5 674.3 L719.9 672.0Z" fill="#e699ff" stroke="#e699ff" stroke-width="0.4"/><path d="M719.9 672.0 L708.5 674.3 L708.8 675.8 L720.2 673.4Z" fill="#ffc6ff" stroke="#ffc6ff" stroke-width="0.4"/><path d="M720.2 673.4 L708.8 675.8 L709.0 677.2 L720.5 674.8Z" fill="#ffd7ff" stroke="#ffd7ff" stroke-width="0.4"/><path d="M720.5 674.8 L709.0 677.2 L709.2 678.6 L720.8 676.2Z" fill="#e598ff" stroke="#e598ff" stroke-width="0.4"/><path d="M720.8 676.2 L709.2 678.6 L709.4 679.8 L721.0 677.4Z" fill="#d08eff" stroke="#d08eff" stroke-width="0.4"/><path d="M721.0 677.4 L709.4 679.8 L709.5 680.7 L721.1 678.3Z" fill="#b27fdc" stroke="#b27fdc" stroke-width="0.4"/><path d="M709.5 672.8 L698.1 674.7 L698.2 676.0 L709.7 674.1Z" fill="#e699ff" stroke="#e699ff" stroke-width="0.4"/><path d="M709.7 674.1 L698.2 676.0 L698.4 677.4 L710.0 675.5Z" fill="#ffc7ff" stroke="#ffc7ff" stroke-width="0.4"/><path d="M710.0 675.5 L698.4 677.4 L698.6 678.9 L710.2 677.0Z" fill="#ffdaff" stroke="#ffdaff" stroke-width="0.4"/><path d="M710.2 677.0 L698.6 678.9 L698.7 680.2 L710.4 678.4Z" fill="#e598ff" stroke="#e598ff" stroke-width="0.4"/><path d="M710.4 678.4 L698.7 680.2 L698.9 681.4 L710.6 679.5Z" fill="#d08eff" stroke="#d08eff" stroke-width="0.4"/><path d="M710.6 679.5 L698.9 681.4 L699.0 682.4 L710.7 680.5Z" fill="#b37fdc" stroke="#b37fdc" stroke-width="0.4"/><path d="M699.3 674.5 L687.8 675.8 L687.9 677.1 L699.4 675.8Z" fill="#e699ff" stroke="#e699ff" stroke-width="0.4"/><path d="M699.4 675.8 L687.9 677.1 L688.0 678.6 L699.6 677.2Z" fill="#ffc6ff" stroke="#ffc6ff" stroke-width="0.4"/><path d="M699.6 677.2 L688.0 678.6 L688.1 680.1 L699.8 678.7Z" fill="#ffd8ff" stroke="#ffd8ff" stroke-width="0.4"/><path d="M699.8 678.7 L688.1 680.1 L688.2 681.4 L699.9 680.1Z" fill="#e598ff" stroke="#e598ff" stroke-width="0.4"/><path d="M699.9 680.1 L688.2 681.4 L688.3 682.6 L700.1 681.3Z" fill="#d08eff" stroke="#d08eff" stroke-width="0.4"/><path d="M700.1 681.3 L688.3 682.6 L688.4 683.6 L700.2 682.2Z" fill="#b27fdc" stroke="#b27fdc" stroke-width="0.4"/><path d="M689.0 675.7 L677.5 676.5 L677.5 677.9 L689.1 677.0Z" fill="#e699ff" stroke="#e699ff" stroke-width="0.4"/><path d="M689.1 677.0 L677.5 677.9 L677.5 679.3 L689.2 678.5Z" fill="#ffc3ff" stroke="#ffc3ff" stroke-width="0.4"/><path d="M689.2 678.5 L677.5 679.3 L677.5 680.8 L689.3 679.9Z" fill="#ffd1ff" stroke="#ffd1ff" stroke-width="0.4"/><path d="M689.3 679.9 L677.5 680.8 L677.6 682.2 L689.4 681.3Z" fill="#e598ff" stroke="#e598ff" stroke-width="0.4"/><path d="M689.4 681.3 L677.6 682.2 L677.7 683.4 L689.5 682.5Z" fill="#cf8eff" stroke="#cf8eff" stroke-width="0.4"/><path d="M689.5 682.5 L677.7 683.4 L677.8 684.3 L689.6 683.5Z" fill="#b27fdb" stroke="#b27fdb" stroke-width="0.4"/><path d="M678.7 676.5 L667.2 676.8 L667.1 678.1 L678.7 677.8Z" fill="#e699ff" stroke="#e699ff" stroke-width="0.4"/><path d="M678.7 677.8 L667.1 678.1 L667.0 679.6 L678.7 679.3Z" fill="#ffbdff" stroke="#ffbdff" stroke-width="0.4"/><path d="M678.7 679.3 L667.0 679.6 L667.0 681.0 L678.8 680.7Z" fill="#ffc6ff" stroke="#ffc6ff" stroke-width="0.4"/><path d="M678.8 680.7 L667.0 681.0 L667.1 682.4 L678.8 682.1Z" fill="#e498ff" stroke="#e498ff" stroke-width="0.4"/><path d="M678.8 682.1 L667.1 682.4 L667.1 683.6 L678.9 683.3Z" fill="#cf8dff" stroke="#cf8dff" stroke-width="0.4"/><path d="M678.9 683.3 L667.1 683.6 L667.2 684.5 L679.0 684.2Z" fill="#b17fdb" stroke="#b17fdb" stroke-width="0.4"/><path d="M668.4 676.8 L656.9 676.5 L656.8 677.9 L668.3 678.1Z" fill="#e699ff" stroke="#e699ff" stroke-width="0.4"/><path d="M668.3 678.1 L656.8 677.9 L656.6 679.3 L668.2 679.5Z" fill="#ffb7ff" stroke="#ffb7ff" stroke-width="0.4"/><path d="M668.2 679.5 L656.6 679.3 L656.6 680.8 L668.2 681.0Z" fill="#ffbaff" stroke="#ffbaff" stroke-width="0.4"/><path d="M668.2 681.0 L656.6 680.8 L656.5 682.2 L668.3 682.4Z" fill="#e397ff" stroke="#e397ff" stroke-width="0.4"/><path d="M668.3 682.4 L656.5 682.2 L656.6 683.4 L668.3 683.6Z" fill="#ce8dff" stroke="#ce8dff" stroke-width="0.4"/><path d="M668.3 683.6 L656.6 683.4 L656.7 684.3 L668.4 684.5Z" fill="#b17ed9" stroke="#b17ed9" stroke-width="0.4"/><path d="M658.1 676.6 L646.8 675.8 L646.5 677.2 L658.0 677.9Z" fill="#e699ff" stroke="#e699ff" stroke-width="0.4"/><path d="M658.0 677.9 L646.5 677.2 L646.3 678.6 L657.8 679.4Z" fill="#ffb0ff" stroke="#ffb0ff" stroke-width="0.4"/><path d="M657.8 679.4 L646.3 678.6 L646.2 680.1 L657.8 680.8Z" fill="#ffb0ff" stroke="#ffb0ff" stroke-width="0.4"/><path d="M657.8 680.8 L646.2 680.1 L646.1 681.5 L657.7 682.2Z" fill="#e297ff" stroke="#e297ff" stroke-width="0.4"/><path d="M657.7 682.2 L646.1 681.5 L646.1 682.7 L657.8 683.4Z" fill="#cd8cff" stroke="#cd8cff" stroke-width="0.4"/><path d="M657.8 683.4 L646.1 682.7 L646.2 683.6 L657.9 684.4Z" fill="#af7ed8" stroke="#af7ed8" stroke-width="0.4"/><path d="M647.9 675.9 L636.7 674.7 L636.4 676.0 L647.7 677.3Z" fill="#e598ff" stroke="#e598ff" stroke-width="0.4"/><path d="M647.7 677.3 L636.4 676.0 L636.1 677.5 L647.5 678.7Z" fill="#fbaaff" stroke="#fbaaff" stroke-width="0.4"/><path d="M647.5 678.7 L636.1 677.5 L635.9 678.9 L647.4 680.2Z" fill="#f8a7ff" stroke="#f8a7ff" stroke-width="0.4"/><path d="M647.4 680.2 L635.9 678.9 L635.8 680.3 L647.3 681.6Z" fill="#e196ff" stroke="#e196ff" stroke-width="0.4"/><path d="M647.3 681.6 L635.8 680.3 L635.8 681.5 L647.3 682.8Z" fill="#cc8cff" stroke="#cc8cff" stroke-width="0.4"/><path d="M647.3 682.8 L635.8 681.5 L635.9 682.4 L647.4 683.7Z" fill="#ae7dd6" stroke="#ae7dd6" stroke-width="0.4"/><path d="M637.8 674.9 L626.8 673.1 L626.4 674.4 L637.5 676.2Z" fill="#e598ff" stroke="#e598ff" stroke-width="0.4"/><path d="M637.5 676.2 L626.4 674.4 L626.0 675.8 L637.3 677.6Z" fill="#f6a5ff" stroke="#f6a5ff" stroke-width="0.4"/><path d="M637.3 677.6 L626.0 675.8 L625.8 677.3 L637.1 679.1Z" fill="#f2a2ff" stroke="#f2a2ff" stroke-width="0.4"/><path d="M637.1 679.1 L625.8 677.3 L625.6 678.6 L637.0 680.4Z" fill="#e096ff" stroke="#e096ff" stroke-width="0.4"/><path d="M637.0 680.4 L625.6 678.6 L625.6 679.8 L637.0 681.6Z" fill="#ca8bfd" stroke="#ca8bfd" stroke-width="0.4"/><path d="M637.0 681.6 L625.6 679.8 L625.7 680.8 L637.0 682.6Z" fill="#ac7cd3" stroke="#ac7cd3" stroke-width="0.4"/><path d="M627.9 673.3 L617.0 671.0 L616.5 672.3 L627.5 674.6Z" fill="#e598ff" stroke="#e598ff" stroke-width="0.4"/><path d="M627.5 674.6 L616.5 672.3 L616.1 673.7 L627.2 676.0Z" fill="#f2a1ff" stroke="#f2a1ff" stroke-width="0.4"/><path d="M627.2 676.0 L616.1 673.7 L615.8 675.2 L626.9 677.5Z" fill="#ed9eff" stroke="#ed9eff" stroke-width="0.4"/><path d="M626.9 677.5 L615.8 675.2 L615.6 676.5 L626.8 678.9Z" fill="#de95ff" stroke="#de95ff" stroke-width="0.4"/><path d="M626.8 678.9 L615.6 676.5 L615.6 677.7 L626.7 680.0Z" fill="#c88afb" stroke="#c88afb" stroke-width="0.4"/><path d="M626.7 680.0 L615.6 677.7 L615.6 678.6 L626.8 681.0Z" fill="#ab7bd1" stroke="#ab7bd1" stroke-width="0.4"/><path d="M618.1 671.3 L607.5 668.5 L606.9 669.8 L617.7 672.6Z" fill="#e498ff" stroke="#e498ff" stroke-width="0.4"/><path d="M617.7 672.6 L606.9 669.8 L606.4 671.2 L617.2 674.0Z" fill="#ef9fff" stroke="#ef9fff" stroke-width="0.4"/><path d="M617.2 674.0 L606.4 671.2 L606.1 672.6 L616.9 675.4Z" fill="#ea9bff" stroke="#ea9bff" stroke-width="0.4"/><path d="M616.9 675.4 L606.1 672.6 L605.8 674.0 L616.8 676.8Z" fill="#dc94ff" stroke="#dc94ff" stroke-width="0.4"/><path d="M616.8 676.8 L605.8 674.0 L605.8 675.1 L616.7 678.0Z" fill="#c689f8" stroke="#c689f8" stroke-width="0.4"/><path d="M616.7 678.0 L605.8 675.1 L605.8 676.1 L616.8 678.9Z" fill="#a97ace" stroke="#a97ace" stroke-width="0.4"/><path d="M608.6 668.8 L598.2 665.6 L597.6 666.9 L608.0 670.1Z" fill="#e498ff" stroke="#e498ff" stroke-width="0.4"/><path d="M608.0 670.1 L597.6 666.9 L597.0 668.2 L607.5 671.5Z" fill="#ec9dff" stroke="#ec9dff" stroke-width="0.4"/><path d="M607.5 671.5 L597.0 668.2 L596.6 669.6 L607.2 672.9Z" fill="#e89aff" stroke="#e89aff" stroke-width="0.4"/><path d="M607.2 672.9 L596.6 669.6 L596.3 670.9 L607.0 674.3Z" fill="#da93ff" stroke="#da93ff" stroke-width="0.4"/><path d="M607.0 674.3 L596.3 670.9 L596.2 672.1 L606.9 675.5Z" fill="#c488f5" stroke="#c488f5" stroke-width="0.4"/><path d="M606.9 675.5 L596.2 672.1 L596.3 673.0 L607.0 676.4Z" fill="#a679cb" stroke="#a679cb" stroke-width="0.4"/><path d="M599.2 666.0 L589.2 662.3 L588.5 663.5 L598.6 667.2Z" fill="#e397ff" stroke="#e397ff" stroke-width="0.4"/><path d="M598.6 667.2 L588.5 663.5 L587.8 664.8 L598.1 668.6Z" fill="#ea9bff" stroke="#ea9bff" stroke-width="0.4"/><path d="M598.1 668.6 L587.8 664.8 L587.4 666.2 L597.7 670.0Z" fill="#e699ff" stroke="#e699ff" stroke-width="0.4"/><path d="M597.7 670.0 L587.4 666.2 L587.1 667.5 L597.4 671.3Z" fill="#d892ff" stroke="#d892ff" stroke-width="0.4"/><path d="M597.4 671.3 L587.1 667.5 L586.9 668.7 L597.3 672.5Z" fill="#c287f1" stroke="#c287f1" stroke-width="0.4"/><path d="M597.3 672.5 L586.9 668.7 L587.0 669.6 L597.4 673.4Z" fill="#a478c7" stroke="#a478c7" stroke-width="0.4"/><path d="M590.2 662.7 L580.4 658.5 L579.7 659.7 L589.5 663.9Z" fill="#e397ff" stroke="#e397ff" stroke-width="0.4"/><path d="M589.5 663.9 L579.7 659.7 L579.0 661.0 L588.9 665.2Z" fill="#e99aff" stroke="#e99aff" stroke-width="0.4"/><path d="M588.9 665.2 L579.0 661.0 L578.5 662.3 L588.4 666.6Z" fill="#e498ff" stroke="#e498ff" stroke-width="0.4"/><path d="M588.4 666.6 L578.5 662.3 L578.1 663.6 L588.1 667.9Z" fill="#d691ff" stroke="#d691ff" stroke-width="0.4"/><path d="M588.1 667.9 L578.1 663.6 L578.0 664.8 L588.0 669.1Z" fill="#bf85ee" stroke="#bf85ee" stroke-width="0.4"/><path d="M588.0 669.1 L578.0 664.8 L578.0 665.7 L588.1 670.0Z" fill="#a176c3" stroke="#a176c3" stroke-width="0.4"/><path d="M581.4 658.9 L572.0 654.3 L571.2 655.5 L580.6 660.1Z" fill="#e297ff" stroke="#e297ff" stroke-width="0.4"/><path d="M580.6 660.1 L571.2 655.5 L570.5 656.8 L580.0 661.5Z" fill="#e799ff" stroke="#e799ff" stroke-width="0.4"/><path d="M580.0 661.5 L570.5 656.8 L569.9 658.1 L579.5 662.8Z" fill="#e297ff" stroke="#e297ff" stroke-width="0.4"/><path d="M579.5 662.8 L569.9 658.1 L569.5 659.4 L579.1 664.1Z" fill="#d490ff" stroke="#d490ff" stroke-width="0.4"/><path d="M579.1 664.1 L569.5 659.4 L569.3 660.5 L579.0 665.3Z" fill="#bc84ea" stroke="#bc84ea" stroke-width="0.4"/><path d="M579.0 665.3 L569.3 660.5 L569.4 661.4 L579.0 666.2Z" fill="#9e75bf" stroke="#9e75bf" stroke-width="0.4"/><path d="M573.0 654.8 L563.9 649.8 L563.1 650.9 L572.1 656.0Z" fill="#e196ff" stroke="#e196ff" stroke-width="0.4"/><path d="M572.1 656.0 L563.1 650.9 L562.3 652.2 L571.4 657.3Z" fill="#e699ff" stroke="#e699ff" stroke-width="0.4"/><path d="M571.4 657.3 L562.3 652.2 L561.7 653.5 L570.8 658.6Z" fill="#e096ff" stroke="#e096ff" stroke-width="0.4"/><path d="M570.8 658.6 L561.7 653.5 L561.2 654.7 L570.5 659.9Z" fill="#d18eff" stroke="#d18eff" stroke-width="0.4"/><path d="M570.5 659.9 L561.2 654.7 L561.1 655.8 L570.3 661.0Z" fill="#b983e5" stroke="#b983e5" stroke-width="0.4"/><path d="M570.3 661.0 L561.1 655.8 L561.1 656.7 L570.4 661.9Z" fill="#9b73bb" stroke="#9b73bb" stroke-width="0.4"/><path d="M564.9 650.3 L556.3 644.9 L555.3 646.0 L564.0 651.5Z" fill="#e196ff" stroke="#e196ff" stroke-width="0.4"/><path d="M564.0 651.5 L555.3 646.0 L554.5 647.2 L563.2 652.7Z" fill="#e498ff" stroke="#e498ff" stroke-width="0.4"/><path d="M563.2 652.7 L554.5 647.2 L553.8 648.5 L562.6 654.0Z" fill="#de95ff" stroke="#de95ff" stroke-width="0.4"/><path d="M562.6 654.0 L553.8 648.5 L553.4 649.7 L562.2 655.3Z" fill="#ce8dff" stroke="#ce8dff" stroke-width="0.4"/><path d="M562.2 655.3 L553.4 649.7 L553.2 650.8 L562.0 656.4Z" fill="#b681e1" stroke="#b681e1" stroke-width="0.4"/><path d="M562.0 656.4 L553.2 650.8 L553.2 651.7 L562.0 657.3Z" fill="#9772b6" stroke="#9772b6" stroke-width="0.4"/><path d="M557.1 645.5 L549.0 639.7 L548.0 640.7 L556.2 646.6Z" fill="#e096ff" stroke="#e096ff" stroke-width="0.4"/><path d="M556.2 646.6 L548.0 640.7 L547.1 641.9 L555.4 647.8Z" fill="#e397ff" stroke="#e397ff" stroke-width="0.4"/><path d="M555.4 647.8 L547.1 641.9 L546.4 643.1 L554.7 649.0Z" fill="#db94ff" stroke="#db94ff" stroke-width="0.4"/><path d="M554.7 649.0 L546.4 643.1 L545.9 644.3 L554.2 650.3Z" fill="#cb8bff" stroke="#cb8bff" stroke-width="0.4"/><path d="M554.2 650.3 L545.9 644.3 L545.7 645.4 L554.0 651.4Z" fill="#b37fdc" stroke="#b37fdc" stroke-width="0.4"/><path d="M554.0 651.4 L545.7 645.4 L545.7 646.3 L554.1 652.3Z" fill="#9470b1" stroke="#9470b1" stroke-width="0.4"/><path d="M549.8 640.3 L542.1 634.1 L541.0 635.1 L548.8 641.3Z" fill="#df95ff" stroke="#df95ff" stroke-width="0.4"/><path d="M548.8 641.3 L541.0 635.1 L540.1 636.2 L547.9 642.5Z" fill="#e196ff" stroke="#e196ff" stroke-width="0.4"/><path d="M547.9 642.5 L540.1 636.2 L539.4 637.4 L547.2 643.7Z" fill="#d992ff" stroke="#d992ff" stroke-width="0.4"/><path d="M547.2 643.7 L539.4 637.4 L538.9 638.6 L546.7 644.9Z" fill="#c88afa" stroke="#c88afa" stroke-width="0.4"/><path d="M546.7 644.9 L538.9 638.6 L538.6 639.7 L546.5 646.0Z" fill="#af7ed7" stroke="#af7ed7" stroke-width="0.4"/><path d="M546.5 646.0 L538.6 639.7 L538.7 640.6 L546.6 646.9Z" fill="#906eac" stroke="#906eac" stroke-width="0.4"/><path d="M542.9 634.7 L535.7 628.2 L534.6 629.2 L541.8 635.7Z" fill="#de95ff" stroke="#de95ff" stroke-width="0.4"/><path d="M541.8 635.7 L534.6 629.2 L533.6 630.2 L540.9 636.9Z" fill="#df95ff" stroke="#df95ff" stroke-width="0.4"/><path d="M540.9 636.9 L533.6 630.2 L532.8 631.4 L540.2 638.1Z" fill="#d791ff" stroke="#d791ff" stroke-width="0.4"/><path d="M540.2 638.1 L532.8 631.4 L532.3 632.6 L539.6 639.3Z" fill="#c588f6" stroke="#c588f6" stroke-width="0.4"/><path d="M539.6 639.3 L532.3 632.6 L532.0 633.6 L539.4 640.3Z" fill="#ac7cd2" stroke="#ac7cd2" stroke-width="0.4"/><path d="M539.4 640.3 L532.0 633.6 L532.1 634.5 L539.5 641.2Z" fill="#8d6ca7" stroke="#8d6ca7" stroke-width="0.4"/><path d="M536.4 628.9 L529.7 622.1 L528.5 623.0 L535.3 629.9Z" fill="#de95ff" stroke="#de95ff" stroke-width="0.4"/><path d="M535.3 629.9 L528.5 623.0 L527.5 624.0 L534.3 630.9Z" fill="#dd95ff" stroke="#dd95ff" stroke-width="0.4"/><path d="M534.3 630.9 L527.5 624.0 L526.7 625.1 L533.5 632.1Z" fill="#d490ff" stroke="#d490ff" stroke-width="0.4"/><path d="M533.5 632.1 L526.7 625.1 L526.2 626.2 L533.0 633.3Z" fill="#c287f1" stroke="#c287f1" stroke-width="0.4"/><path d="M533.0 633.3 L526.2 626.2 L525.9 627.3 L532.8 634.3Z" fill="#a87acd" stroke="#a87acd" stroke-width="0.4"/><path d="M532.8 634.3 L525.9 627.3 L525.9 628.2 L532.8 635.2Z" fill="#896aa1" stroke="#896aa1" stroke-width="0.4"/><path d="M530.3 622.8 L524.2 615.6 L523.0 616.5 L529.2 623.7Z" fill="#dd94ff" stroke="#dd94ff" stroke-width="0.4"/><path d="M529.2 623.7 L523.0 616.5 L521.9 617.5 L528.2 624.7Z" fill="#dc94ff" stroke="#dc94ff" stroke-width="0.4"/><path d="M528.2 624.7 L521.9 617.5 L521.1 618.6 L527.4 625.8Z" fill="#d18eff" stroke="#d18eff" stroke-width="0.4"/><path d="M527.4 625.8 L521.1 618.6 L520.5 619.6 L526.8 627.0Z" fill="#be85ed" stroke="#be85ed" stroke-width="0.4"/><path d="M526.8 627.0 L520.5 619.6 L520.2 620.7 L526.6 628.0Z" fill="#a478c8" stroke="#a478c8" stroke-width="0.4"/><path d="M526.6 628.0 L520.2 620.7 L520.3 621.6 L526.6 628.9Z" fill="#85689b" stroke="#85689b" stroke-width="0.4"/><path d="M524.8 616.4 L519.1 609.0 L517.9 609.8 L523.6 617.2Z" fill="#dc94ff" stroke="#dc94ff" stroke-width="0.4"/><path d="M523.6 617.2 L517.9 609.8 L516.8 610.7 L522.5 618.2Z" fill="#da93ff" stroke="#da93ff" stroke-width="0.4"/><path d="M522.5 618.2 L516.8 610.7 L516.0 611.7 L521.7 619.3Z" fill="#ce8dff" stroke="#ce8dff" stroke-width="0.4"/><path d="M521.7 619.3 L516.0 611.7 L515.4 612.8 L521.1 620.4Z" fill="#bb83e8" stroke="#bb83e8" stroke-width="0.4"/><path d="M521.1 620.4 L515.4 612.8 L515.1 613.8 L520.8 621.4Z" fill="#a076c2" stroke="#a076c2" stroke-width="0.4"/><path d="M520.8 621.4 L515.1 613.8 L515.1 614.7 L520.9 622.3Z" fill="#806696" stroke="#806696" stroke-width="0.4"/><path d="M519.7 609.7 L514.6 602.1 L513.3 602.8 L518.5 610.5Z" fill="#db93ff" stroke="#db93ff" stroke-width="0.4"/><path d="M518.5 610.5 L513.3 602.8 L512.2 603.7 L517.4 611.5Z" fill="#d892ff" stroke="#d892ff" stroke-width="0.4"/><path d="M517.4 611.5 L512.2 603.7 L511.3 604.7 L516.5 612.5Z" fill="#cc8cff" stroke="#cc8cff" stroke-width="0.4"/><path d="M516.5 612.5 L511.3 604.7 L510.7 605.7 L515.9 613.6Z" fill="#b782e3" stroke="#b782e3" stroke-width="0.4"/><path d="M515.9 613.6 L510.7 605.7 L510.4 606.7 L515.6 614.6Z" fill="#9c74bd" stroke="#9c74bd" stroke-width="0.4"/><path d="M515.6 614.6 L510.4 606.7 L510.4 607.6 L515.7 615.5Z" fill="#7c6490" stroke="#7c6490" stroke-width="0.4"/><path d="M515.1 602.9 L510.5 595.0 L509.3 595.7 L513.8 603.6Z" fill="#da93ff" stroke="#da93ff" stroke-width="0.4"/><path d="M513.8 603.6 L509.3 595.7 L508.1 596.5 L512.7 604.5Z" fill="#d691ff" stroke="#d691ff" stroke-width="0.4"/><path d="M512.7 604.5 L508.1 596.5 L507.2 597.5 L511.8 605.5Z" fill="#c98afb" stroke="#c98afb" stroke-width="0.4"/><path d="M511.8 605.5 L507.2 597.5 L506.6 598.5 L511.2 606.6Z" fill="#b480de" stroke="#b480de" stroke-width="0.4"/><path d="M511.2 606.6 L506.6 598.5 L506.3 599.4 L510.9 607.5Z" fill="#9872b7" stroke="#9872b7" stroke-width="0.4"/><path d="M510.9 607.5 L506.3 599.4 L506.3 600.3 L510.9 608.4Z" fill="#78628a" stroke="#78628a" stroke-width="0.4"/><path d="M511.0 595.8 L507.0 587.8 L505.7 588.4 L509.7 596.5Z" fill="#d992ff" stroke="#d992ff" stroke-width="0.4"/><path d="M509.7 596.5 L505.7 588.4 L504.5 589.2 L508.6 597.4Z" fill="#d490ff" stroke="#d490ff" stroke-width="0.4"/><path d="M508.6 597.4 L504.5 589.2 L503.6 590.1 L507.7 598.3Z" fill="#c689f7" stroke="#c689f7" stroke-width="0.4"/><path d="M507.7 598.3 L503.6 590.1 L503.0 591.0 L507.0 599.3Z" fill="#b07ed8" stroke="#b07ed8" stroke-width="0.4"/><path d="M507.0 599.3 L503.0 591.0 L502.7 592.0 L506.7 600.3Z" fill="#9470b1" stroke="#9470b1" stroke-width="0.4"/><path d="M506.7 600.3 L502.7 592.0 L502.7 592.9 L506.7 601.2Z" fill="#746083" stroke="#746083" stroke-width="0.4"/><path d="M507.4 588.6 L504.0 580.4 L502.7 580.9 L506.1 589.2Z" fill="#d892ff" stroke="#d892ff" stroke-width="0.4"/><path d="M506.1 589.2 L502.7 580.9 L501.5 581.7 L504.9 590.0Z" fill="#d28fff" stroke="#d28fff" stroke-width="0.4"/><path d="M504.9 590.0 L501.5 581.7 L500.6 582.5 L504.0 590.9Z" fill="#c387f3" stroke="#c387f3" stroke-width="0.4"/><path d="M504.0 590.9 L500.6 582.5 L499.9 583.5 L503.4 591.9Z" fill="#ac7cd3" stroke="#ac7cd3" stroke-width="0.4"/><path d="M503.4 591.9 L499.9 583.5 L499.6 584.4 L503.0 592.9Z" fill="#906eab" stroke="#906eab" stroke-width="0.4"/><path d="M503.0 592.9 L499.6 584.4 L499.6 585.2 L503.1 593.7Z" fill="#6f5e7d" stroke="#6f5e7d" stroke-width="0.4"/><path d="M504.3 581.2 L501.5 572.8 L500.1 573.3 L503.0 581.8Z" fill="#d792ff" stroke="#d792ff" stroke-width="0.4"/><path d="M503.0 581.8 L500.1 573.3 L499.0 574.0 L501.8 582.5Z" fill="#d08eff" stroke="#d08eff" stroke-width="0.4"/><path d="M501.8 582.5 L499.0 574.0 L498.0 574.9 L500.9 583.4Z" fill="#c086ef" stroke="#c086ef" stroke-width="0.4"/><path d="M500.9 583.4 L498.0 574.9 L497.3 575.7 L500.2 584.3Z" fill="#a97ace" stroke="#a97ace" stroke-width="0.4"/><path d="M500.2 584.3 L497.3 575.7 L497.0 576.6 L499.9 585.3Z" fill="#8b6ca5" stroke="#8b6ca5" stroke-width="0.4"/><path d="M499.9 585.3 L497.0 576.6 L497.0 577.5 L499.9 586.1Z" fill="#6b5b77" stroke="#6b5b77" stroke-width="0.4"/><path d="M501.7 573.7 L499.5 565.2 L498.2 565.7 L500.4 574.2Z" fill="#d791ff" stroke="#d791ff" stroke-width="0.4"/><path d="M500.4 574.2 L498.2 565.7 L497.0 566.3 L499.2 574.9Z" fill="#ce8dff" stroke="#ce8dff" stroke-width="0.4"/><path d="M499.2 574.9 L497.0 566.3 L496.0 567.1 L498.3 575.7Z" fill="#bd84eb" stroke="#bd84eb" stroke-width="0.4"/><path d="M498.3 575.7 L496.0 567.1 L495.3 567.9 L497.6 576.6Z" fill="#a578c9" stroke="#a578c9" stroke-width="0.4"/><path d="M497.6 576.6 L495.3 567.9 L495.0 568.8 L497.3 577.5Z" fill="#876a9f" stroke="#876a9f" stroke-width="0.4"/><path d="M497.3 577.5 L495.0 568.8 L495.0 569.6 L497.3 578.4Z" fill="#665971" stroke="#665971" stroke-width="0.4"/><path d="M499.7 566.1 L498.0 557.5 L496.7 557.9 L498.4 566.5Z" fill="#d691ff" stroke="#d691ff" stroke-width="0.4"/><path d="M498.4 566.5 L496.7 557.9 L495.5 558.5 L497.2 567.2Z" fill="#cc8cff" stroke="#cc8cff" stroke-width="0.4"/><path d="M497.2 567.2 L495.5 558.5 L494.5 559.2 L496.2 568.0Z" fill="#bb83e7" stroke="#bb83e7" stroke-width="0.4"/><path d="M496.2 568.0 L494.5 559.2 L493.9 560.0 L495.5 568.8Z" fill="#a277c5" stroke="#a277c5" stroke-width="0.4"/><path d="M495.5 568.8 L493.9 560.0 L493.5 560.9 L495.2 569.7Z" fill="#85699b" stroke="#85699b" stroke-width="0.4"/><path d="M495.2 569.7 L493.5 560.9 L493.5 561.7 L495.2 570.5Z" fill="#64586e" stroke="#64586e" stroke-width="0.4"/><path d="M498.2 558.4 L497.1 549.7 L495.8 550.1 L496.8 558.8Z" fill="#d590ff" stroke="#d590ff" stroke-width="0.4"/><path d="M496.8 558.8 L495.8 550.1 L494.6 550.6 L495.6 559.4Z" fill="#cb8bfd" stroke="#cb8bfd" stroke-width="0.4"/><path d="M495.6 559.4 L494.6 550.6 L493.6 551.3 L494.7 560.1Z" fill="#b982e4" stroke="#b982e4" stroke-width="0.4"/><path d="M494.7 560.1 L493.6 551.3 L492.9 552.1 L494.0 560.9Z" fill="#a176c2" stroke="#a176c2" stroke-width="0.4"/><path d="M494.0 560.9 L492.9 552.1 L492.6 552.9 L493.7 561.8Z" fill="#84689a" stroke="#84689a" stroke-width="0.4"/><path d="M493.7 561.8 L492.6 552.9 L492.6 553.7 L493.7 562.6Z" fill="#65596e" stroke="#65596e" stroke-width="0.4"/><path d="M497.2 550.6 L496.7 541.9 L495.3 542.2 L495.8 551.0Z" fill="#d490ff" stroke="#d490ff" stroke-width="0.4"/><path d="M495.8 551.0 L495.3 542.2 L494.1 542.7 L494.6 551.5Z" fill="#ca8bfa" stroke="#ca8bfa" stroke-width="0.4"/><path d="M494.6 551.5 L494.1 542.7 L493.2 543.3 L493.7 552.2Z" fill="#b882e2" stroke="#b882e2" stroke-width="0.4"/><path d="M493.7 552.2 L493.2 543.3 L492.5 544.1 L493.0 553.0Z" fill="#a177c1" stroke="#a177c1" stroke-width="0.4"/><path d="M493.0 553.0 L492.5 544.1 L492.2 544.9 L492.7 553.8Z" fill="#86699b" stroke="#86699b" stroke-width="0.4"/><path d="M492.7 553.8 L492.2 544.9 L492.2 545.7 L492.7 554.6Z" fill="#685a72" stroke="#685a72" stroke-width="0.4"/><path d="M496.7 542.8 L496.8 534.1 L495.4 534.3 L495.4 543.1Z" fill="#d490ff" stroke="#d490ff" stroke-width="0.4"/><path d="M495.4 543.1 L495.4 534.3 L494.2 534.8 L494.2 543.6Z" fill="#c98af9" stroke="#c98af9" stroke-width="0.4"/><path d="M494.2 543.6 L494.2 534.8 L493.3 535.4 L493.2 544.2Z" fill="#b882e1" stroke="#b882e1" stroke-width="0.4"/><path d="M493.2 544.2 L493.3 535.4 L492.6 536.1 L492.5 545.0Z" fill="#a377c2" stroke="#a377c2" stroke-width="0.4"/><path d="M492.5 545.0 L492.6 536.1 L492.3 536.9 L492.2 545.8Z" fill="#896b9f" stroke="#896b9f" stroke-width="0.4"/><path d="M496.7 535.0 L497.4 526.3 L496.1 526.5 L495.4 535.2Z" fill="#d38fff" stroke="#d38fff" stroke-width="0.4"/><path d="M495.4 535.2 L496.1 526.5 L494.9 526.9 L494.2 535.7Z" fill="#c98af7" stroke="#c98af7" stroke-width="0.4"/><path d="M494.2 535.7 L494.9 526.9 L493.9 527.4 L493.2 536.3Z" fill="#b983e1" stroke="#b983e1" stroke-width="0.4"/><path d="M493.2 536.3 L493.9 527.4 L493.2 528.1 L492.6 537.0Z" fill="#a679c5" stroke="#a679c5" stroke-width="0.4"/><path d="M492.6 537.0 L493.2 528.1 L492.9 528.8 L492.2 537.8Z" fill="#8f6da5" stroke="#8f6da5" stroke-width="0.4"/><path d="M497.3 527.2 L498.5 518.6 L497.2 518.7 L496.0 527.4Z" fill="#d38fff" stroke="#d38fff" stroke-width="0.4"/><path d="M496.0 527.4 L497.2 518.7 L496.0 519.0 L494.8 527.8Z" fill="#c98bf7" stroke="#c98bf7" stroke-width="0.4"/><path d="M494.8 527.8 L496.0 519.0 L495.1 519.5 L493.8 528.3Z" fill="#bb84e3" stroke="#bb84e3" stroke-width="0.4"/><path d="M493.8 528.3 L495.1 519.5 L494.4 520.1 L493.1 529.0Z" fill="#aa7bca" stroke="#aa7bca" stroke-width="0.4"/><path d="M493.1 529.0 L494.4 520.1 L494.1 520.9 L492.8 529.8Z" fill="#9671ae" stroke="#9671ae" stroke-width="0.4"/><path d="M498.3 519.4 L500.1 510.8 L498.8 510.9 L497.0 519.6Z" fill="#d38fff" stroke="#d38fff" stroke-width="0.4"/><path d="M497.0 519.6 L498.8 510.9 L497.6 511.2 L495.8 519.9Z" fill="#ca8bf7" stroke="#ca8bf7" stroke-width="0.4"/><path d="M495.8 519.9 L497.6 511.2 L496.7 511.6 L494.9 520.4Z" fill="#be85e6" stroke="#be85e6" stroke-width="0.4"/><path d="M494.9 520.4 L496.7 511.6 L496.0 512.2 L494.2 521.0Z" fill="#af7dd0" stroke="#af7dd0" stroke-width="0.4"/><path d="M494.2 521.0 L496.0 512.2 L495.7 513.0 L493.9 521.8Z" fill="#9e75b9" stroke="#9e75b9" stroke-width="0.4"/><path d="M499.9 511.7 L502.2 503.2 L500.9 503.2 L498.6 511.8Z" fill="#d38fff" stroke="#d38fff" stroke-width="0.4"/><path d="M498.6 511.8 L500.9 503.2 L499.8 503.4 L497.4 512.0Z" fill="#cc8cf7" stroke="#cc8cf7" stroke-width="0.4"/><path d="M497.4 512.0 L499.8 503.4 L498.8 503.8 L496.5 512.5Z" fill="#c187e9" stroke="#c187e9" stroke-width="0.4"/><path d="M496.5 512.5 L498.8 503.8 L498.2 504.4 L495.8 513.1Z" fill="#b581d8" stroke="#b581d8" stroke-width="0.4"/><path d="M495.8 513.1 L498.2 504.4 L497.9 505.1 L495.5 513.9Z" fill="#a77ac4" stroke="#a77ac4" stroke-width="0.4"/><path d="M501.9 504.1 L504.7 495.7 L503.5 495.6 L500.6 504.1Z" fill="#d38fff" stroke="#d38fff" stroke-width="0.4"/><path d="M500.6 504.1 L503.5 495.6 L502.4 495.8 L499.5 504.3Z" fill="#cd8cf8" stroke="#cd8cf8" stroke-width="0.4"/><path d="M499.5 504.3 L502.4 495.8 L501.5 496.1 L498.6 504.7Z" fill="#c588ed" stroke="#c588ed" stroke-width="0.4"/><path d="M498.6 504.7 L501.5 496.1 L500.8 496.7 L497.9 505.3Z" fill="#bc84e0" stroke="#bc84e0" stroke-width="0.4"/><path d="M497.9 505.3 L500.8 496.7 L500.5 497.4 L497.6 506.0Z" fill="#b17fd1" stroke="#b17fd1" stroke-width="0.4"/><path d="M504.4 496.5 L507.7 488.2 L506.5 488.1 L503.2 496.5Z" fill="#d38fff" stroke="#d38fff" stroke-width="0.4"/><path d="M503.2 496.5 L506.5 488.1 L505.4 488.2 L502.0 496.6Z" fill="#cf8dfa" stroke="#cf8dfa" stroke-width="0.4"/><path d="M502.0 496.6 L505.4 488.2 L504.5 488.5 L501.1 497.0Z" fill="#c98af2" stroke="#c98af2" stroke-width="0.4"/><path d="M501.1 497.0 L504.5 488.5 L503.9 489.1 L500.5 497.5Z" fill="#c287e8" stroke="#c287e8" stroke-width="0.4"/><path d="M500.5 497.5 L503.9 489.1 L503.6 489.7 L500.2 498.2Z" fill="#bb83de" stroke="#bb83de" stroke-width="0.4"/><path d="M507.4 489.1 L511.2 480.9 L510.0 480.8 L506.1 489.0Z" fill="#d38fff" stroke="#d38fff" stroke-width="0.4"/><path d="M506.1 489.0 L510.0 480.8 L509.0 480.8 L505.1 489.1Z" fill="#d08efb" stroke="#d08efb" stroke-width="0.4"/><path d="M505.1 489.1 L509.0 480.8 L508.1 481.1 L504.2 489.4Z" fill="#cd8cf6" stroke="#cd8cf6" stroke-width="0.4"/><path d="M504.2 489.4 L508.1 481.1 L507.5 481.6 L503.5 489.9Z" fill="#c88af0" stroke="#c88af0" stroke-width="0.4"/><path d="M510.8 481.7 L515.1 473.8 L514.0 473.5 L509.6 481.6Z" fill="#d390ff" stroke="#d390ff" stroke-width="0.4"/><path d="M509.6 481.6 L514.0 473.5 L512.9 473.6 L508.5 481.7Z" fill="#d28ffd" stroke="#d28ffd" stroke-width="0.4"/><path d="M508.5 481.7 L512.9 473.6 L512.1 473.8 L507.7 481.9Z" fill="#d08efa" stroke="#d08efa" stroke-width="0.4"/><path d="M507.7 481.9 L512.1 473.8 L511.5 474.3 L507.1 482.4Z" fill="#ce8df7" stroke="#ce8df7" stroke-width="0.4"/><path d="M514.7 474.6 L519.5 466.8 L518.3 466.5 L513.5 474.4Z" fill="#d390ff" stroke="#d390ff" stroke-width="0.4"/><path d="M513.5 474.4 L518.3 466.5 L517.3 466.5 L512.4 474.4Z" fill="#d38ffe" stroke="#d38ffe" stroke-width="0.4"/><path d="M512.4 474.4 L517.3 466.5 L516.5 466.7 L511.6 474.6Z" fill="#d28ffd" stroke="#d28ffd" stroke-width="0.4"/><path d="M511.6 474.6 L516.5 466.7 L515.9 467.1 L511.0 475.1Z" fill="#d18ffc" stroke="#d18ffc" stroke-width="0.4"/><path d="M518.9 467.6 L524.2 460.0 L523.1 459.6 L517.8 467.3Z" fill="#d390ff" stroke="#d390ff" stroke-width="0.4"/><path d="M517.8 467.3 L523.1 459.6 L522.1 459.6 L516.8 467.3Z" fill="#d38fff" stroke="#d38fff" stroke-width="0.4"/><path d="M516.8 467.3 L522.1 459.6 L521.3 459.7 L516.0 467.5Z" fill="#d38fff" stroke="#d38fff" stroke-width="0.4"/><path d="M516.0 467.5 L521.3 459.7 L520.8 460.1 L515.4 467.9Z" fill="#d38fff" stroke="#d38fff" stroke-width="0.4"/><path d="M864.5 502.1 L865.3 510.6 L866.6 510.6 L865.8 502.1Z" fill="#d791ff" stroke="#d791ff" stroke-width="0.4"/><path d="M865.8 502.1 L866.6 510.6 L867.9 510.9 L867.1 502.3Z" fill="#d791ff" stroke="#d791ff" stroke-width="0.4"/><path d="M867.1 502.3 L867.9 510.9 L868.9 511.3 L868.1 502.7Z" fill="#d791ff" stroke="#d791ff" stroke-width="0.4"/><path d="M868.1 502.7 L868.9 511.3 L869.8 512.0 L869.0 503.2Z" fill="#d791ff" stroke="#d791ff" stroke-width="0.4"/><path d="M869.0 503.2 L869.8 512.0 L870.3 512.7 L869.5 503.9Z" fill="#d791ff" stroke="#d791ff" stroke-width="0.4"/><path d="M869.5 503.9 L870.3 512.7 L870.5 513.5 L869.7 504.7Z" fill="#d791ff" stroke="#d791ff" stroke-width="0.4"/><path d="M865.2 509.7 L865.4 518.3 L866.8 518.4 L866.6 509.7Z" fill="#d792ff" stroke="#d792ff" stroke-width="0.4"/><path d="M866.6 509.7 L866.8 518.4 L868.0 518.7 L867.8 510.0Z" fill="#d791ff" stroke="#d791ff" stroke-width="0.4"/><path d="M867.8 510.0 L868.0 518.7 L869.1 519.2 L868.9 510.4Z" fill="#d791ff" stroke="#d791ff" stroke-width="0.4"/><path d="M868.9 510.4 L869.1 519.2 L869.9 519.9 L869.7 511.1Z" fill="#d691fe" stroke="#d691fe" stroke-width="0.4"/><path d="M869.7 511.1 L869.9 519.9 L870.5 520.6 L870.2 511.8Z" fill="#d691fd" stroke="#d691fd" stroke-width="0.4"/><path d="M870.2 511.8 L870.5 520.6 L870.7 521.4 L870.4 512.6Z" fill="#d590fc" stroke="#d590fc" stroke-width="0.4"/><path d="M865.5 517.4 L865.1 526.1 L866.4 526.2 L866.8 517.5Z" fill="#d892ff" stroke="#d892ff" stroke-width="0.4"/><path d="M866.8 517.5 L866.4 526.2 L867.7 526.6 L868.0 517.8Z" fill="#d791ff" stroke="#d791ff" stroke-width="0.4"/><path d="M868.0 517.8 L867.7 526.6 L868.8 527.1 L869.1 518.3Z" fill="#d691fe" stroke="#d691fe" stroke-width="0.4"/><path d="M869.1 518.3 L868.8 527.1 L869.6 527.8 L870.0 518.9Z" fill="#d590fc" stroke="#d590fc" stroke-width="0.4"/><path d="M870.0 518.9 L869.6 527.8 L870.1 528.6 L870.5 519.7Z" fill="#d38ff9" stroke="#d38ff9" stroke-width="0.4"/><path d="M870.5 519.7 L870.1 528.6 L870.3 529.4 L870.7 520.5Z" fill="#d08ef6" stroke="#d08ef6" stroke-width="0.4"/><path d="M865.2 525.2 L864.3 533.9 L865.6 534.1 L866.5 525.3Z" fill="#d892ff" stroke="#d892ff" stroke-width="0.4"/><path d="M866.5 525.3 L865.6 534.1 L866.8 534.5 L867.8 525.7Z" fill="#d791ff" stroke="#d791ff" stroke-width="0.4"/><path d="M867.8 525.7 L866.8 534.5 L867.9 535.1 L868.8 526.2Z" fill="#d590fd" stroke="#d590fd" stroke-width="0.4"/><path d="M868.8 526.2 L867.9 535.1 L868.8 535.8 L869.7 526.9Z" fill="#d28ff9" stroke="#d28ff9" stroke-width="0.4"/><path d="M869.7 526.9 L868.8 535.8 L869.3 536.6 L870.2 527.7Z" fill="#ce8df4" stroke="#ce8df4" stroke-width="0.4"/><path d="M870.2 527.7 L869.3 536.6 L869.5 537.4 L870.4 528.5Z" fill="#ca8bee" stroke="#ca8bee" stroke-width="0.4"/><path d="M864.4 533.0 L862.9 541.7 L864.2 541.9 L865.7 533.2Z" fill="#d992ff" stroke="#d992ff" stroke-width="0.4"/><path d="M865.7 533.2 L864.2 541.9 L865.5 542.4 L867.0 533.6Z" fill="#d792ff" stroke="#d792ff" stroke-width="0.4"/><path d="M867.0 533.6 L865.5 542.4 L866.6 543.0 L868.1 534.2Z" fill="#d490fd" stroke="#d490fd" stroke-width="0.4"/><path d="M868.1 534.2 L866.6 543.0 L867.4 543.8 L868.9 534.9Z" fill="#d08ef6" stroke="#d08ef6" stroke-width="0.4"/><path d="M868.9 534.9 L867.4 543.8 L867.9 544.6 L869.4 535.7Z" fill="#ca8bee" stroke="#ca8bee" stroke-width="0.4"/><path d="M869.4 535.7 L867.9 544.6 L868.1 545.4 L869.6 536.5Z" fill="#c387e4" stroke="#c387e4" stroke-width="0.4"/><path d="M863.0 541.2 L862.7 542.5 L862.4 543.8 L862.1 545.1 L861.8 546.4 L861.5 547.7 L861.1 549.0 L860.8 550.3 L860.4 551.6 L860.0 552.9 L859.6 554.2 L859.2 555.5 L858.8 556.8 L858.3 558.1 L857.9 559.4 L857.4 560.7 L856.9 561.9 L856.4 563.2 L855.9 564.5 L855.4 565.8 L854.9 567.1 L854.3 568.3 L853.7 569.6 L853.1 570.9 L852.6 572.1 L851.9 573.4 L851.3 574.7 L850.7 575.9 L850.0 577.2 L849.4 578.4 L848.7 579.7 L848.0 580.9 L847.3 582.2 L846.6 583.4 L845.8 584.6 L845.1 585.9 L844.3 587.1 L843.5 588.3 L842.7 589.5 L841.9 590.7 L841.1 592.0 L840.3 593.2 L839.4 594.4 L838.6 595.6 L837.7 596.7 L836.8 597.9 L835.9 599.1 L835.0 600.3 L834.1 601.5 L833.2 602.6 L832.2 603.8 L831.3 604.9 L830.3 606.1 L829.3 607.2 L828.3 608.4 L827.3 609.5 L826.3 610.6 L825.2 611.7 L824.2 612.8 L823.1 613.9 L822.0 615.0 L821.0 616.1 L819.9 617.2 L818.8 618.3 L817.6 619.4 L816.5 620.4 L815.4 621.5 L814.2 622.5 L813.0 623.6 L811.8 624.6 L810.7 625.6 L809.5 626.7 L808.2 627.7 L807.0 628.7 L805.8 629.7 L804.5 630.7 L803.3 631.6 L802.0 632.6 L800.7 633.6 L799.4 634.5 L798.1 635.5 L796.8 636.4 L795.5 637.3 L794.2 638.3 L792.8 639.2 L791.5 640.1 L790.1 641.0 L788.8 641.8 L787.4 642.7 L786.0 643.6 L784.6 644.4 L783.2 645.3 L781.8 646.1 L780.3 646.9 L778.9 647.8 L777.5 648.6 L776.0 649.4 L774.5 650.2 L773.1 650.9 L771.6 651.7 L770.1 652.5 L768.6 653.2 L767.1 653.9 L765.6 654.7 L764.1 655.4 L762.6 656.1 L761.0 656.8 L759.5 657.5 L757.9 658.1 L756.4 658.8 L754.8 659.4 L753.3 660.1 L751.7 660.7 L750.1 661.3 L748.5 661.9 L746.9 662.5 L745.3 663.1 L743.7 663.7 L742.1 664.2 L740.5 664.8 L738.9 665.3 L737.2 665.8 L735.6 666.4 L734.0 666.9 L732.3 667.3 L730.7 667.8 L729.0 668.3 L727.4 668.7 L725.7 669.2 L724.1 669.6 L722.4 670.0 L720.7 670.4 L719.0 670.8 L717.4 671.2 L715.7 671.6 L714.0 671.9 L712.3 672.3 L710.6 672.6 L708.9 672.9 L707.2 673.2 L705.5 673.5 L703.8 673.8 L702.1 674.1 L700.4 674.3 L698.7 674.6 L697.0 674.8 L695.3 675.0 L693.6 675.2 L691.8 675.4 L690.1 675.6 L688.4 675.8 L686.7 675.9 L685.0 676.1 L683.3 676.2 L681.5 676.3 L679.8 676.4 L678.1 676.5 L676.4 676.6 L674.7 676.6 L672.9 676.7 L671.2 676.7 L669.5 676.7 L667.8 676.8 L666.1 676.8 L664.4 676.7 L662.7 676.7 L660.9 676.7 L659.2 676.6 L657.5 676.6 L655.8 676.5 L654.1 676.4 L652.4 676.3 L650.7 676.2 L649.0 676.0 L647.3 675.9 L645.7 675.7 L644.0 675.6 L642.3 675.4 L640.6 675.2 L638.9 675.0 L637.3 674.8 L635.6 674.5 L633.9 674.3 L632.3 674.0 L630.6 673.8 L629.0 673.5 L627.3 673.2 L625.7 672.9 L624.1 672.6 L622.4 672.2 L620.8 671.9 L619.2 671.5 L617.6 671.2 L616.0 670.8 L614.4 670.4 L612.8 670.0 L611.2 669.6 L609.6 669.1 L608.0 668.7 L606.5 668.2 L604.9 667.8 L603.3 667.3 L601.8 666.8 L600.2 666.3 L598.7 665.8 L597.2 665.3 L595.7 664.7 L594.2 664.2 L592.6 663.6 L591.2 663.0 L589.7 662.5 L588.2 661.9 L586.7 661.3 L585.2 660.6 L583.8 660.0 L582.3 659.4 L580.9 658.7 L579.5 658.1 L578.1 657.4 L576.7 656.7 L575.3 656.0 L573.9 655.3 L572.5 654.6 L571.1 653.9 L569.7 653.1 L568.4 652.4 L567.1 651.6 L565.7 650.8 L564.4 650.1 L563.1 649.3 L561.8 648.5 L560.5 647.7 L559.2 646.9 L557.9 646.0 L556.7 645.2 L555.4 644.3 L554.2 643.5 L553.0 642.6 L551.8 641.7 L550.6 640.9 L549.4 640.0 L548.2 639.1 L547.0 638.2 L545.9 637.2 L544.7 636.3 L543.6 635.4 L542.5 634.4 L541.4 633.5 L540.3 632.5 L539.2 631.5 L538.1 630.5 L537.1 629.6 L536.0 628.6 L535.0 627.6 L534.0 626.5 L533.0 625.5 L532.0 624.5 L531.0 623.5 L530.0 622.4 L529.0 621.4 L528.1 620.3 L527.2 619.2 L526.3 618.2 L525.3 617.1 L524.5 616.0 L523.6 614.9 L522.7 613.8 L521.9 612.7 L521.0 611.6 L520.2 610.5 L519.4 609.4 L518.6 608.2 L517.8 607.1 L517.0 606.0 L516.3 604.8 L515.5 603.6 L514.8 602.5 L514.1 601.3 L513.4 600.2 L512.7 599.0 L512.0 597.8 L511.4 596.6 L510.7 595.4 L510.1 594.2 L509.5 593.0 L508.9 591.8 L508.3 590.6 L507.7 589.4 L507.2 588.2 L506.6 587.0 L506.1 585.7 L505.6 584.5 L505.1 583.3 L504.6 582.0 L504.1 580.8 L503.7 579.5 L503.2 578.3 L502.8 577.0 L502.4 575.8 L502.0 574.5 L501.6 573.3 L501.2 572.0 L500.9 570.7 L500.5 569.5 L500.2 568.2 L499.9 566.9 L499.6 565.6 L499.3 564.4 L499.0 563.1 L498.8 561.8 L498.5 560.5 L498.3 559.2 L498.1 557.9 L497.9 556.7 L497.7 555.4 L497.6 554.1 L497.4 552.8 L497.3 551.5 L497.1 550.2 L497.0 548.9 L496.9 547.6 L496.8 546.3 L496.8 545.0 L496.7 543.7 L496.7 542.4 L496.7 541.1 L496.7 539.8 L496.7 538.5 L496.7 537.2 L496.7 535.9 L496.8 534.6 L496.8 533.3 L496.9 532.0 L497.0 530.7 L497.1 529.4 L497.2 528.1 L497.3 526.8 L497.5 525.5 L497.6 524.2 L497.8 522.9 L498.0 521.6 L498.2 520.3 L498.4 519.0 L498.6 517.7 L498.9 516.4 L499.1 515.1 L499.4 513.8 L499.7 512.6 L500.0 511.3 L500.3 510.0 L500.6 508.7 L500.9 507.4 L501.3 506.2 L501.7 504.9 L502.0 503.6 L502.4 502.4 L502.8 501.1 L503.2 499.8 L503.7 498.6 L504.1 497.3 L504.6 496.1 L505.0 494.8 L505.5 493.6 L506.0 492.3 L506.5 491.1 L507.0 489.9 L507.6 488.6 L508.1 487.4 L508.7 486.2 L509.2 485.0 L509.8 483.7 L510.4 482.5 L511.0 481.3 L511.6 480.1 L512.3 478.9 L512.9 477.7 L513.5 476.5 L514.2 475.3 L514.9 474.2 L515.6 473.0 L516.3 471.8 L517.0 470.6 L517.7 469.5 L518.4 468.3 L519.2 467.2 L520.0 466.0 L520.7 464.9 L521.5 463.7 L522.3 462.6 L523.1 461.5 L523.9 460.3 L524.7 459.2 L525.6 458.1 L526.4 457.0 L527.3 455.9 L528.1 454.8 L529.0 453.7 L529.9 452.6 L530.8 451.6 L531.7 450.5 L532.6 449.4 L533.5 448.4 L534.5 447.3 L535.4 446.3 L536.4 445.2 L537.4 444.2 L538.3 443.2 L539.3 442.1 L540.3 441.1 L541.3 440.1 L542.3 439.1 L543.4 438.1 L544.4 437.1 L545.5 436.1 L546.5 435.2 L547.6 434.2 L548.6 433.2 L549.7 432.3 L550.8 431.3 L551.9 430.4 L553.0 429.5 L554.1 428.5 L555.2 427.6 L556.4 426.7 L557.5 425.8 L558.7 424.9 L559.8 424.0 L561.0 423.2 L562.1 422.3 L563.3 421.4 L564.5 420.6 L565.7 419.7 L566.9 418.9 L568.1 418.0 L569.3 417.2 L570.6 416.4 L571.8 415.6 L573.0 414.8 L574.3 414.0 L575.5 413.2 L576.8 412.4 L578.0 411.7 L579.3 410.9 L580.6 410.2 L581.9 409.4 L583.2 408.7 L584.5 408.0 L585.8 407.2 L587.1 406.5 L588.4 405.8 L589.7 405.1 L591.0 404.5 L592.4 403.8 L593.7 403.1 L595.1 402.5 L596.4 401.8 L597.8 401.2 L599.1 400.5 L600.5 399.9 L601.9 399.3 L603.2 398.7 L604.6 398.1 L606.0 397.5 L607.4 396.9 L608.8 396.4 L610.2 395.8 L611.6 395.3 L613.0 394.7 L614.4 394.2 L615.8 393.7 L617.2 393.2 L618.7 392.7 L620.1 392.2 L621.5 391.7 L623.0 391.2 L624.4 390.7 L625.8 390.3 L627.3 389.8 L628.7 389.4 L630.2 389.0 L631.7 388.5 L633.1 388.1 L634.6 387.7 L636.0 387.3 L637.5 387.0 L639.0 386.6 L640.4 386.2 L641.9 385.9 L643.4 385.5 L644.9 385.2 L646.4 384.9 L647.8 384.6 L649.3 384.3 L650.8 384.0 L652.3 383.7 L653.8 383.4 L655.3 383.1 L656.8 382.9 L658.3 382.6 L659.8 382.4 L661.3 382.2 L662.8 381.9 L664.3 381.7 L665.8 381.5 L667.3 381.4 L668.8 381.2 L670.3 381.0 L671.8 380.9 L673.3 380.7 L674.8 380.6 L676.3 380.4 L677.8 380.3 L679.3 380.2 L680.8 380.1 L682.3 380.0 L683.9 379.9 L685.4 379.9 L686.9 379.8 L688.4 379.8 L689.9 379.7 L691.4 379.7 L692.9 379.7 L694.4 379.7 L695.9 379.7 L697.4 379.7 L698.9 379.7 L700.4 379.7 L701.9 379.8 L703.4 379.8 L704.9 379.9 L706.4 380.0 L707.9 380.0 L709.4 380.1 L710.8 380.2 L712.3 380.3 L713.8 380.5 L715.3 380.6 L716.8 380.7 L718.3 380.9 L719.7 381.0 L721.2 381.2 L722.7 381.4 L724.1 381.6 L725.6 381.8 L727.1 382.0 L728.5 382.2 L730.0 382.4 L731.4 382.7 L732.9 382.9 L734.3 383.2 L735.8 383.4 L737.2 383.7 L738.6 384.0 L740.1 384.3 L741.5 384.6 L742.9 384.9 L744.3 385.2 L745.8 385.6 L747.2 385.9 L748.6 386.3 L750.0 386.6 L751.4 387.0 L752.8 387.4 L754.2 387.8 L755.6 388.2 L756.9 388.6 L758.3 389.0 L759.7 389.4 L761.1 389.9 L762.4 390.3 L763.8 390.8 L765.1 391.2 L766.5 391.7 L767.8 392.2 L769.1 392.7 L770.5 393.2 L771.8 393.7 L773.1 394.2 L774.4 394.8 L775.7 395.3 L777.0 395.9 L778.3 396.4 L779.6 397.0 L780.9 397.6 L782.2 398.2 L783.4 398.8 L784.7 399.4 L785.9 400.0 L787.2 400.6 L788.4 401.2 L789.7 401.9 L790.9 402.5 L792.1 403.2 L793.3 403.8 L794.5 404.5 L795.7 405.2 L796.9 405.9 L798.1 406.6 L799.3 407.3 L800.4 408.0 L801.6 408.8 L802.8 409.5 L803.9 410.2 L805.0 411.0 L806.2 411.8 L807.3 412.5 L808.4 413.3 L809.5 414.1 L810.6 414.9 L811.7 415.7 L812.8 416.5 L813.8 417.3 L814.9 418.1 L815.9 419.0 L817.0 419.8 L818.0 420.7 L819.0 421.5 L820.0 422.4 L821.1 423.2 L822.0 424.1 L823.0 425.0 L824.0 425.9 L825.0 426.8 L825.9 427.7 L826.9 428.6 L827.8 429.6 L828.8 430.5 L829.7 431.4 L830.6 432.4 L831.5 433.3 L832.4 434.3 L833.2 435.3 L834.1 436.2 L835.0 437.2 L835.8 438.2 L836.7 439.2 L837.5 440.2 L838.3 441.2 L839.1 442.2 L839.9 443.3 L840.7 444.3 L841.4 445.3 L842.2 446.4 L843.0 447.4 L843.7 448.5 L844.4 449.5 L845.1 450.6 L845.8 451.7 L846.5 452.7 L847.2 453.8 L847.9 454.9 L848.6 456.0 L849.2 457.1 L849.8 458.2 L850.5 459.3 L851.1 460.5 L851.7 461.6 L852.3 462.7 L852.8 463.8 L853.4 465.0 L853.9 466.1 L854.5 467.3 L855.0 468.4 L855.5 469.6 L856.0 470.8 L856.5 471.9 L857.0 473.1 L857.5 474.3 L857.9 475.5 L858.4 476.7 L858.8 477.9 L859.2 479.0 L859.6 480.2 L860.0 481.5 L860.4 482.7 L860.7 483.9 L861.1 485.1 L861.4 486.3 L861.7 487.5 L862.0 488.8 L862.3 490.0 L862.6 491.2 L862.9 492.5 L863.1 493.7 L863.4 495.0 L863.6 496.2 L863.8 497.5 L864.0 498.7 L864.2 500.0 L864.4 501.2 L864.6 502.5 L864.7 503.8 L864.9 505.0 L865.0 506.3 L865.1 507.6 L865.2 508.9 L865.3 510.1 L865.3 511.4 L865.4 512.7 L865.4 514.0 L865.4 515.3 L865.5 516.6 L865.5 517.8 L865.4 519.1 L865.4 520.4 L865.4 521.7 L865.3 523.0 L865.2 524.3 L865.1 525.6 L865.0 526.9 L864.9 528.2 L864.8 529.5 L864.6 530.8 L864.5 532.1 L864.3 533.4 L864.1 534.7 L863.9 536.0 L863.7 537.3 L863.5 538.6 L863.2 539.9Z" fill="url(#topg)"/><path d="M519.6 458.7 L522.2 455.3 L524.9 451.9 L527.7 448.5 L530.6 445.2 L533.6 442.0 L536.7 438.8 L539.8 435.7 L543.1 432.7 L546.4 429.7 L549.9 426.8 L553.4 423.9 L557.0 421.2 L560.6 418.5 L564.3 415.8 L568.1 413.3 L572.0 410.8 L575.9 408.4 L579.9 406.1 L584.0 403.8 L588.1 401.7 L592.2 399.6 L596.4 397.6 L600.7 395.7 L605.0 393.9 L609.4 392.1 L613.8 390.5 L618.2 388.9 L622.7 387.4 L627.2 386.0 L631.7 384.7 L636.2 383.5 L640.8 382.4 L645.4 381.3 L650.0 380.4 L654.7 379.5 L659.3 378.8 L664.0 378.1 L668.7 377.5 L673.4 377.0 L678.0 376.7 L682.7 376.4 L687.4 376.1 L692.1 376.0 L696.8 376.0 L701.4 376.1 L706.1 376.3 L710.7 376.5 L715.3 376.9 L719.9 377.3 L724.5 377.9 L729.1 378.5 L733.6 379.2 L738.1 380.0 L742.5 380.9 L747.0 381.9 L751.4 383.0 L755.7 384.2 L760.0 385.5 L764.3 386.8 L768.5 388.3 L772.6 389.8 L776.7 391.4 L780.8 393.1 L784.8 394.9 L788.7 396.8 L792.5 398.8 L796.3 400.8 L800.1 402.9 L803.7 405.1 L807.3 407.4 L810.8 409.8 L814.2 412.2 L817.6 414.8 L820.9 417.4 L824.1 420.0 L827.1 422.8 L830.2 425.6 L833.1 428.5 L835.9 431.4 L838.6 434.4 L841.2 437.5 L843.8 440.7 L846.2 443.9 L848.5 447.2 L850.7 450.5 L852.8 453.9 L854.8 457.3 L856.7 460.8 L858.5 464.3 L860.2 467.9 L861.7 471.6 L863.1 475.2 L864.4 479.0 L865.6 482.7 L866.7 486.5 L867.6 490.4 L868.4 494.2 L869.1 498.1 L869.7 502.1" fill="none" stroke="#5a4a6a" stroke-width="0.9" stroke-dasharray="3 2" opacity="0.55"/><path d="M596.1 417.0 L598.4 416.4 L600.8 415.9 L603.1 415.4 L605.5 414.8 L607.7 413.9 L609.8 412.7 L611.7 411.1 L613.6 409.1 L615.3 406.9 L617.0 404.5 L618.7 402.2 L620.4 400.0M590.8 430.7 L592.9 430.6 L595.1 430.7 L597.3 430.7 L599.4 430.7 L601.5 430.3 L603.5 429.6 L605.4 428.4 L607.2 426.8 L608.9 424.9 L610.6 422.9 L612.3 420.9 L614.0 419.0M543.3 439.1 L544.5 440.3 L545.8 441.6 L547.0 443.0 L548.2 444.2 L549.5 445.1 L550.7 445.5 L551.9 445.4 L553.1 444.9 L554.4 444.0 L555.6 443.0 L556.8 442.0 L558.0 441.2M528.5 464.5 L529.7 465.3 L531.0 466.2 L532.3 467.1 L533.5 467.8 L534.7 468.4 L535.9 468.7 L537.0 468.6 L538.1 468.2 L539.1 467.6 L540.1 466.8 L541.2 466.1 L542.2 465.5M556.0 467.6 L558.2 469.1 L560.4 470.8 L562.5 472.5 L564.7 474.1 L567.1 475.3 L569.7 476.1 L572.6 476.5 L575.9 476.5 L579.3 476.3 L582.6 475.8 L585.8 475.0 L588.7 474.0 L591.2 472.7 L593.6 471.0 L595.8 469.1 L597.8 467.0 L599.7 464.8 L601.4 462.4 L602.9 459.9 L604.3 457.2 L605.4 454.3 L606.5 451.3 L607.6 448.4 L608.8 445.5M603.5 476.1 L605.4 476.9 L607.3 477.8 L609.2 478.7 L611.1 479.4 L613.0 480.0 L615.1 480.3 L617.4 480.3 L619.9 480.1 L622.5 479.8 L624.9 479.1 L627.1 478.3 L628.8 477.1 L629.9 475.6 L630.6 473.9 L630.9 471.9 L631.2 469.7 L631.5 467.2 L632.0 464.5 L632.8 461.3 L633.6 457.6 L634.5 453.6 L635.4 449.7 L636.3 446.2 L637.3 443.4 L638.3 441.5 L639.3 440.2 L640.4 439.3 L641.5 438.6 L642.5 437.9 L643.6 437.0M633.0 477.1 L635.5 478.4 L638.0 479.9 L640.5 481.4 L643.0 482.7 L645.5 483.8 L647.8 484.5 L650.0 484.7 L652.2 484.5 L654.3 484.0 L656.3 483.5 L658.4 482.9 L660.5 482.4M669.0 481.4 L670.6 482.9 L672.1 484.5 L673.6 486.1 L675.3 487.6 L677.2 488.9 L679.5 489.8 L682.3 490.3 L685.6 490.4 L689.1 490.3 L692.8 490.1 L696.5 489.9 L700.0 489.8M513.7 483.5 L523.2 485.6M537.0 488.8 L538.4 488.6 L539.8 488.5 L541.3 488.4 L542.7 488.2 L544.1 488.0 L545.4 487.7 L546.7 487.3 L547.9 486.8 L549.2 486.2 L550.4 485.6 L551.6 485.1 L552.8 484.5M609.8 497.2 L611.2 497.1 L612.7 497.0 L614.1 496.9 L615.5 496.8 L616.9 496.6 L618.3 496.2 L619.6 495.7 L620.8 495.0 L622.1 494.3 L623.3 493.5 L624.5 492.7 L625.7 491.9M605.6 507.8 L607.0 507.9 L608.5 508.0 L609.9 508.1 L611.3 508.2 L612.7 508.1 L614.0 507.8 L615.2 507.2 L616.3 506.4 L617.3 505.5 L618.3 504.5 L619.4 503.4 L620.4 502.5M626.7 513.0 L627.7 514.0 L628.8 515.1 L629.8 516.2 L630.9 517.2 L631.9 517.9 L633.0 518.3 L634.1 518.3 L635.1 517.9 L636.2 517.3 L637.3 516.5 L638.3 515.8 L639.4 515.2M828.9 447.2 L825.8 448.6 L822.6 450.0 L819.4 451.4 L816.3 452.8 L813.4 454.3 L810.9 456.0 L808.7 457.9 L806.8 460.1 L805.1 462.4 L803.6 464.6 L802.4 466.8 L801.4 468.7 L800.7 470.3 L800.4 471.8 L800.4 473.2 L800.4 474.5 L800.5 475.7 L800.4 477.1M814.1 466.6 L815.7 467.6 L817.3 468.8 L818.9 470.0 L820.4 471.1 L822.0 471.8 L823.6 471.9 L825.2 471.4 L826.8 470.4 L828.4 469.0 L829.9 467.4 L831.5 465.9 L833.1 464.5M774.0 496.2 L775.5 497.3 L777.0 498.6 L778.6 499.9 L780.1 501.0 L781.7 501.9 L783.5 502.5 L785.5 502.8 L787.9 502.8 L790.2 502.6 L792.6 502.2 L794.6 501.5 L796.2 500.4 L797.3 498.9 L797.9 497.0 L798.4 494.7 L798.6 492.3 L798.9 489.9 L799.3 487.7M820.4 490.9 L821.6 489.7 L822.7 488.3 L823.8 486.9 L825.0 485.7 L826.3 484.8 L827.8 484.5 L829.5 484.8 L831.4 485.7 L833.3 486.9 L835.4 488.3 L837.4 489.7 L839.4 490.9M809.9 504.6 L811.5 505.0 L813.1 505.5 L814.7 506.0 L816.3 506.4 L817.9 506.7 L819.4 506.7 L820.9 506.4 L822.3 505.8 L823.7 505.0 L825.0 504.3 L826.4 503.7 L827.8 503.5 L829.2 503.7 L830.7 504.3 L832.1 505.0 L833.5 505.8 L834.9 506.4 L836.3 506.7 L837.6 506.7 L838.8 506.4 L840.1 506.0 L841.3 505.5 L842.5 505.0 L843.7 504.6M842.6 497.2 L852.1 491.9M707.5 506.7 L718.0 510.9M729.6 515.2 L743.4 513.0M749.7 513.0 L759.2 515.2M772.9 519.4 L785.6 517.3M840.5 524.8 L853.2 522.7M835.2 536.4 L849.0 535.3M508.4 524.8 L510.2 525.8 L511.9 527.0 L513.7 528.2 L515.5 529.3 L517.2 530.0 L519.0 530.1 L520.9 529.7 L522.8 528.8 L524.8 527.5 L526.6 526.0 L528.3 524.4 L529.6 522.7 L530.6 520.9 L531.2 518.9 L531.6 516.7 L531.9 514.4 L532.3 512.2 L532.7 510.0M538.0 531.1 L539.8 531.7 L541.7 532.4 L543.5 533.2 L545.3 533.8 L547.0 534.2 L548.6 534.3 L550.1 534.2 L551.5 534.0 L552.8 533.7 L554.0 533.0 L555.1 531.8 L556.0 530.1 L556.8 527.7 L557.4 524.6 L557.8 521.0 L558.2 517.3 L558.6 513.5 L559.1 510.0M560.2 533.2 L561.4 534.0 L562.6 535.0 L563.8 535.9 L565.1 536.7 L566.3 537.3 L567.6 537.5 L569.0 537.5 L570.6 537.4 L572.2 537.1 L573.7 536.4 L575.0 535.1 L576.0 533.2 L576.6 530.4 L576.9 526.9 L577.0 522.8 L577.0 518.4 L577.0 514.1 L577.1 510.0M581.3 535.3 L583.9 536.5 L586.6 537.9 L589.3 539.3 L591.9 540.5 L594.5 541.4 L597.1 541.7 L599.7 541.5 L602.5 540.8 L605.2 539.8 L607.7 538.5 L610.0 537.0 L611.9 535.3 L613.3 533.3 L614.4 531.0 L615.1 528.5 L615.8 525.8 L616.4 523.1 L617.2 520.6M641.5 542.7 L644.0 543.9 L646.5 545.3 L649.0 546.6 L651.5 547.8 L654.0 548.7 L656.3 549.1 L658.6 549.0 L660.9 548.4 L663.2 547.5 L665.3 546.4 L667.3 545.1 L669.0 543.8 L670.4 542.3 L671.6 540.7 L672.5 538.8 L673.4 536.9 L674.3 535.0 L675.3 533.2M500.0 550.1 L502.1 551.3 L504.2 552.7 L506.4 554.0 L508.5 555.2 L510.6 556.1 L512.7 556.5 L514.9 556.3 L517.3 555.6 L519.7 554.6 L522.0 553.5 L523.9 552.3 L525.3 551.2 L526.1 550.2 L526.5 549.1 L526.6 548.1 L526.5 547.0 L526.3 545.9 L526.4 544.8M532.7 550.1 L545.4 554.4M558.1 560.7 L559.7 560.8 L561.2 560.9 L562.7 561.1 L564.3 561.2 L565.9 561.1 L567.6 560.7 L569.4 560.0 L571.3 559.1 L573.3 557.9 L575.3 556.7 L577.2 555.5 L579.2 554.4M505.3 577.6 L506.8 578.5 L508.3 579.5 L509.8 580.6 L511.4 581.5 L513.0 582.0 L514.8 581.8 L516.7 580.9 L518.8 579.4 L520.9 577.4 L523.1 575.3 L525.3 573.1 L527.5 571.2M704.3 550.1 L705.9 551.3 L707.4 552.6 L709.0 554.0 L710.6 555.2 L712.2 556.1 L713.8 556.5 L715.6 556.5 L717.5 556.1 L719.4 555.4 L721.3 554.5 L723.0 553.4 L724.3 552.2 L725.3 550.8 L725.9 549.2 L726.4 547.3 L726.7 545.4 L727.1 543.5 L727.5 541.7M747.6 557.5 L749.4 558.5 L751.1 559.6 L752.9 560.7 L754.7 561.7 L756.4 562.5 L758.1 562.8 L759.8 562.7 L761.6 562.3 L763.3 561.6 L764.9 560.7 L766.4 559.7 L767.6 558.6 L768.5 557.3 L769.1 555.8 L769.6 554.2 L770.0 552.5 L770.3 550.7 L770.8 549.1M780.3 559.6 L782.8 560.8 L785.3 562.2 L787.8 563.5 L790.2 564.7 L792.7 565.6 L795.1 566.0 L797.6 565.9 L800.1 565.3 L802.6 564.4 L805.0 563.3 L807.1 562.0 L808.8 560.7 L810.1 559.2 L810.9 557.6 L811.5 555.7 L812.0 553.8 L812.5 551.9 L813.1 550.1M813.1 564.9 L816.0 566.1 L818.9 567.4 L821.8 568.7 L824.7 569.9 L827.4 570.8 L830.0 571.2 L832.4 571.1 L834.8 570.7 L837.1 569.9 L839.2 568.9 L841.0 567.9 L842.6 567.0 L843.8 566.1 L844.6 565.1 L845.2 564.0 L845.7 562.9 L846.2 561.8 L846.8 560.7M772.9 583.9 L775.1 585.1 L777.3 586.5 L779.5 587.9 L781.7 589.1 L783.7 590.0 L785.6 590.3 L787.2 590.0 L788.7 589.1 L790.1 587.9 L791.4 586.5 L792.6 585.1 L794.0 583.9M802.5 581.8 L803.8 583.8 L805.1 586.0 L806.3 588.2 L807.6 590.2 L809.1 591.7 L810.9 592.4 L813.0 592.2 L815.4 591.3 L817.9 589.8 L820.5 588.1 L823.2 586.4 L825.7 585.0M790.9 610.3 L792.8 611.3 L794.8 612.5 L796.8 613.7 L798.7 614.8 L800.6 615.5 L802.5 615.6 L804.3 615.1 L806.1 614.1 L807.9 612.7 L809.6 611.1 L811.3 609.6 L813.1 608.2M739.1 647.3 L740.7 648.0 L742.2 649.0 L743.7 649.9 L745.4 650.6 L747.3 650.9 L749.7 650.4 L752.7 649.1 L756.3 647.2 L760.1 644.8 L764.0 642.1 L767.6 639.4 L770.8 636.7 L773.4 634.1 L775.7 631.3 L777.7 628.5 L779.6 625.6 L781.5 622.7 L783.5 619.8" fill="none" stroke="#a47ecc" stroke-width="2.2" stroke-linecap="round"/><path d="M596.1 417.0 L598.4 416.4 L600.8 415.9 L603.1 415.4 L605.5 414.8 L607.7 413.9 L609.8 412.7 L611.7 411.1 L613.6 409.1 L615.3 406.9 L617.0 404.5 L618.7 402.2 L620.4 400.0M590.8 430.7 L592.9 430.6 L595.1 430.7 L597.3 430.7 L599.4 430.7 L601.5 430.3 L603.5 429.6 L605.4 428.4 L607.2 426.8 L608.9 424.9 L610.6 422.9 L612.3 420.9 L614.0 419.0M543.3 439.1 L544.5 440.3 L545.8 441.6 L547.0 443.0 L548.2 444.2 L549.5 445.1 L550.7 445.5 L551.9 445.4 L553.1 444.9 L554.4 444.0 L555.6 443.0 L556.8 442.0 L558.0 441.2M528.5 464.5 L529.7 465.3 L531.0 466.2 L532.3 467.1 L533.5 467.8 L534.7 468.4 L535.9 468.7 L537.0 468.6 L538.1 468.2 L539.1 467.6 L540.1 466.8 L541.2 466.1 L542.2 465.5M556.0 467.6 L558.2 469.1 L560.4 470.8 L562.5 472.5 L564.7 474.1 L567.1 475.3 L569.7 476.1 L572.6 476.5 L575.9 476.5 L579.3 476.3 L582.6 475.8 L585.8 475.0 L588.7 474.0 L591.2 472.7 L593.6 471.0 L595.8 469.1 L597.8 467.0 L599.7 464.8 L601.4 462.4 L602.9 459.9 L604.3 457.2 L605.4 454.3 L606.5 451.3 L607.6 448.4 L608.8 445.5M603.5 476.1 L605.4 476.9 L607.3 477.8 L609.2 478.7 L611.1 479.4 L613.0 480.0 L615.1 480.3 L617.4 480.3 L619.9 480.1 L622.5 479.8 L624.9 479.1 L627.1 478.3 L628.8 477.1 L629.9 475.6 L630.6 473.9 L630.9 471.9 L631.2 469.7 L631.5 467.2 L632.0 464.5 L632.8 461.3 L633.6 457.6 L634.5 453.6 L635.4 449.7 L636.3 446.2 L637.3 443.4 L638.3 441.5 L639.3 440.2 L640.4 439.3 L641.5 438.6 L642.5 437.9 L643.6 437.0M633.0 477.1 L635.5 478.4 L638.0 479.9 L640.5 481.4 L643.0 482.7 L645.5 483.8 L647.8 484.5 L650.0 484.7 L652.2 484.5 L654.3 484.0 L656.3 483.5 L658.4 482.9 L660.5 482.4M669.0 481.4 L670.6 482.9 L672.1 484.5 L673.6 486.1 L675.3 487.6 L677.2 488.9 L679.5 489.8 L682.3 490.3 L685.6 490.4 L689.1 490.3 L692.8 490.1 L696.5 489.9 L700.0 489.8M513.7 483.5 L523.2 485.6M537.0 488.8 L538.4 488.6 L539.8 488.5 L541.3 488.4 L542.7 488.2 L544.1 488.0 L545.4 487.7 L546.7 487.3 L547.9 486.8 L549.2 486.2 L550.4 485.6 L551.6 485.1 L552.8 484.5M609.8 497.2 L611.2 497.1 L612.7 497.0 L614.1 496.9 L615.5 496.8 L616.9 496.6 L618.3 496.2 L619.6 495.7 L620.8 495.0 L622.1 494.3 L623.3 493.5 L624.5 492.7 L625.7 491.9M605.6 507.8 L607.0 507.9 L608.5 508.0 L609.9 508.1 L611.3 508.2 L612.7 508.1 L614.0 507.8 L615.2 507.2 L616.3 506.4 L617.3 505.5 L618.3 504.5 L619.4 503.4 L620.4 502.5M626.7 513.0 L627.7 514.0 L628.8 515.1 L629.8 516.2 L630.9 517.2 L631.9 517.9 L633.0 518.3 L634.1 518.3 L635.1 517.9 L636.2 517.3 L637.3 516.5 L638.3 515.8 L639.4 515.2M828.9 447.2 L825.8 448.6 L822.6 450.0 L819.4 451.4 L816.3 452.8 L813.4 454.3 L810.9 456.0 L808.7 457.9 L806.8 460.1 L805.1 462.4 L803.6 464.6 L802.4 466.8 L801.4 468.7 L800.7 470.3 L800.4 471.8 L800.4 473.2 L800.4 474.5 L800.5 475.7 L800.4 477.1M814.1 466.6 L815.7 467.6 L817.3 468.8 L818.9 470.0 L820.4 471.1 L822.0 471.8 L823.6 471.9 L825.2 471.4 L826.8 470.4 L828.4 469.0 L829.9 467.4 L831.5 465.9 L833.1 464.5M774.0 496.2 L775.5 497.3 L777.0 498.6 L778.6 499.9 L780.1 501.0 L781.7 501.9 L783.5 502.5 L785.5 502.8 L787.9 502.8 L790.2 502.6 L792.6 502.2 L794.6 501.5 L796.2 500.4 L797.3 498.9 L797.9 497.0 L798.4 494.7 L798.6 492.3 L798.9 489.9 L799.3 487.7M820.4 490.9 L821.6 489.7 L822.7 488.3 L823.8 486.9 L825.0 485.7 L826.3 484.8 L827.8 484.5 L829.5 484.8 L831.4 485.7 L833.3 486.9 L835.4 488.3 L837.4 489.7 L839.4 490.9M809.9 504.6 L811.5 505.0 L813.1 505.5 L814.7 506.0 L816.3 506.4 L817.9 506.7 L819.4 506.7 L820.9 506.4 L822.3 505.8 L823.7 505.0 L825.0 504.3 L826.4 503.7 L827.8 503.5 L829.2 503.7 L830.7 504.3 L832.1 505.0 L833.5 505.8 L834.9 506.4 L836.3 506.7 L837.6 506.7 L838.8 506.4 L840.1 506.0 L841.3 505.5 L842.5 505.0 L843.7 504.6M842.6 497.2 L852.1 491.9M707.5 506.7 L718.0 510.9M729.6 515.2 L743.4 513.0M749.7 513.0 L759.2 515.2M772.9 519.4 L785.6 517.3M840.5 524.8 L853.2 522.7M835.2 536.4 L849.0 535.3M508.4 524.8 L510.2 525.8 L511.9 527.0 L513.7 528.2 L515.5 529.3 L517.2 530.0 L519.0 530.1 L520.9 529.7 L522.8 528.8 L524.8 527.5 L526.6 526.0 L528.3 524.4 L529.6 522.7 L530.6 520.9 L531.2 518.9 L531.6 516.7 L531.9 514.4 L532.3 512.2 L532.7 510.0M538.0 531.1 L539.8 531.7 L541.7 532.4 L543.5 533.2 L545.3 533.8 L547.0 534.2 L548.6 534.3 L550.1 534.2 L551.5 534.0 L552.8 533.7 L554.0 533.0 L555.1 531.8 L556.0 530.1 L556.8 527.7 L557.4 524.6 L557.8 521.0 L558.2 517.3 L558.6 513.5 L559.1 510.0M560.2 533.2 L561.4 534.0 L562.6 535.0 L563.8 535.9 L565.1 536.7 L566.3 537.3 L567.6 537.5 L569.0 537.5 L570.6 537.4 L572.2 537.1 L573.7 536.4 L575.0 535.1 L576.0 533.2 L576.6 530.4 L576.9 526.9 L577.0 522.8 L577.0 518.4 L577.0 514.1 L577.1 510.0M581.3 535.3 L583.9 536.5 L586.6 537.9 L589.3 539.3 L591.9 540.5 L594.5 541.4 L597.1 541.7 L599.7 541.5 L602.5 540.8 L605.2 539.8 L607.7 538.5 L610.0 537.0 L611.9 535.3 L613.3 533.3 L614.4 531.0 L615.1 528.5 L615.8 525.8 L616.4 523.1 L617.2 520.6M641.5 542.7 L644.0 543.9 L646.5 545.3 L649.0 546.6 L651.5 547.8 L654.0 548.7 L656.3 549.1 L658.6 549.0 L660.9 548.4 L663.2 547.5 L665.3 546.4 L667.3 545.1 L669.0 543.8 L670.4 542.3 L671.6 540.7 L672.5 538.8 L673.4 536.9 L674.3 535.0 L675.3 533.2M500.0 550.1 L502.1 551.3 L504.2 552.7 L506.4 554.0 L508.5 555.2 L510.6 556.1 L512.7 556.5 L514.9 556.3 L517.3 555.6 L519.7 554.6 L522.0 553.5 L523.9 552.3 L525.3 551.2 L526.1 550.2 L526.5 549.1 L526.6 548.1 L526.5 547.0 L526.3 545.9 L526.4 544.8M532.7 550.1 L545.4 554.4M558.1 560.7 L559.7 560.8 L561.2 560.9 L562.7 561.1 L564.3 561.2 L565.9 561.1 L567.6 560.7 L569.4 560.0 L571.3 559.1 L573.3 557.9 L575.3 556.7 L577.2 555.5 L579.2 554.4M505.3 577.6 L506.8 578.5 L508.3 579.5 L509.8 580.6 L511.4 581.5 L513.0 582.0 L514.8 581.8 L516.7 580.9 L518.8 579.4 L520.9 577.4 L523.1 575.3 L525.3 573.1 L527.5 571.2M704.3 550.1 L705.9 551.3 L707.4 552.6 L709.0 554.0 L710.6 555.2 L712.2 556.1 L713.8 556.5 L715.6 556.5 L717.5 556.1 L719.4 555.4 L721.3 554.5 L723.0 553.4 L724.3 552.2 L725.3 550.8 L725.9 549.2 L726.4 547.3 L726.7 545.4 L727.1 543.5 L727.5 541.7M747.6 557.5 L749.4 558.5 L751.1 559.6 L752.9 560.7 L754.7 561.7 L756.4 562.5 L758.1 562.8 L759.8 562.7 L761.6 562.3 L763.3 561.6 L764.9 560.7 L766.4 559.7 L767.6 558.6 L768.5 557.3 L769.1 555.8 L769.6 554.2 L770.0 552.5 L770.3 550.7 L770.8 549.1M780.3 559.6 L782.8 560.8 L785.3 562.2 L787.8 563.5 L790.2 564.7 L792.7 565.6 L795.1 566.0 L797.6 565.9 L800.1 565.3 L802.6 564.4 L805.0 563.3 L807.1 562.0 L808.8 560.7 L810.1 559.2 L810.9 557.6 L811.5 555.7 L812.0 553.8 L812.5 551.9 L813.1 550.1M813.1 564.9 L816.0 566.1 L818.9 567.4 L821.8 568.7 L824.7 569.9 L827.4 570.8 L830.0 571.2 L832.4 571.1 L834.8 570.7 L837.1 569.9 L839.2 568.9 L841.0 567.9 L842.6 567.0 L843.8 566.1 L844.6 565.1 L845.2 564.0 L845.7 562.9 L846.2 561.8 L846.8 560.7M772.9 583.9 L775.1 585.1 L777.3 586.5 L779.5 587.9 L781.7 589.1 L783.7 590.0 L785.6 590.3 L787.2 590.0 L788.7 589.1 L790.1 587.9 L791.4 586.5 L792.6 585.1 L794.0 583.9M802.5 581.8 L803.8 583.8 L805.1 586.0 L806.3 588.2 L807.6 590.2 L809.1 591.7 L810.9 592.4 L813.0 592.2 L815.4 591.3 L817.9 589.8 L820.5 588.1 L823.2 586.4 L825.7 585.0M790.9 610.3 L792.8 611.3 L794.8 612.5 L796.8 613.7 L798.7 614.8 L800.6 615.5 L802.5 615.6 L804.3 615.1 L806.1 614.1 L807.9 612.7 L809.6 611.1 L811.3 609.6 L813.1 608.2M739.1 647.3 L740.7 648.0 L742.2 649.0 L743.7 649.9 L745.4 650.6 L747.3 650.9 L749.7 650.4 L752.7 649.1 L756.3 647.2 L760.1 644.8 L764.0 642.1 L767.6 639.4 L770.8 636.7 L773.4 634.1 L775.7 631.3 L777.7 628.5 L779.6 625.6 L781.5 622.7 L783.5 619.8" fill="none" stroke="#6a5680" stroke-width="0.8" stroke-linecap="round" transform="translate(0,-0.9)" opacity="0.45"/><path d="M652.0 426.5 L659.4 393.7M659.4 453.9 L664.7 434.9M679.5 407.5 L686.9 389.5M537.0 488.8 L536.3 492.2 L535.5 495.7 L534.8 499.1 L534.0 502.5 L533.3 505.8 L532.7 508.8 L532.1 511.6 L531.6 514.1 L531.1 516.5 L530.6 518.9 L530.1 521.2 L529.6 523.6M588.7 488.8 L586.6 492.6 L584.4 496.5 L582.2 500.4 L580.2 504.2 L578.4 507.8 L577.1 510.9 L576.3 513.6 L576.0 515.8 L575.9 517.8 L576.0 519.7 L576.1 521.6 L576.0 523.6M565.5 503.5 L564.2 505.8 L562.8 508.2 L561.4 510.6 L560.1 512.9 L558.9 515.2 L558.0 517.3 L557.3 519.2 L556.9 521.0 L556.7 522.8 L556.5 524.4 L556.3 526.1 L556.0 527.8M672.1 500.4 L664.7 515.2M731.7 395.8 L729.3 401.3 L726.9 406.9 L724.4 412.5 L722.0 418.1 L719.9 423.4 L718.0 428.6 L716.5 433.5 L715.3 438.3 L714.3 442.9 L713.4 447.4 L712.5 451.7 L711.7 456.0 L711.0 460.3 L710.4 464.6 L709.9 468.8 L709.3 472.7 L708.5 476.3 L707.5 479.3 L706.2 481.8 L704.7 483.8 L703.0 485.4 L701.1 486.7 L699.1 487.8 L696.9 488.8 L694.4 489.6 L691.7 490.0 L688.8 490.3 L685.9 490.5 L682.9 490.6 L680.0 490.9M714.8 484.5 L715.9 486.2 L716.9 487.9 L717.9 489.7 L719.0 491.4 L720.4 492.8 L722.2 494.0 L724.5 494.9 L727.2 495.6 L730.2 496.1 L733.3 496.4 L736.3 496.4 L739.1 496.2 L741.8 495.8 L744.5 495.2 L747.2 494.5 L749.7 493.3 L751.9 491.8 L753.9 489.8 L755.4 487.6 L756.4 485.3 L757.2 482.5 L758.0 479.1 L759.0 474.6 L760.3 468.7 L762.0 461.0 L764.0 451.8 L766.2 441.5 L768.5 430.7 L770.7 419.9 L772.9 409.6M752.9 420.1 L751.6 420.7 L750.3 421.0 L749.0 421.4 L747.7 422.0 L746.6 422.9 L745.5 424.3 L744.6 426.4 L743.8 429.0 L743.2 432.0 L742.5 435.1 L741.9 438.2 L741.2 441.2M778.2 427.5 L786.7 449.7M801.4 423.3 L798.3 443.4M701.1 504.6 L695.8 527.8M728.6 515.2 L727.5 535.0M771.9 519.4 L770.8 530.0M806.7 517.3 L802.5 531.0M558.1 560.7 L557.4 566.5 L556.7 572.6 L556.1 578.7 L555.4 584.5 L554.7 589.8 L553.9 594.5 L553.2 598.4 L552.4 601.8 L551.7 604.7 L550.9 607.2 L549.9 609.4 L548.6 611.4 L547.0 613.3 L545.2 614.9 L543.1 616.3 L541.0 617.2 L538.9 617.8 L537.0 617.7 L535.2 616.9 L533.4 615.4 L531.6 613.5 L529.9 611.3 L528.2 609.1 L526.4 607.1M602.4 553.3 L599.3 567.0M596.1 585.0 L594.5 587.2 L592.7 589.3 L591.0 591.4 L589.4 593.6 L587.9 596.0 L586.6 598.7 L585.6 601.8 L584.8 605.3 L584.2 609.1 L583.6 612.8 L583.0 616.4 L582.4 619.8 L581.8 623.0 L581.2 626.1 L580.6 629.2 L580.0 632.0 L579.2 634.5 L578.1 636.7 L576.7 638.5 L575.1 640.1 L573.3 641.4 L571.4 642.4 L569.5 642.9 L567.6 643.0 L565.7 642.5 L563.8 641.3 L561.9 639.7 L559.9 637.9 L557.9 636.2 L556.0 634.6M623.5 559.6 L621.5 562.5 L619.4 565.4 L617.4 568.3 L615.4 571.2 L613.5 574.3 L611.9 577.6 L610.5 581.1 L609.2 584.8 L608.1 588.6 L607.1 592.6 L606.3 596.6 L605.6 600.8 L605.1 605.3 L604.9 610.0 L604.8 614.9 L604.8 619.8 L604.7 624.3 L604.5 628.3 L604.2 631.9 L603.9 635.2 L603.5 638.1 L603.1 640.8 L602.4 643.2 L601.4 645.2 L600.1 646.9 L598.4 648.3 L596.5 649.4 L594.5 650.1 L592.6 650.5 L590.8 650.4 L589.2 649.8 L587.6 648.6 L586.0 647.0 L584.4 645.3 L582.9 643.6 L581.3 642.0M651.0 563.9 L650.2 566.0 L649.3 568.0 L648.5 570.0 L647.7 572.2 L646.8 574.6 L645.7 577.6 L644.4 581.1 L643.0 584.9 L641.4 589.1 L639.9 593.5 L638.5 598.2 L637.3 603.0 L636.4 608.3 L635.6 614.2 L635.0 620.4 L634.4 626.4 L633.8 632.0 L633.0 636.7 L632.2 640.6 L631.4 644.0 L630.6 647.0 L629.7 649.5 L628.4 651.7 L626.7 653.6 L624.5 655.0 L621.9 655.9 L618.9 656.5 L615.8 656.9 L612.7 657.2 L609.8 657.8M681.6 569.1 L678.5 590.3M700.0 579.7 L698.3 582.0 L696.5 584.0 L694.7 586.0 L693.0 588.3 L691.4 591.1 L690.1 594.5 L689.0 598.8 L688.1 603.8 L687.3 609.3 L686.7 615.0 L686.2 620.7 L685.8 626.2 L685.6 631.5 L685.5 636.7 L685.5 642.0 L685.6 647.3 L685.8 652.5 L685.8 657.8M706.4 569.1 L704.0 572.7 L701.5 576.3 L699.0 580.0 L696.6 583.6 L694.5 587.0 L692.7 590.3 L691.3 593.2 L690.1 595.8 L689.2 598.2 L688.5 600.7 L687.9 603.6 L687.4 607.1 L687.0 611.4 L686.7 616.4 L686.6 621.8 L686.7 627.1 L686.9 632.2 L687.4 636.7 L688.2 640.5 L689.3 643.8 L690.6 646.9 L692.1 649.8 L693.5 652.7 L694.8 655.7M743.4 578.6 L742.7 579.9 L742.2 581.3 L741.6 582.6 L740.9 583.9 L740.1 585.1 L739.1 586.0 L737.8 586.7 L736.2 587.3 L734.5 587.7 L732.8 588.0 L731.1 588.1 L729.6 588.1 L728.2 587.7 L726.8 587.0 L725.5 586.1 L724.3 585.3 L723.2 584.8 L722.2 585.0 L721.4 585.8 L720.7 587.2 L720.2 588.9 L719.7 590.8 L719.4 592.7 L719.1 594.5 L718.9 596.2 L718.9 597.9 L718.9 599.7 L719.0 601.5 L719.1 603.2 L719.1 605.0M739.1 596.6 L738.4 600.1 L737.7 603.7 L737.0 607.3 L736.3 610.8 L735.6 614.3 L734.9 617.7 L734.2 621.1 L733.5 624.5 L732.9 627.9 L732.2 631.1 L731.5 634.0 L730.7 636.7 L729.9 639.0 L729.0 640.9 L728.1 642.5 L727.2 644.1 L726.3 645.6 L725.4 647.3M755.0 588.1 L766.6 602.9" fill="none" stroke="#5e4e70" stroke-width="1" stroke-linecap="round" opacity="0.7"/><path d="M685 540 L671 430" stroke="#1a6ff0" stroke-width="2"/><path d="M690 542 L862 563" stroke="#dd1f28" stroke-width="2"/><path d="M682 545 L643 690" stroke="#27a046" stroke-width="2"/><polygon points="660.2,404.1 680,406.5 682,419 678.5,434.5 657.5,432.5 655.6,420" fill="#1a6ff0"/><polygon points="676.6,526.2 695.7,527.7 697,533 696,549 693.4,553.6 674.4,552 673,540" fill="#fff"/><polygon points="863,550 879,551.2 881.7,552.4 881.7,565.6 879.5,577 871,578 860,576 860,558" fill="#d91e26"/><polygon points="631.2,687.6 651,690 652.5,700.2 649.5,717 628,715 626,704" fill="#27a046"/></svg>
<!-- STL icon -->
<div class="abs" style="left:0;top:0;width:91px;height:98px;background:#fff"></div>
<svg class="abs" style="left:0;top:0" width="91" height="97" viewBox="0 0 91 97">
<path d="M14 0 H52 V17 Q52 30 65 30 H82 V86 Q82 93 75 93 H14 Q7 93 7 86 V7 Q7 0 14 0 Z" fill="#3f49c9"/>
<path d="M56 1 L81 26 H66 Q56 26 56 16 Z" fill="#3f49c9"/>
<path d="M-6 9.5 H35 Q41 9.5 41 15.5 V36 Q41 42 35 42 H-6 Z" fill="#fff"/>
<path d="M-6 14 H33 Q37 14 37 18 V34 Q37 38 33 38 H-6 Z" fill="#3f49c9"/>
<text x="1.5" y="31" font-family="Liberation Sans" font-weight="bold" font-size="13" fill="#fff">STL</text>
<rect x="20" y="47" width="49" height="4" fill="#fff"/>
<rect x="20" y="62" width="49" height="4" fill="#fff"/>
<rect x="20" y="76" width="49" height="4" fill="#fff"/>
</svg>
<div class="abs" style="left:91px;top:0;width:348px;height:1px;background:#dcdcdc"></div>
<!-- scale panel -->
<svg class="abs" style="left:0;top:246px" width="430" height="236" viewBox="0 0 430 236">
<path d="M11.5 1.5 H426.5 V234.5 H11.5 V47 L-1 34 L11.5 21 Z" fill="#fff" stroke="#cfcfcf" stroke-width="1"/>
</svg>
<div class="t" style="left:28px;top:274px;font-size:14px;color:#e32a2a">X</div>
<div class="t" style="left:28px;top:316px;font-size:14px;color:#3aa850">Y</div>
<div class="t" style="left:28px;top:357px;font-size:14px;color:#2a6ae8">Z</div>
<div class="fld" style="left:45px;top:264px;width:179px;height:33px;border-bottom:2px solid #b4b4b4"></div>
<div class="fld" style="left:232px;top:264px;width:179px;height:33px;border-bottom:2px solid #b4b4b4"></div>
<div class="fld" style="left:45px;top:305px;width:179px;height:33px"></div>
<div class="fld" style="left:232px;top:305px;width:179px;height:33px"></div>
<div class="fld" style="left:45px;top:347px;width:179px;height:32px"></div>
<div class="fld" style="left:232px;top:347px;width:179px;height:32px"></div>
<div class="val" style="left:50px;top:274px">103.472</div>
<div class="val" style="left:50px;top:315px">103.4793</div>
<div class="val" style="left:50px;top:356px">26</div>
<div class="val" style="left:238px;top:274px">100</div>
<div class="val" style="left:238px;top:315px">100</div>
<div class="val" style="left:238px;top:356px">100</div>
<div class="unit" style="left:191px;top:274px">mm</div>
<div class="unit" style="left:191px;top:315px">mm</div>
<div class="unit" style="left:191px;top:356px">mm</div>
<div class="unit" style="left:392px;top:274px">%</div>
<div class="unit" style="left:392px;top:315px">%</div>
<div class="unit" style="left:392px;top:356px">%</div>
<svg class="abs" style="left:62px;top:414px" width="30" height="30" viewBox="0 0 30 30">
<path d="M4.9 17.2 A9.7 9.7 0 1 0 14.6 7.3 H6.5" fill="none" stroke="#100d40" stroke-width="2.1" stroke-linecap="round"/>
<path d="M10.8 2.2 L5.9 7.3 L10.8 12.3" fill="none" stroke="#100d40" stroke-width="2.1" stroke-linecap="round" stroke-linejoin="round"/>
</svg>
<div class="cb" style="left:125.5px;top:399.5px"></div>
<div class="cb" style="left:125.5px;top:435.5px"></div>
<svg class="abs" style="left:125.5px;top:435.5px" width="20" height="20" viewBox="-0.5 -0.5 20 20"><path d="M6.5 9.8 L8.6 11.8 L12.4 7.6" fill="none" stroke="#1e1e1e" stroke-width="2.1"/></svg>
<div class="t" style="left:154px;top:403px;font-size:14px;color:#1e1e1e">Snap Scaling</div>
<div class="t" style="left:154px;top:440px;font-size:14px;color:#1e1e1e">Uniform Scaling</div>
<!-- object list -->
<svg class="abs" style="left:12px;top:687px" width="14" height="10" viewBox="0 0 14 10"><path d="M2 8 L7 3 L12 8" fill="none" stroke="#7a7a7a" stroke-width="1.6"/></svg>
<div class="t" style="left:43px;top:687px;font-size:14px;letter-spacing:0.35px;color:#5e5e5e">Object list</div>
<svg class="abs" style="left:12px;top:719px" width="22" height="22" viewBox="0 0 22 22"><path d="M5.5 16.5 L6 14.2 L16.2 4.4 L18.2 6.4 L8 16.2 Z" fill="#5e5e5e"/><path d="M2 19.5 H20" stroke="#5e5e5e" stroke-width="1.6"/></svg>
<div class="t" style="left:51.5px;top:724px;font-size:14px;letter-spacing:-0.2px;color:#5e5e5e">STL1456</div>
<div class="t" style="left:10.5px;top:757px;font-size:13.5px;letter-spacing:0.38px;color:#5e5e5e">103.5 x 103.5 x 26.0 mm</div>
<svg class="abs" style="left:0;top:788px" width="220" height="40" viewBox="0 788 220 40">
<g fill="none" stroke="#666" stroke-width="2.3" stroke-linejoin="round" stroke-linecap="round">
<path d="M27.4 795 L38 801 V813.2 L27.4 819 L17 813.2 V801 Z M17 801 L27.4 806.5 L38 801 M27.4 806.5 V819"/>
<path d="M57 802.8 H72.3 V817 H57 Z M57 802.8 L63.3 796 H78.6 L72.3 802.8 M78.6 796 V810.2 L72.3 817"/>
<path d="M96.8 801.8 H111.7 V817.3 H96.8 Z M96.8 801.8 L102.8 796.1 H118.7 L111.7 801.8 M118.7 796.1 V810.3 L111.7 817.3"/>
<path d="M143.7 802.4 H158.6 V817.3 H143.7 Z M143.7 802.4 L136.7 796.1 H152.6 L158.6 802.4 M136.7 796.1 V810.3 L143.7 817.3"/>
<path d="M176.7 802.4 H191.6 V817.3 H176.7 Z M176.7 802.4 L182.7 796.1 H198.5 L191.6 802.4 M198.5 796.1 V810.3 L191.6 817.3"/>
</g>
<g fill="#666" stroke="#666" stroke-width="2.3" stroke-linejoin="round">
<path d="M57 802.8 H72.3 V817 H57 Z"/>
<path d="M96.8 801.8 L102.8 796.1 H118.7 L111.7 801.8 Z"/>
<path d="M143.7 802.4 L136.7 796.1 V810.3 L143.7 817.3 Z"/>
<path d="M191.6 802.4 L198.5 796.1 V810.3 L191.6 817.3 Z"/>
</g>
</svg>
</div></body></html>
